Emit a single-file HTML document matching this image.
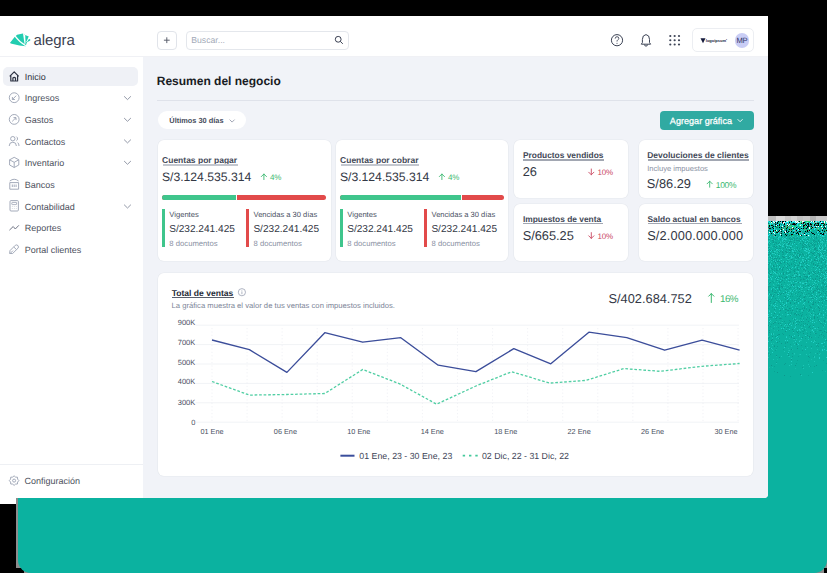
<!DOCTYPE html>
<html><head><meta charset="utf-8"><style>
html,body{margin:0;padding:0;width:827px;height:573px;overflow:hidden;background:#000}
.r{position:absolute}
.t{position:absolute;line-height:1;white-space:nowrap;font-family:"Liberation Sans", sans-serif;text-rendering:geometricPrecision}
svg text{font-family:"Liberation Sans", sans-serif}
</style></head><body>
<div class="r" style="left:0px;top:0px;width:827px;height:573px;background:#000;"></div><div class="r" style="left:16px;top:216px;width:811px;height:357px;background:#8c8c8c;"></div><div class="r" style="left:16px;top:568px;width:8px;height:5px;background:#000;"></div><div class="r" style="left:824px;top:568px;width:3px;height:5px;background:#000;"></div><div class="r" style="left:17.5px;top:221px;width:809.5px;height:352px;background:#0bb2a0;border-radius:0 0 13px 13px"></div><svg class="r" style="left:0;top:0" width="827" height="573"><rect x="768" y="216" width="8" height="5" fill="#bdbdbd"/><rect x="776" y="216" width="9" height="5" fill="#dadada"/><rect x="785" y="216" width="6" height="5" fill="#c9c9c9"/><rect x="791" y="216" width="6" height="5" fill="#d4d4d4"/><rect x="797" y="216" width="6" height="5" fill="#c2c2c2"/><rect x="803" y="216" width="7" height="5" fill="#c9c9c9"/><rect x="810" y="216" width="6" height="5" fill="#b3b3b3"/><rect x="816" y="216" width="9" height="5" fill="#c9c9c9"/><rect x="825" y="216" width="7" height="5" fill="#c9c9c9"/><rect x="768" y="221" width="1" height="1" fill="#1ee6ef"/><rect x="770" y="221" width="1" height="1" fill="#1ee6ef"/><rect x="771" y="221" width="1" height="1" fill="#000000"/><rect x="773" y="221" width="1" height="1" fill="#ffffff"/><rect x="774" y="221" width="1" height="1" fill="#1ee6ef"/><rect x="775" y="221" width="1" height="1" fill="#9ad0d0"/><rect x="776" y="221" width="1" height="1" fill="#ffffff"/><rect x="777" y="221" width="1" height="1" fill="#1ee6ef"/><rect x="778" y="221" width="1" height="1" fill="#000000"/><rect x="780" y="221" width="1" height="1" fill="#000000"/><rect x="781" y="221" width="1" height="1" fill="#1ee6ef"/><rect x="782" y="221" width="1" height="1" fill="#000000"/><rect x="783" y="221" width="1" height="1" fill="#000000"/><rect x="784" y="221" width="1" height="1" fill="#1ee6ef"/><rect x="785" y="221" width="1" height="1" fill="#000000"/><rect x="786" y="221" width="1" height="1" fill="#7ff0f0"/><rect x="787" y="221" width="1" height="1" fill="#ffffff"/><rect x="788" y="221" width="1" height="1" fill="#1ee6ef"/><rect x="789" y="221" width="1" height="1" fill="#22d86a"/><rect x="790" y="221" width="1" height="1" fill="#1ee6ef"/><rect x="791" y="221" width="1" height="1" fill="#000000"/><rect x="792" y="221" width="1" height="1" fill="#7ff0f0"/><rect x="793" y="221" width="1" height="1" fill="#7ff0f0"/><rect x="794" y="221" width="1" height="1" fill="#1ee6ef"/><rect x="795" y="221" width="1" height="1" fill="#ffffff"/><rect x="796" y="221" width="1" height="1" fill="#7ff0f0"/><rect x="797" y="221" width="1" height="1" fill="#ffffff"/><rect x="798" y="221" width="1" height="1" fill="#22d86a"/><rect x="799" y="221" width="1" height="1" fill="#000000"/><rect x="800" y="221" width="1" height="1" fill="#9ad0d0"/><rect x="801" y="221" width="1" height="1" fill="#22d86a"/><rect x="802" y="221" width="1" height="1" fill="#ffffff"/><rect x="803" y="221" width="1" height="1" fill="#ffffff"/><rect x="804" y="221" width="1" height="1" fill="#1ee6ef"/><rect x="806" y="221" width="1" height="1" fill="#22d86a"/><rect x="807" y="221" width="1" height="1" fill="#22d86a"/><rect x="808" y="221" width="1" height="1" fill="#22d86a"/><rect x="809" y="221" width="1" height="1" fill="#22d86a"/><rect x="811" y="221" width="1" height="1" fill="#ffffff"/><rect x="813" y="221" width="1" height="1" fill="#ffffff"/><rect x="814" y="221" width="1" height="1" fill="#000000"/><rect x="815" y="221" width="1" height="1" fill="#1ee6ef"/><rect x="816" y="221" width="1" height="1" fill="#7ff0f0"/><rect x="817" y="221" width="1" height="1" fill="#1ee6ef"/><rect x="818" y="221" width="1" height="1" fill="#9ad0d0"/><rect x="819" y="221" width="1" height="1" fill="#1ee6ef"/><rect x="820" y="221" width="1" height="1" fill="#000000"/><rect x="821" y="221" width="1" height="1" fill="#1ee6ef"/><rect x="824" y="221" width="1" height="1" fill="#ffffff"/><rect x="826" y="221" width="1" height="1" fill="#ffffff"/><rect x="769" y="222" width="1" height="1" fill="#1ee6ef"/><rect x="770" y="222" width="1" height="1" fill="#22d86a"/><rect x="771" y="222" width="1" height="1" fill="#ffffff"/><rect x="773" y="222" width="1" height="1" fill="#7ff0f0"/><rect x="774" y="222" width="1" height="1" fill="#ffffff"/><rect x="775" y="222" width="1" height="1" fill="#000000"/><rect x="776" y="222" width="1" height="1" fill="#1ee6ef"/><rect x="777" y="222" width="1" height="1" fill="#000000"/><rect x="779" y="222" width="1" height="1" fill="#22d86a"/><rect x="780" y="222" width="1" height="1" fill="#9ad0d0"/><rect x="781" y="222" width="1" height="1" fill="#9ad0d0"/><rect x="782" y="222" width="1" height="1" fill="#000000"/><rect x="783" y="222" width="1" height="1" fill="#ffffff"/><rect x="784" y="222" width="1" height="1" fill="#ffffff"/><rect x="785" y="222" width="1" height="1" fill="#1ee6ef"/><rect x="786" y="222" width="1" height="1" fill="#1ee6ef"/><rect x="787" y="222" width="1" height="1" fill="#1ee6ef"/><rect x="788" y="222" width="1" height="1" fill="#1ee6ef"/><rect x="789" y="222" width="1" height="1" fill="#000000"/><rect x="790" y="222" width="1" height="1" fill="#1ee6ef"/><rect x="792" y="222" width="1" height="1" fill="#1ee6ef"/><rect x="794" y="222" width="1" height="1" fill="#1ee6ef"/><rect x="795" y="222" width="1" height="1" fill="#7ff0f0"/><rect x="796" y="222" width="1" height="1" fill="#ffffff"/><rect x="797" y="222" width="1" height="1" fill="#9ad0d0"/><rect x="798" y="222" width="1" height="1" fill="#ffffff"/><rect x="799" y="222" width="1" height="1" fill="#7ff0f0"/><rect x="800" y="222" width="1" height="1" fill="#1ee6ef"/><rect x="801" y="222" width="1" height="1" fill="#22d86a"/><rect x="802" y="222" width="1" height="1" fill="#9ad0d0"/><rect x="803" y="222" width="1" height="1" fill="#000000"/><rect x="804" y="222" width="1" height="1" fill="#000000"/><rect x="805" y="222" width="1" height="1" fill="#22d86a"/><rect x="806" y="222" width="1" height="1" fill="#1ee6ef"/><rect x="807" y="222" width="1" height="1" fill="#7ff0f0"/><rect x="810" y="222" width="1" height="1" fill="#7ff0f0"/><rect x="811" y="222" width="1" height="1" fill="#1ee6ef"/><rect x="812" y="222" width="1" height="1" fill="#1ee6ef"/><rect x="813" y="222" width="1" height="1" fill="#9ad0d0"/><rect x="814" y="222" width="1" height="1" fill="#22d86a"/><rect x="815" y="222" width="1" height="1" fill="#9ad0d0"/><rect x="816" y="222" width="1" height="1" fill="#9ad0d0"/><rect x="820" y="222" width="1" height="1" fill="#1ee6ef"/><rect x="821" y="222" width="1" height="1" fill="#ffffff"/><rect x="822" y="222" width="1" height="1" fill="#1ee6ef"/><rect x="824" y="222" width="1" height="1" fill="#ffffff"/><rect x="825" y="222" width="1" height="1" fill="#22d86a"/><rect x="826" y="222" width="1" height="1" fill="#7ff0f0"/><rect x="768" y="223" width="1" height="1" fill="#0c7a70"/><rect x="770" y="223" width="1" height="1" fill="#1ee6ef"/><rect x="771" y="223" width="1" height="1" fill="#35c9b9"/><rect x="772" y="223" width="1" height="1" fill="#1ee6ef"/><rect x="773" y="223" width="1" height="1" fill="#8a8a8a"/><rect x="775" y="223" width="1" height="1" fill="#0c7a70"/><rect x="777" y="223" width="1" height="1" fill="#000000"/><rect x="781" y="223" width="1" height="1" fill="#1ee6ef"/><rect x="782" y="223" width="1" height="1" fill="#0c7a70"/><rect x="783" y="223" width="1" height="1" fill="#ffffff"/><rect x="784" y="223" width="1" height="1" fill="#000000"/><rect x="785" y="223" width="1" height="1" fill="#1ee6ef"/><rect x="787" y="223" width="1" height="1" fill="#8a8a8a"/><rect x="790" y="223" width="1" height="1" fill="#8a8a8a"/><rect x="792" y="223" width="1" height="1" fill="#0c7a70"/><rect x="793" y="223" width="1" height="1" fill="#0a0a0a"/><rect x="794" y="223" width="1" height="1" fill="#000000"/><rect x="796" y="223" width="1" height="1" fill="#000000"/><rect x="797" y="223" width="1" height="1" fill="#1ee6ef"/><rect x="798" y="223" width="1" height="1" fill="#1ee6ef"/><rect x="800" y="223" width="1" height="1" fill="#22d86a"/><rect x="801" y="223" width="1" height="1" fill="#0a0a0a"/><rect x="802" y="223" width="1" height="1" fill="#8a8a8a"/><rect x="803" y="223" width="1" height="1" fill="#0a0a0a"/><rect x="804" y="223" width="1" height="1" fill="#1ee6ef"/><rect x="805" y="223" width="1" height="1" fill="#0c7a70"/><rect x="807" y="223" width="1" height="1" fill="#0a0a0a"/><rect x="808" y="223" width="1" height="1" fill="#0a0a0a"/><rect x="809" y="223" width="1" height="1" fill="#1ee6ef"/><rect x="810" y="223" width="1" height="1" fill="#000000"/><rect x="813" y="223" width="1" height="1" fill="#1ee6ef"/><rect x="814" y="223" width="1" height="1" fill="#35c9b9"/><rect x="815" y="223" width="1" height="1" fill="#000000"/><rect x="816" y="223" width="1" height="1" fill="#0c7a70"/><rect x="817" y="223" width="1" height="1" fill="#0a0a0a"/><rect x="818" y="223" width="1" height="1" fill="#000000"/><rect x="820" y="223" width="1" height="1" fill="#1ee6ef"/><rect x="821" y="223" width="1" height="1" fill="#000000"/><rect x="822" y="223" width="1" height="1" fill="#0a0a0a"/><rect x="823" y="223" width="1" height="1" fill="#000000"/><rect x="824" y="223" width="1" height="1" fill="#8a8a8a"/><rect x="826" y="223" width="1" height="1" fill="#1ee6ef"/><rect x="768" y="224" width="1" height="1" fill="#35c9b9"/><rect x="769" y="224" width="1" height="1" fill="#35c9b9"/><rect x="770" y="224" width="1" height="1" fill="#1ee6ef"/><rect x="771" y="224" width="1" height="1" fill="#22d86a"/><rect x="774" y="224" width="1" height="1" fill="#35c9b9"/><rect x="775" y="224" width="1" height="1" fill="#000000"/><rect x="776" y="224" width="1" height="1" fill="#0c7a70"/><rect x="777" y="224" width="1" height="1" fill="#1ee6ef"/><rect x="778" y="224" width="1" height="1" fill="#1ee6ef"/><rect x="779" y="224" width="1" height="1" fill="#000000"/><rect x="781" y="224" width="1" height="1" fill="#0c7a70"/><rect x="782" y="224" width="1" height="1" fill="#1ee6ef"/><rect x="784" y="224" width="1" height="1" fill="#000000"/><rect x="785" y="224" width="1" height="1" fill="#35c9b9"/><rect x="786" y="224" width="1" height="1" fill="#1ee6ef"/><rect x="787" y="224" width="1" height="1" fill="#ffffff"/><rect x="789" y="224" width="1" height="1" fill="#ffffff"/><rect x="790" y="224" width="1" height="1" fill="#0c7a70"/><rect x="791" y="224" width="1" height="1" fill="#0c7a70"/><rect x="792" y="224" width="1" height="1" fill="#0a0a0a"/><rect x="793" y="224" width="1" height="1" fill="#000000"/><rect x="794" y="224" width="1" height="1" fill="#0a0a0a"/><rect x="795" y="224" width="1" height="1" fill="#0a0a0a"/><rect x="797" y="224" width="1" height="1" fill="#1ee6ef"/><rect x="799" y="224" width="1" height="1" fill="#22d86a"/><rect x="800" y="224" width="1" height="1" fill="#1ee6ef"/><rect x="801" y="224" width="1" height="1" fill="#1ee6ef"/><rect x="804" y="224" width="1" height="1" fill="#22d86a"/><rect x="805" y="224" width="1" height="1" fill="#0a0a0a"/><rect x="807" y="224" width="1" height="1" fill="#0c7a70"/><rect x="808" y="224" width="1" height="1" fill="#000000"/><rect x="810" y="224" width="1" height="1" fill="#000000"/><rect x="811" y="224" width="1" height="1" fill="#000000"/><rect x="812" y="224" width="1" height="1" fill="#22d86a"/><rect x="813" y="224" width="1" height="1" fill="#1ee6ef"/><rect x="814" y="224" width="1" height="1" fill="#000000"/><rect x="815" y="224" width="1" height="1" fill="#0c7a70"/><rect x="817" y="224" width="1" height="1" fill="#22d86a"/><rect x="818" y="224" width="1" height="1" fill="#000000"/><rect x="819" y="224" width="1" height="1" fill="#1ee6ef"/><rect x="822" y="224" width="1" height="1" fill="#1ee6ef"/><rect x="823" y="224" width="1" height="1" fill="#22d86a"/><rect x="824" y="224" width="1" height="1" fill="#0a0a0a"/><rect x="826" y="224" width="1" height="1" fill="#0a0a0a"/><rect x="768" y="225" width="1" height="1" fill="#22d86a"/><rect x="769" y="225" width="1" height="1" fill="#000000"/><rect x="771" y="225" width="1" height="1" fill="#000000"/><rect x="772" y="225" width="1" height="1" fill="#0a0a0a"/><rect x="774" y="225" width="1" height="1" fill="#1ee6ef"/><rect x="776" y="225" width="1" height="1" fill="#ffffff"/><rect x="777" y="225" width="1" height="1" fill="#0a0a0a"/><rect x="779" y="225" width="1" height="1" fill="#0a0a0a"/><rect x="780" y="225" width="1" height="1" fill="#1ee6ef"/><rect x="782" y="225" width="1" height="1" fill="#1ee6ef"/><rect x="783" y="225" width="1" height="1" fill="#0c7a70"/><rect x="786" y="225" width="1" height="1" fill="#22d86a"/><rect x="787" y="225" width="1" height="1" fill="#000000"/><rect x="788" y="225" width="1" height="1" fill="#ffffff"/><rect x="790" y="225" width="1" height="1" fill="#22d86a"/><rect x="791" y="225" width="1" height="1" fill="#22d86a"/><rect x="792" y="225" width="1" height="1" fill="#1ee6ef"/><rect x="793" y="225" width="1" height="1" fill="#35c9b9"/><rect x="794" y="225" width="1" height="1" fill="#0c7a70"/><rect x="797" y="225" width="1" height="1" fill="#1ee6ef"/><rect x="798" y="225" width="1" height="1" fill="#22d86a"/><rect x="799" y="225" width="1" height="1" fill="#1ee6ef"/><rect x="800" y="225" width="1" height="1" fill="#ffffff"/><rect x="801" y="225" width="1" height="1" fill="#22d86a"/><rect x="802" y="225" width="1" height="1" fill="#1ee6ef"/><rect x="803" y="225" width="1" height="1" fill="#000000"/><rect x="804" y="225" width="1" height="1" fill="#000000"/><rect x="805" y="225" width="1" height="1" fill="#8a8a8a"/><rect x="806" y="225" width="1" height="1" fill="#000000"/><rect x="807" y="225" width="1" height="1" fill="#1ee6ef"/><rect x="808" y="225" width="1" height="1" fill="#0a0a0a"/><rect x="810" y="225" width="1" height="1" fill="#8a8a8a"/><rect x="811" y="225" width="1" height="1" fill="#0c7a70"/><rect x="812" y="225" width="1" height="1" fill="#35c9b9"/><rect x="813" y="225" width="1" height="1" fill="#8a8a8a"/><rect x="814" y="225" width="1" height="1" fill="#000000"/><rect x="816" y="225" width="1" height="1" fill="#0a0a0a"/><rect x="817" y="225" width="1" height="1" fill="#0a0a0a"/><rect x="818" y="225" width="1" height="1" fill="#0a0a0a"/><rect x="820" y="225" width="1" height="1" fill="#000000"/><rect x="822" y="225" width="1" height="1" fill="#1ee6ef"/><rect x="823" y="225" width="1" height="1" fill="#000000"/><rect x="824" y="225" width="1" height="1" fill="#0c7a70"/><rect x="826" y="225" width="1" height="1" fill="#35c9b9"/><rect x="768" y="226" width="1" height="1" fill="#07b09d"/><rect x="769" y="226" width="1" height="1" fill="#0a0a0a"/><rect x="770" y="226" width="1" height="1" fill="#35c9b9"/><rect x="771" y="226" width="1" height="1" fill="#35c9b9"/><rect x="773" y="226" width="1" height="1" fill="#0a0a0a"/><rect x="775" y="226" width="1" height="1" fill="#0a0a0a"/><rect x="776" y="226" width="1" height="1" fill="#07b09d"/><rect x="777" y="226" width="1" height="1" fill="#07b09d"/><rect x="778" y="226" width="1" height="1" fill="#22d86a"/><rect x="779" y="226" width="1" height="1" fill="#07b09d"/><rect x="780" y="226" width="1" height="1" fill="#07b09d"/><rect x="781" y="226" width="1" height="1" fill="#35c9b9"/><rect x="782" y="226" width="1" height="1" fill="#ffffff"/><rect x="783" y="226" width="1" height="1" fill="#07b09d"/><rect x="784" y="226" width="1" height="1" fill="#000000"/><rect x="785" y="226" width="1" height="1" fill="#07b09d"/><rect x="786" y="226" width="1" height="1" fill="#8a8a8a"/><rect x="787" y="226" width="1" height="1" fill="#22d86a"/><rect x="788" y="226" width="1" height="1" fill="#07b09d"/><rect x="789" y="226" width="1" height="1" fill="#8a8a8a"/><rect x="790" y="226" width="1" height="1" fill="#35c9b9"/><rect x="791" y="226" width="1" height="1" fill="#22d86a"/><rect x="793" y="226" width="1" height="1" fill="#1ee6ef"/><rect x="794" y="226" width="1" height="1" fill="#22d86a"/><rect x="795" y="226" width="1" height="1" fill="#22d86a"/><rect x="796" y="226" width="1" height="1" fill="#35c9b9"/><rect x="799" y="226" width="1" height="1" fill="#22d86a"/><rect x="802" y="226" width="1" height="1" fill="#35c9b9"/><rect x="803" y="226" width="1" height="1" fill="#0a0a0a"/><rect x="805" y="226" width="1" height="1" fill="#22d86a"/><rect x="806" y="226" width="1" height="1" fill="#1ee6ef"/><rect x="807" y="226" width="1" height="1" fill="#000000"/><rect x="808" y="226" width="1" height="1" fill="#0a0a0a"/><rect x="809" y="226" width="1" height="1" fill="#0c7a70"/><rect x="810" y="226" width="1" height="1" fill="#07b09d"/><rect x="811" y="226" width="1" height="1" fill="#000000"/><rect x="812" y="226" width="1" height="1" fill="#1ee6ef"/><rect x="813" y="226" width="1" height="1" fill="#35c9b9"/><rect x="814" y="226" width="1" height="1" fill="#1ee6ef"/><rect x="815" y="226" width="1" height="1" fill="#35c9b9"/><rect x="816" y="226" width="1" height="1" fill="#ffffff"/><rect x="817" y="226" width="1" height="1" fill="#1ee6ef"/><rect x="818" y="226" width="1" height="1" fill="#ffffff"/><rect x="819" y="226" width="1" height="1" fill="#0c7a70"/><rect x="820" y="226" width="1" height="1" fill="#07b09d"/><rect x="821" y="226" width="1" height="1" fill="#ffffff"/><rect x="822" y="226" width="1" height="1" fill="#1ee6ef"/><rect x="823" y="226" width="1" height="1" fill="#07b09d"/><rect x="824" y="226" width="1" height="1" fill="#0c7a70"/><rect x="825" y="226" width="1" height="1" fill="#ffffff"/><rect x="768" y="227" width="1" height="1" fill="#0c7a70"/><rect x="772" y="227" width="1" height="1" fill="#000000"/><rect x="774" y="227" width="1" height="1" fill="#1ee6ef"/><rect x="775" y="227" width="1" height="1" fill="#22d86a"/><rect x="776" y="227" width="1" height="1" fill="#0c7a70"/><rect x="777" y="227" width="1" height="1" fill="#0c7a70"/><rect x="779" y="227" width="1" height="1" fill="#000000"/><rect x="781" y="227" width="1" height="1" fill="#0a0a0a"/><rect x="782" y="227" width="1" height="1" fill="#07b09d"/><rect x="783" y="227" width="1" height="1" fill="#07b09d"/><rect x="784" y="227" width="1" height="1" fill="#8a8a8a"/><rect x="786" y="227" width="1" height="1" fill="#22d86a"/><rect x="787" y="227" width="1" height="1" fill="#0a0a0a"/><rect x="788" y="227" width="1" height="1" fill="#35c9b9"/><rect x="789" y="227" width="1" height="1" fill="#22d86a"/><rect x="790" y="227" width="1" height="1" fill="#07b09d"/><rect x="792" y="227" width="1" height="1" fill="#ffffff"/><rect x="793" y="227" width="1" height="1" fill="#22d86a"/><rect x="794" y="227" width="1" height="1" fill="#07b09d"/><rect x="795" y="227" width="1" height="1" fill="#1ee6ef"/><rect x="796" y="227" width="1" height="1" fill="#000000"/><rect x="797" y="227" width="1" height="1" fill="#07b09d"/><rect x="798" y="227" width="1" height="1" fill="#1ee6ef"/><rect x="799" y="227" width="1" height="1" fill="#0c7a70"/><rect x="801" y="227" width="1" height="1" fill="#1ee6ef"/><rect x="802" y="227" width="1" height="1" fill="#1ee6ef"/><rect x="803" y="227" width="1" height="1" fill="#0c7a70"/><rect x="804" y="227" width="1" height="1" fill="#0c7a70"/><rect x="805" y="227" width="1" height="1" fill="#22d86a"/><rect x="807" y="227" width="1" height="1" fill="#000000"/><rect x="809" y="227" width="1" height="1" fill="#ffffff"/><rect x="811" y="227" width="1" height="1" fill="#22d86a"/><rect x="812" y="227" width="1" height="1" fill="#000000"/><rect x="813" y="227" width="1" height="1" fill="#8a8a8a"/><rect x="815" y="227" width="1" height="1" fill="#0a0a0a"/><rect x="816" y="227" width="1" height="1" fill="#07b09d"/><rect x="818" y="227" width="1" height="1" fill="#22d86a"/><rect x="820" y="227" width="1" height="1" fill="#07b09d"/><rect x="821" y="227" width="1" height="1" fill="#22d86a"/><rect x="824" y="227" width="1" height="1" fill="#000000"/><rect x="825" y="227" width="1" height="1" fill="#07b09d"/><rect x="768" y="228" width="1" height="1" fill="#8a8a8a"/><rect x="769" y="228" width="1" height="1" fill="#000000"/><rect x="770" y="228" width="1" height="1" fill="#0a0a0a"/><rect x="773" y="228" width="1" height="1" fill="#000000"/><rect x="774" y="228" width="1" height="1" fill="#1ee6ef"/><rect x="775" y="228" width="1" height="1" fill="#07b09d"/><rect x="776" y="228" width="1" height="1" fill="#07b09d"/><rect x="780" y="228" width="1" height="1" fill="#07b09d"/><rect x="781" y="228" width="1" height="1" fill="#07b09d"/><rect x="782" y="228" width="1" height="1" fill="#8a8a8a"/><rect x="784" y="228" width="1" height="1" fill="#22d86a"/><rect x="786" y="228" width="1" height="1" fill="#0a0a0a"/><rect x="787" y="228" width="1" height="1" fill="#07b09d"/><rect x="789" y="228" width="1" height="1" fill="#22d86a"/><rect x="790" y="228" width="1" height="1" fill="#8a8a8a"/><rect x="791" y="228" width="1" height="1" fill="#22d86a"/><rect x="792" y="228" width="1" height="1" fill="#8a8a8a"/><rect x="793" y="228" width="1" height="1" fill="#0a0a0a"/><rect x="794" y="228" width="1" height="1" fill="#35c9b9"/><rect x="795" y="228" width="1" height="1" fill="#0c7a70"/><rect x="796" y="228" width="1" height="1" fill="#1ee6ef"/><rect x="797" y="228" width="1" height="1" fill="#1ee6ef"/><rect x="798" y="228" width="1" height="1" fill="#000000"/><rect x="801" y="228" width="1" height="1" fill="#000000"/><rect x="802" y="228" width="1" height="1" fill="#07b09d"/><rect x="803" y="228" width="1" height="1" fill="#000000"/><rect x="804" y="228" width="1" height="1" fill="#07b09d"/><rect x="805" y="228" width="1" height="1" fill="#0c7a70"/><rect x="806" y="228" width="1" height="1" fill="#000000"/><rect x="809" y="228" width="1" height="1" fill="#ffffff"/><rect x="810" y="228" width="1" height="1" fill="#07b09d"/><rect x="811" y="228" width="1" height="1" fill="#0a0a0a"/><rect x="812" y="228" width="1" height="1" fill="#35c9b9"/><rect x="814" y="228" width="1" height="1" fill="#1ee6ef"/><rect x="815" y="228" width="1" height="1" fill="#1ee6ef"/><rect x="816" y="228" width="1" height="1" fill="#22d86a"/><rect x="817" y="228" width="1" height="1" fill="#8a8a8a"/><rect x="818" y="228" width="1" height="1" fill="#1ee6ef"/><rect x="820" y="228" width="1" height="1" fill="#07b09d"/><rect x="821" y="228" width="1" height="1" fill="#8a8a8a"/><rect x="822" y="228" width="1" height="1" fill="#ffffff"/><rect x="823" y="228" width="1" height="1" fill="#000000"/><rect x="825" y="228" width="1" height="1" fill="#000000"/><rect x="768" y="229" width="1" height="1" fill="#35c9b9"/><rect x="774" y="229" width="1" height="1" fill="#1ee6ef"/><rect x="776" y="229" width="1" height="1" fill="#35c9b9"/><rect x="777" y="229" width="1" height="1" fill="#07b09d"/><rect x="781" y="229" width="1" height="1" fill="#000000"/><rect x="782" y="229" width="1" height="1" fill="#22d86a"/><rect x="783" y="229" width="1" height="1" fill="#ffffff"/><rect x="785" y="229" width="1" height="1" fill="#07b09d"/><rect x="786" y="229" width="1" height="1" fill="#0c7a70"/><rect x="788" y="229" width="1" height="1" fill="#07b09d"/><rect x="789" y="229" width="1" height="1" fill="#000000"/><rect x="791" y="229" width="1" height="1" fill="#0a0a0a"/><rect x="793" y="229" width="1" height="1" fill="#0c7a70"/><rect x="795" y="229" width="1" height="1" fill="#07b09d"/><rect x="796" y="229" width="1" height="1" fill="#07b09d"/><rect x="798" y="229" width="1" height="1" fill="#ffffff"/><rect x="799" y="229" width="1" height="1" fill="#000000"/><rect x="801" y="229" width="1" height="1" fill="#1ee6ef"/><rect x="804" y="229" width="1" height="1" fill="#22d86a"/><rect x="805" y="229" width="1" height="1" fill="#8a8a8a"/><rect x="806" y="229" width="1" height="1" fill="#07b09d"/><rect x="808" y="229" width="1" height="1" fill="#22d86a"/><rect x="809" y="229" width="1" height="1" fill="#07b09d"/><rect x="814" y="229" width="1" height="1" fill="#1ee6ef"/><rect x="815" y="229" width="1" height="1" fill="#07b09d"/><rect x="818" y="229" width="1" height="1" fill="#22d86a"/><rect x="821" y="229" width="1" height="1" fill="#35c9b9"/><rect x="822" y="229" width="1" height="1" fill="#07b09d"/><rect x="824" y="229" width="1" height="1" fill="#07b09d"/><rect x="768" y="230" width="1" height="1" fill="#0c7a70"/><rect x="769" y="230" width="1" height="1" fill="#07b09d"/><rect x="771" y="230" width="1" height="1" fill="#1ee6ef"/><rect x="772" y="230" width="1" height="1" fill="#1ee6ef"/><rect x="773" y="230" width="1" height="1" fill="#000000"/><rect x="775" y="230" width="1" height="1" fill="#0a0a0a"/><rect x="776" y="230" width="1" height="1" fill="#ffffff"/><rect x="779" y="230" width="1" height="1" fill="#000000"/><rect x="780" y="230" width="1" height="1" fill="#ffffff"/><rect x="781" y="230" width="1" height="1" fill="#07b09d"/><rect x="783" y="230" width="1" height="1" fill="#1ee6ef"/><rect x="784" y="230" width="1" height="1" fill="#8a8a8a"/><rect x="786" y="230" width="1" height="1" fill="#0a0a0a"/><rect x="789" y="230" width="1" height="1" fill="#22d86a"/><rect x="790" y="230" width="1" height="1" fill="#8a8a8a"/><rect x="791" y="230" width="1" height="1" fill="#22d86a"/><rect x="793" y="230" width="1" height="1" fill="#1ee6ef"/><rect x="794" y="230" width="1" height="1" fill="#1ee6ef"/><rect x="795" y="230" width="1" height="1" fill="#8a8a8a"/><rect x="796" y="230" width="1" height="1" fill="#000000"/><rect x="797" y="230" width="1" height="1" fill="#1ee6ef"/><rect x="798" y="230" width="1" height="1" fill="#1ee6ef"/><rect x="800" y="230" width="1" height="1" fill="#35c9b9"/><rect x="802" y="230" width="1" height="1" fill="#35c9b9"/><rect x="804" y="230" width="1" height="1" fill="#35c9b9"/><rect x="806" y="230" width="1" height="1" fill="#22d86a"/><rect x="807" y="230" width="1" height="1" fill="#000000"/><rect x="808" y="230" width="1" height="1" fill="#8a8a8a"/><rect x="809" y="230" width="1" height="1" fill="#000000"/><rect x="810" y="230" width="1" height="1" fill="#1ee6ef"/><rect x="811" y="230" width="1" height="1" fill="#22d86a"/><rect x="814" y="230" width="1" height="1" fill="#07b09d"/><rect x="817" y="230" width="1" height="1" fill="#0c7a70"/><rect x="818" y="230" width="1" height="1" fill="#000000"/><rect x="819" y="230" width="1" height="1" fill="#22d86a"/><rect x="820" y="230" width="1" height="1" fill="#07b09d"/><rect x="822" y="230" width="1" height="1" fill="#000000"/><rect x="824" y="230" width="1" height="1" fill="#0c7a70"/><rect x="825" y="230" width="1" height="1" fill="#22d86a"/><rect x="826" y="230" width="1" height="1" fill="#000000"/><rect x="770" y="231" width="1" height="1" fill="#000000"/><rect x="773" y="231" width="1" height="1" fill="#0a0a0a"/><rect x="774" y="231" width="1" height="1" fill="#1ee6ef"/><rect x="775" y="231" width="1" height="1" fill="#22d86a"/><rect x="776" y="231" width="1" height="1" fill="#22d86a"/><rect x="778" y="231" width="1" height="1" fill="#000000"/><rect x="779" y="231" width="1" height="1" fill="#8a8a8a"/><rect x="781" y="231" width="1" height="1" fill="#000000"/><rect x="784" y="231" width="1" height="1" fill="#1ee6ef"/><rect x="785" y="231" width="1" height="1" fill="#ffffff"/><rect x="786" y="231" width="1" height="1" fill="#000000"/><rect x="787" y="231" width="1" height="1" fill="#1ee6ef"/><rect x="788" y="231" width="1" height="1" fill="#000000"/><rect x="789" y="231" width="1" height="1" fill="#0c7a70"/><rect x="790" y="231" width="1" height="1" fill="#1ee6ef"/><rect x="791" y="231" width="1" height="1" fill="#000000"/><rect x="795" y="231" width="1" height="1" fill="#8a8a8a"/><rect x="798" y="231" width="1" height="1" fill="#0c7a70"/><rect x="799" y="231" width="1" height="1" fill="#0a0a0a"/><rect x="800" y="231" width="1" height="1" fill="#000000"/><rect x="801" y="231" width="1" height="1" fill="#35c9b9"/><rect x="805" y="231" width="1" height="1" fill="#000000"/><rect x="807" y="231" width="1" height="1" fill="#000000"/><rect x="810" y="231" width="1" height="1" fill="#07b09d"/><rect x="813" y="231" width="1" height="1" fill="#07b09d"/><rect x="817" y="231" width="1" height="1" fill="#35c9b9"/><rect x="818" y="231" width="1" height="1" fill="#1ee6ef"/><rect x="819" y="231" width="1" height="1" fill="#0a0a0a"/><rect x="820" y="231" width="1" height="1" fill="#0c7a70"/><rect x="821" y="231" width="1" height="1" fill="#1ee6ef"/><rect x="824" y="231" width="1" height="1" fill="#0a0a0a"/><rect x="769" y="232" width="1" height="1" fill="#ffffff"/><rect x="773" y="232" width="1" height="1" fill="#ffffff"/><rect x="774" y="232" width="1" height="1" fill="#1ee6ef"/><rect x="775" y="232" width="1" height="1" fill="#07b09d"/><rect x="776" y="232" width="1" height="1" fill="#0a0a0a"/><rect x="777" y="232" width="1" height="1" fill="#000000"/><rect x="778" y="232" width="1" height="1" fill="#35c9b9"/><rect x="780" y="232" width="1" height="1" fill="#8a8a8a"/><rect x="783" y="232" width="1" height="1" fill="#35c9b9"/><rect x="784" y="232" width="1" height="1" fill="#000000"/><rect x="785" y="232" width="1" height="1" fill="#ffffff"/><rect x="786" y="232" width="1" height="1" fill="#07b09d"/><rect x="787" y="232" width="1" height="1" fill="#0a0a0a"/><rect x="789" y="232" width="1" height="1" fill="#1ee6ef"/><rect x="790" y="232" width="1" height="1" fill="#07b09d"/><rect x="791" y="232" width="1" height="1" fill="#07b09d"/><rect x="793" y="232" width="1" height="1" fill="#0a0a0a"/><rect x="797" y="232" width="1" height="1" fill="#000000"/><rect x="801" y="232" width="1" height="1" fill="#35c9b9"/><rect x="802" y="232" width="1" height="1" fill="#07b09d"/><rect x="804" y="232" width="1" height="1" fill="#07b09d"/><rect x="806" y="232" width="1" height="1" fill="#0c7a70"/><rect x="808" y="232" width="1" height="1" fill="#0c7a70"/><rect x="810" y="232" width="1" height="1" fill="#35c9b9"/><rect x="811" y="232" width="1" height="1" fill="#0a0a0a"/><rect x="816" y="232" width="1" height="1" fill="#0c7a70"/><rect x="817" y="232" width="1" height="1" fill="#1ee6ef"/><rect x="818" y="232" width="1" height="1" fill="#07b09d"/><rect x="822" y="232" width="1" height="1" fill="#07b09d"/><rect x="823" y="232" width="1" height="1" fill="#07b09d"/><rect x="826" y="232" width="1" height="1" fill="#35c9b9"/><rect x="771" y="233" width="1" height="1" fill="#0a0a0a"/><rect x="773" y="233" width="1" height="1" fill="#07b09d"/><rect x="774" y="233" width="1" height="1" fill="#ffffff"/><rect x="777" y="233" width="1" height="1" fill="#07b09d"/><rect x="778" y="233" width="1" height="1" fill="#1ee6ef"/><rect x="779" y="233" width="1" height="1" fill="#07b09d"/><rect x="781" y="233" width="1" height="1" fill="#0a0a0a"/><rect x="782" y="233" width="1" height="1" fill="#07b09d"/><rect x="789" y="233" width="1" height="1" fill="#22d86a"/><rect x="794" y="233" width="1" height="1" fill="#1ee6ef"/><rect x="796" y="233" width="1" height="1" fill="#000000"/><rect x="797" y="233" width="1" height="1" fill="#0c7a70"/><rect x="798" y="233" width="1" height="1" fill="#0a0a0a"/><rect x="799" y="233" width="1" height="1" fill="#1ee6ef"/><rect x="801" y="233" width="1" height="1" fill="#1ee6ef"/><rect x="802" y="233" width="1" height="1" fill="#8a8a8a"/><rect x="804" y="233" width="1" height="1" fill="#000000"/><rect x="806" y="233" width="1" height="1" fill="#1ee6ef"/><rect x="808" y="233" width="1" height="1" fill="#1ee6ef"/><rect x="812" y="233" width="1" height="1" fill="#000000"/><rect x="813" y="233" width="1" height="1" fill="#0a0a0a"/><rect x="820" y="233" width="1" height="1" fill="#000000"/><rect x="821" y="233" width="1" height="1" fill="#0a0a0a"/><rect x="822" y="233" width="1" height="1" fill="#1ee6ef"/><rect x="823" y="233" width="1" height="1" fill="#000000"/><rect x="825" y="233" width="1" height="1" fill="#8a8a8a"/><rect x="769" y="234" width="1" height="1" fill="#1ee6ef"/><rect x="776" y="234" width="1" height="1" fill="#07b09d"/><rect x="777" y="234" width="1" height="1" fill="#07b09d"/><rect x="780" y="234" width="1" height="1" fill="#ffffff"/><rect x="785" y="234" width="1" height="1" fill="#000000"/><rect x="786" y="234" width="1" height="1" fill="#07b09d"/><rect x="787" y="234" width="1" height="1" fill="#0c7a70"/><rect x="791" y="234" width="1" height="1" fill="#000000"/><rect x="792" y="234" width="1" height="1" fill="#0a0a0a"/><rect x="797" y="234" width="1" height="1" fill="#1ee6ef"/><rect x="798" y="234" width="1" height="1" fill="#0a0a0a"/><rect x="799" y="234" width="1" height="1" fill="#22d86a"/><rect x="802" y="234" width="1" height="1" fill="#1ee6ef"/><rect x="804" y="234" width="1" height="1" fill="#ffffff"/><rect x="805" y="234" width="1" height="1" fill="#1ee6ef"/><rect x="814" y="234" width="1" height="1" fill="#000000"/><rect x="818" y="234" width="1" height="1" fill="#1ee6ef"/><rect x="822" y="234" width="1" height="1" fill="#000000"/><rect x="823" y="234" width="1" height="1" fill="#000000"/><rect x="825" y="234" width="1" height="1" fill="#1ee6ef"/><rect x="768" y="235" width="1" height="1" fill="#1ee6ef"/><rect x="773" y="235" width="1" height="1" fill="#8a8a8a"/><rect x="775" y="235" width="1" height="1" fill="#0a0a0a"/><rect x="777" y="235" width="1" height="1" fill="#07b09d"/><rect x="780" y="235" width="1" height="1" fill="#1ee6ef"/><rect x="781" y="235" width="1" height="1" fill="#000000"/><rect x="782" y="235" width="1" height="1" fill="#07b09d"/><rect x="784" y="235" width="1" height="1" fill="#07b09d"/><rect x="786" y="235" width="1" height="1" fill="#000000"/><rect x="787" y="235" width="1" height="1" fill="#07b09d"/><rect x="789" y="235" width="1" height="1" fill="#0c7a70"/><rect x="791" y="235" width="1" height="1" fill="#0c7a70"/><rect x="792" y="235" width="1" height="1" fill="#22d86a"/><rect x="793" y="235" width="1" height="1" fill="#07b09d"/><rect x="800" y="235" width="1" height="1" fill="#ffffff"/><rect x="801" y="235" width="1" height="1" fill="#0a0a0a"/><rect x="806" y="235" width="1" height="1" fill="#000000"/><rect x="808" y="235" width="1" height="1" fill="#ffffff"/><rect x="809" y="235" width="1" height="1" fill="#1ee6ef"/><rect x="810" y="235" width="1" height="1" fill="#07b09d"/><rect x="812" y="235" width="1" height="1" fill="#35c9b9"/><rect x="813" y="235" width="1" height="1" fill="#07b09d"/><rect x="815" y="235" width="1" height="1" fill="#35c9b9"/><rect x="820" y="235" width="1" height="1" fill="#1ee6ef"/><rect x="822" y="235" width="1" height="1" fill="#1ee6ef"/><rect x="823" y="235" width="1" height="1" fill="#07b09d"/><rect x="769" y="236" width="1" height="1" fill="#0b978d"/><rect x="770" y="236" width="1" height="1" fill="#1cc6b6"/><rect x="774" y="236" width="1" height="1" fill="#22d0c8"/><rect x="775" y="236" width="1" height="1" fill="#16bdab"/><rect x="776" y="236" width="1" height="1" fill="#1cc6b6"/><rect x="779" y="236" width="1" height="1" fill="#22d0c8"/><rect x="780" y="236" width="1" height="1" fill="#1cc6b6"/><rect x="781" y="236" width="1" height="1" fill="#08a494"/><rect x="785" y="236" width="1" height="1" fill="#0b978d"/><rect x="788" y="236" width="1" height="1" fill="#08a494"/><rect x="790" y="236" width="1" height="1" fill="#1cc6b6"/><rect x="792" y="236" width="1" height="1" fill="#16bdab"/><rect x="793" y="236" width="1" height="1" fill="#1cc6b6"/><rect x="797" y="236" width="1" height="1" fill="#22d0c8"/><rect x="804" y="236" width="1" height="1" fill="#16bdab"/><rect x="805" y="236" width="1" height="1" fill="#16bdab"/><rect x="806" y="236" width="1" height="1" fill="#22d0c8"/><rect x="808" y="236" width="1" height="1" fill="#22d0c8"/><rect x="809" y="236" width="1" height="1" fill="#1cc6b6"/><rect x="810" y="236" width="1" height="1" fill="#16bdab"/><rect x="813" y="236" width="1" height="1" fill="#16bdab"/><rect x="814" y="236" width="1" height="1" fill="#0a9f92"/><rect x="815" y="236" width="1" height="1" fill="#1cc6b6"/><rect x="816" y="236" width="1" height="1" fill="#0a9f92"/><rect x="817" y="236" width="1" height="1" fill="#1cc6b6"/><rect x="821" y="236" width="1" height="1" fill="#16bdab"/><rect x="822" y="236" width="1" height="1" fill="#22d0c8"/><rect x="823" y="236" width="1" height="1" fill="#22d0c8"/><rect x="824" y="236" width="1" height="1" fill="#1cc6b6"/><rect x="775" y="237" width="1" height="1" fill="#16bdab"/><rect x="777" y="237" width="1" height="1" fill="#0b978d"/><rect x="778" y="237" width="1" height="1" fill="#22d0c8"/><rect x="779" y="237" width="1" height="1" fill="#1cc6b6"/><rect x="780" y="237" width="1" height="1" fill="#1cc6b6"/><rect x="783" y="237" width="1" height="1" fill="#1cc6b6"/><rect x="784" y="237" width="1" height="1" fill="#0a9f92"/><rect x="786" y="237" width="1" height="1" fill="#22d0c8"/><rect x="790" y="237" width="1" height="1" fill="#0a9f92"/><rect x="791" y="237" width="1" height="1" fill="#1cc6b6"/><rect x="793" y="237" width="1" height="1" fill="#0b978d"/><rect x="795" y="237" width="1" height="1" fill="#16bdab"/><rect x="797" y="237" width="1" height="1" fill="#08a494"/><rect x="798" y="237" width="1" height="1" fill="#16bdab"/><rect x="804" y="237" width="1" height="1" fill="#1cc6b6"/><rect x="805" y="237" width="1" height="1" fill="#22d0c8"/><rect x="806" y="237" width="1" height="1" fill="#08a494"/><rect x="808" y="237" width="1" height="1" fill="#08a494"/><rect x="809" y="237" width="1" height="1" fill="#0a9f92"/><rect x="810" y="237" width="1" height="1" fill="#1cc6b6"/><rect x="811" y="237" width="1" height="1" fill="#0a9f92"/><rect x="812" y="237" width="1" height="1" fill="#1cc6b6"/><rect x="816" y="237" width="1" height="1" fill="#0b978d"/><rect x="820" y="237" width="1" height="1" fill="#1cc6b6"/><rect x="821" y="237" width="1" height="1" fill="#16bdab"/><rect x="822" y="237" width="1" height="1" fill="#0a9f92"/><rect x="825" y="237" width="1" height="1" fill="#08a494"/><rect x="769" y="238" width="1" height="1" fill="#22d0c8"/><rect x="773" y="238" width="1" height="1" fill="#0b978d"/><rect x="777" y="238" width="1" height="1" fill="#16bdab"/><rect x="778" y="238" width="1" height="1" fill="#1cc6b6"/><rect x="782" y="238" width="1" height="1" fill="#22d0c8"/><rect x="784" y="238" width="1" height="1" fill="#22d0c8"/><rect x="785" y="238" width="1" height="1" fill="#1cc6b6"/><rect x="786" y="238" width="1" height="1" fill="#08a494"/><rect x="789" y="238" width="1" height="1" fill="#0b978d"/><rect x="791" y="238" width="1" height="1" fill="#08a494"/><rect x="794" y="238" width="1" height="1" fill="#0b978d"/><rect x="796" y="238" width="1" height="1" fill="#0a9f92"/><rect x="797" y="238" width="1" height="1" fill="#0a9f92"/><rect x="799" y="238" width="1" height="1" fill="#0a9f92"/><rect x="802" y="238" width="1" height="1" fill="#1cc6b6"/><rect x="803" y="238" width="1" height="1" fill="#16bdab"/><rect x="804" y="238" width="1" height="1" fill="#1cc6b6"/><rect x="806" y="238" width="1" height="1" fill="#22d0c8"/><rect x="813" y="238" width="1" height="1" fill="#22d0c8"/><rect x="814" y="238" width="1" height="1" fill="#0a9f92"/><rect x="816" y="238" width="1" height="1" fill="#0a9f92"/><rect x="818" y="238" width="1" height="1" fill="#16bdab"/><rect x="820" y="238" width="1" height="1" fill="#08a494"/><rect x="821" y="238" width="1" height="1" fill="#1cc6b6"/><rect x="824" y="238" width="1" height="1" fill="#16bdab"/><rect x="768" y="239" width="1" height="1" fill="#0b978d"/><rect x="769" y="239" width="1" height="1" fill="#08a494"/><rect x="771" y="239" width="1" height="1" fill="#1cc6b6"/><rect x="772" y="239" width="1" height="1" fill="#1cc6b6"/><rect x="775" y="239" width="1" height="1" fill="#0b978d"/><rect x="777" y="239" width="1" height="1" fill="#08a494"/><rect x="778" y="239" width="1" height="1" fill="#22d0c8"/><rect x="780" y="239" width="1" height="1" fill="#0a9f92"/><rect x="782" y="239" width="1" height="1" fill="#16bdab"/><rect x="783" y="239" width="1" height="1" fill="#22d0c8"/><rect x="784" y="239" width="1" height="1" fill="#16bdab"/><rect x="785" y="239" width="1" height="1" fill="#22d0c8"/><rect x="786" y="239" width="1" height="1" fill="#1cc6b6"/><rect x="790" y="239" width="1" height="1" fill="#0b978d"/><rect x="791" y="239" width="1" height="1" fill="#08a494"/><rect x="792" y="239" width="1" height="1" fill="#0b978d"/><rect x="793" y="239" width="1" height="1" fill="#1cc6b6"/><rect x="794" y="239" width="1" height="1" fill="#08a494"/><rect x="797" y="239" width="1" height="1" fill="#16bdab"/><rect x="800" y="239" width="1" height="1" fill="#0b978d"/><rect x="802" y="239" width="1" height="1" fill="#22d0c8"/><rect x="803" y="239" width="1" height="1" fill="#0a9f92"/><rect x="804" y="239" width="1" height="1" fill="#08a494"/><rect x="807" y="239" width="1" height="1" fill="#0b978d"/><rect x="808" y="239" width="1" height="1" fill="#0a9f92"/><rect x="809" y="239" width="1" height="1" fill="#1cc6b6"/><rect x="820" y="239" width="1" height="1" fill="#22d0c8"/><rect x="823" y="239" width="1" height="1" fill="#22d0c8"/><rect x="824" y="239" width="1" height="1" fill="#0a9f92"/><rect x="825" y="239" width="1" height="1" fill="#0a9f92"/><rect x="769" y="240" width="1" height="1" fill="#16bdab"/><rect x="772" y="240" width="1" height="1" fill="#0b978d"/><rect x="773" y="240" width="1" height="1" fill="#0a9f92"/><rect x="774" y="240" width="1" height="1" fill="#1cc6b6"/><rect x="782" y="240" width="1" height="1" fill="#22d0c8"/><rect x="784" y="240" width="1" height="1" fill="#0a9f92"/><rect x="789" y="240" width="1" height="1" fill="#1cc6b6"/><rect x="791" y="240" width="1" height="1" fill="#1cc6b6"/><rect x="792" y="240" width="1" height="1" fill="#16bdab"/><rect x="794" y="240" width="1" height="1" fill="#0a9f92"/><rect x="796" y="240" width="1" height="1" fill="#0a9f92"/><rect x="797" y="240" width="1" height="1" fill="#0a9f92"/><rect x="798" y="240" width="1" height="1" fill="#0a9f92"/><rect x="799" y="240" width="1" height="1" fill="#08a494"/><rect x="800" y="240" width="1" height="1" fill="#22d0c8"/><rect x="803" y="240" width="1" height="1" fill="#22d0c8"/><rect x="807" y="240" width="1" height="1" fill="#22d0c8"/><rect x="813" y="240" width="1" height="1" fill="#0a9f92"/><rect x="814" y="240" width="1" height="1" fill="#0a9f92"/><rect x="818" y="240" width="1" height="1" fill="#0b978d"/><rect x="820" y="240" width="1" height="1" fill="#1cc6b6"/><rect x="822" y="240" width="1" height="1" fill="#08a494"/><rect x="824" y="240" width="1" height="1" fill="#16bdab"/><rect x="825" y="240" width="1" height="1" fill="#0a9f92"/><rect x="826" y="240" width="1" height="1" fill="#22d0c8"/><rect x="768" y="241" width="1" height="1" fill="#1cc6b6"/><rect x="769" y="241" width="1" height="1" fill="#1cc6b6"/><rect x="773" y="241" width="1" height="1" fill="#0a9f92"/><rect x="780" y="241" width="1" height="1" fill="#16bdab"/><rect x="782" y="241" width="1" height="1" fill="#1cc6b6"/><rect x="784" y="241" width="1" height="1" fill="#1cc6b6"/><rect x="789" y="241" width="1" height="1" fill="#0a9f92"/><rect x="790" y="241" width="1" height="1" fill="#0b978d"/><rect x="791" y="241" width="1" height="1" fill="#08a494"/><rect x="795" y="241" width="1" height="1" fill="#16bdab"/><rect x="799" y="241" width="1" height="1" fill="#08a494"/><rect x="802" y="241" width="1" height="1" fill="#0a9f92"/><rect x="805" y="241" width="1" height="1" fill="#22d0c8"/><rect x="807" y="241" width="1" height="1" fill="#08a494"/><rect x="808" y="241" width="1" height="1" fill="#1cc6b6"/><rect x="809" y="241" width="1" height="1" fill="#16bdab"/><rect x="812" y="241" width="1" height="1" fill="#1cc6b6"/><rect x="813" y="241" width="1" height="1" fill="#0a9f92"/><rect x="815" y="241" width="1" height="1" fill="#0a9f92"/><rect x="816" y="241" width="1" height="1" fill="#08a494"/><rect x="818" y="241" width="1" height="1" fill="#08a494"/><rect x="819" y="241" width="1" height="1" fill="#08a494"/><rect x="821" y="241" width="1" height="1" fill="#16bdab"/><rect x="822" y="241" width="1" height="1" fill="#22d0c8"/><rect x="823" y="241" width="1" height="1" fill="#08a494"/><rect x="825" y="241" width="1" height="1" fill="#08a494"/><rect x="768" y="242" width="1" height="1" fill="#1cc6b6"/><rect x="769" y="242" width="1" height="1" fill="#0a9f92"/><rect x="770" y="242" width="1" height="1" fill="#1cc6b6"/><rect x="772" y="242" width="1" height="1" fill="#08a494"/><rect x="773" y="242" width="1" height="1" fill="#0b978d"/><rect x="775" y="242" width="1" height="1" fill="#0a9f92"/><rect x="776" y="242" width="1" height="1" fill="#08a494"/><rect x="779" y="242" width="1" height="1" fill="#0b978d"/><rect x="780" y="242" width="1" height="1" fill="#1cc6b6"/><rect x="784" y="242" width="1" height="1" fill="#0a9f92"/><rect x="785" y="242" width="1" height="1" fill="#16bdab"/><rect x="786" y="242" width="1" height="1" fill="#0a9f92"/><rect x="787" y="242" width="1" height="1" fill="#08a494"/><rect x="788" y="242" width="1" height="1" fill="#22d0c8"/><rect x="789" y="242" width="1" height="1" fill="#0a9f92"/><rect x="794" y="242" width="1" height="1" fill="#0b978d"/><rect x="799" y="242" width="1" height="1" fill="#1cc6b6"/><rect x="801" y="242" width="1" height="1" fill="#16bdab"/><rect x="803" y="242" width="1" height="1" fill="#0a9f92"/><rect x="806" y="242" width="1" height="1" fill="#08a494"/><rect x="809" y="242" width="1" height="1" fill="#08a494"/><rect x="813" y="242" width="1" height="1" fill="#16bdab"/><rect x="814" y="242" width="1" height="1" fill="#0a9f92"/><rect x="817" y="242" width="1" height="1" fill="#08a494"/><rect x="818" y="242" width="1" height="1" fill="#22d0c8"/><rect x="819" y="242" width="1" height="1" fill="#0b978d"/><rect x="820" y="242" width="1" height="1" fill="#1cc6b6"/><rect x="821" y="242" width="1" height="1" fill="#1cc6b6"/><rect x="822" y="242" width="1" height="1" fill="#1cc6b6"/><rect x="823" y="242" width="1" height="1" fill="#16bdab"/><rect x="826" y="242" width="1" height="1" fill="#16bdab"/><rect x="769" y="243" width="1" height="1" fill="#16bdab"/><rect x="770" y="243" width="1" height="1" fill="#08a494"/><rect x="773" y="243" width="1" height="1" fill="#1cc6b6"/><rect x="776" y="243" width="1" height="1" fill="#0a9f92"/><rect x="778" y="243" width="1" height="1" fill="#0b978d"/><rect x="779" y="243" width="1" height="1" fill="#16bdab"/><rect x="782" y="243" width="1" height="1" fill="#16bdab"/><rect x="784" y="243" width="1" height="1" fill="#1cc6b6"/><rect x="786" y="243" width="1" height="1" fill="#16bdab"/><rect x="787" y="243" width="1" height="1" fill="#1cc6b6"/><rect x="788" y="243" width="1" height="1" fill="#0a9f92"/><rect x="789" y="243" width="1" height="1" fill="#0b978d"/><rect x="790" y="243" width="1" height="1" fill="#16bdab"/><rect x="791" y="243" width="1" height="1" fill="#0a9f92"/><rect x="792" y="243" width="1" height="1" fill="#1cc6b6"/><rect x="793" y="243" width="1" height="1" fill="#08a494"/><rect x="794" y="243" width="1" height="1" fill="#22d0c8"/><rect x="798" y="243" width="1" height="1" fill="#16bdab"/><rect x="800" y="243" width="1" height="1" fill="#0b978d"/><rect x="803" y="243" width="1" height="1" fill="#0b978d"/><rect x="804" y="243" width="1" height="1" fill="#16bdab"/><rect x="805" y="243" width="1" height="1" fill="#22d0c8"/><rect x="807" y="243" width="1" height="1" fill="#22d0c8"/><rect x="808" y="243" width="1" height="1" fill="#08a494"/><rect x="809" y="243" width="1" height="1" fill="#16bdab"/><rect x="810" y="243" width="1" height="1" fill="#08a494"/><rect x="811" y="243" width="1" height="1" fill="#0b978d"/><rect x="812" y="243" width="1" height="1" fill="#1cc6b6"/><rect x="813" y="243" width="1" height="1" fill="#08a494"/><rect x="814" y="243" width="1" height="1" fill="#16bdab"/><rect x="816" y="243" width="1" height="1" fill="#16bdab"/><rect x="817" y="243" width="1" height="1" fill="#0a9f92"/><rect x="822" y="243" width="1" height="1" fill="#16bdab"/><rect x="768" y="244" width="1" height="1" fill="#0a9f92"/><rect x="774" y="244" width="1" height="1" fill="#0b978d"/><rect x="778" y="244" width="1" height="1" fill="#1cc6b6"/><rect x="779" y="244" width="1" height="1" fill="#22d0c8"/><rect x="780" y="244" width="1" height="1" fill="#16bdab"/><rect x="783" y="244" width="1" height="1" fill="#22d0c8"/><rect x="784" y="244" width="1" height="1" fill="#08a494"/><rect x="786" y="244" width="1" height="1" fill="#1cc6b6"/><rect x="788" y="244" width="1" height="1" fill="#0b978d"/><rect x="792" y="244" width="1" height="1" fill="#22d0c8"/><rect x="796" y="244" width="1" height="1" fill="#0a9f92"/><rect x="802" y="244" width="1" height="1" fill="#0a9f92"/><rect x="803" y="244" width="1" height="1" fill="#16bdab"/><rect x="804" y="244" width="1" height="1" fill="#0b978d"/><rect x="805" y="244" width="1" height="1" fill="#0a9f92"/><rect x="806" y="244" width="1" height="1" fill="#22d0c8"/><rect x="808" y="244" width="1" height="1" fill="#08a494"/><rect x="810" y="244" width="1" height="1" fill="#16bdab"/><rect x="812" y="244" width="1" height="1" fill="#0a9f92"/><rect x="814" y="244" width="1" height="1" fill="#0a9f92"/><rect x="815" y="244" width="1" height="1" fill="#08a494"/><rect x="817" y="244" width="1" height="1" fill="#0a9f92"/><rect x="818" y="244" width="1" height="1" fill="#16bdab"/><rect x="820" y="244" width="1" height="1" fill="#16bdab"/><rect x="821" y="244" width="1" height="1" fill="#08a494"/><rect x="822" y="244" width="1" height="1" fill="#1cc6b6"/><rect x="823" y="244" width="1" height="1" fill="#0a9f92"/><rect x="825" y="244" width="1" height="1" fill="#1cc6b6"/><rect x="769" y="245" width="1" height="1" fill="#0a9f92"/><rect x="771" y="245" width="1" height="1" fill="#16bdab"/><rect x="777" y="245" width="1" height="1" fill="#1cc6b6"/><rect x="779" y="245" width="1" height="1" fill="#08a494"/><rect x="780" y="245" width="1" height="1" fill="#22d0c8"/><rect x="782" y="245" width="1" height="1" fill="#1cc6b6"/><rect x="784" y="245" width="1" height="1" fill="#0a9f92"/><rect x="786" y="245" width="1" height="1" fill="#1cc6b6"/><rect x="787" y="245" width="1" height="1" fill="#22d0c8"/><rect x="788" y="245" width="1" height="1" fill="#16bdab"/><rect x="789" y="245" width="1" height="1" fill="#1cc6b6"/><rect x="796" y="245" width="1" height="1" fill="#22d0c8"/><rect x="802" y="245" width="1" height="1" fill="#0a9f92"/><rect x="803" y="245" width="1" height="1" fill="#08a494"/><rect x="804" y="245" width="1" height="1" fill="#16bdab"/><rect x="806" y="245" width="1" height="1" fill="#0b978d"/><rect x="807" y="245" width="1" height="1" fill="#16bdab"/><rect x="808" y="245" width="1" height="1" fill="#08a494"/><rect x="812" y="245" width="1" height="1" fill="#08a494"/><rect x="814" y="245" width="1" height="1" fill="#0a9f92"/><rect x="819" y="245" width="1" height="1" fill="#22d0c8"/><rect x="820" y="245" width="1" height="1" fill="#08a494"/><rect x="821" y="245" width="1" height="1" fill="#1cc6b6"/><rect x="825" y="245" width="1" height="1" fill="#22d0c8"/><rect x="826" y="245" width="1" height="1" fill="#08a494"/><rect x="768" y="246" width="1" height="1" fill="#1cc6b6"/><rect x="770" y="246" width="1" height="1" fill="#16bdab"/><rect x="771" y="246" width="1" height="1" fill="#16bdab"/><rect x="773" y="246" width="1" height="1" fill="#08a494"/><rect x="774" y="246" width="1" height="1" fill="#0b978d"/><rect x="775" y="246" width="1" height="1" fill="#16bdab"/><rect x="776" y="246" width="1" height="1" fill="#0b978d"/><rect x="778" y="246" width="1" height="1" fill="#16bdab"/><rect x="779" y="246" width="1" height="1" fill="#0a9f92"/><rect x="780" y="246" width="1" height="1" fill="#0a9f92"/><rect x="782" y="246" width="1" height="1" fill="#22d0c8"/><rect x="783" y="246" width="1" height="1" fill="#1cc6b6"/><rect x="785" y="246" width="1" height="1" fill="#0a9f92"/><rect x="790" y="246" width="1" height="1" fill="#22d0c8"/><rect x="791" y="246" width="1" height="1" fill="#22d0c8"/><rect x="792" y="246" width="1" height="1" fill="#08a494"/><rect x="803" y="246" width="1" height="1" fill="#0a9f92"/><rect x="804" y="246" width="1" height="1" fill="#08a494"/><rect x="809" y="246" width="1" height="1" fill="#0b978d"/><rect x="812" y="246" width="1" height="1" fill="#1cc6b6"/><rect x="814" y="246" width="1" height="1" fill="#0b978d"/><rect x="815" y="246" width="1" height="1" fill="#1cc6b6"/><rect x="819" y="246" width="1" height="1" fill="#22d0c8"/><rect x="822" y="246" width="1" height="1" fill="#16bdab"/><rect x="825" y="246" width="1" height="1" fill="#1cc6b6"/><rect x="768" y="247" width="1" height="1" fill="#0b978d"/><rect x="769" y="247" width="1" height="1" fill="#08a494"/><rect x="772" y="247" width="1" height="1" fill="#1cc6b6"/><rect x="775" y="247" width="1" height="1" fill="#0b978d"/><rect x="785" y="247" width="1" height="1" fill="#0b978d"/><rect x="786" y="247" width="1" height="1" fill="#22d0c8"/><rect x="787" y="247" width="1" height="1" fill="#0a9f92"/><rect x="790" y="247" width="1" height="1" fill="#0b978d"/><rect x="794" y="247" width="1" height="1" fill="#16bdab"/><rect x="797" y="247" width="1" height="1" fill="#08a494"/><rect x="802" y="247" width="1" height="1" fill="#0b978d"/><rect x="803" y="247" width="1" height="1" fill="#0a9f92"/><rect x="806" y="247" width="1" height="1" fill="#0b978d"/><rect x="811" y="247" width="1" height="1" fill="#16bdab"/><rect x="814" y="247" width="1" height="1" fill="#16bdab"/><rect x="815" y="247" width="1" height="1" fill="#0a9f92"/><rect x="818" y="247" width="1" height="1" fill="#22d0c8"/><rect x="820" y="247" width="1" height="1" fill="#1cc6b6"/><rect x="821" y="247" width="1" height="1" fill="#0a9f92"/><rect x="822" y="247" width="1" height="1" fill="#22d0c8"/><rect x="825" y="247" width="1" height="1" fill="#0a9f92"/><rect x="769" y="248" width="1" height="1" fill="#1cc6b6"/><rect x="775" y="248" width="1" height="1" fill="#16bdab"/><rect x="776" y="248" width="1" height="1" fill="#0a9f92"/><rect x="777" y="248" width="1" height="1" fill="#08a494"/><rect x="779" y="248" width="1" height="1" fill="#0a9f92"/><rect x="780" y="248" width="1" height="1" fill="#08a494"/><rect x="783" y="248" width="1" height="1" fill="#0a9f92"/><rect x="787" y="248" width="1" height="1" fill="#16bdab"/><rect x="788" y="248" width="1" height="1" fill="#16bdab"/><rect x="789" y="248" width="1" height="1" fill="#22d0c8"/><rect x="790" y="248" width="1" height="1" fill="#08a494"/><rect x="791" y="248" width="1" height="1" fill="#16bdab"/><rect x="792" y="248" width="1" height="1" fill="#1cc6b6"/><rect x="793" y="248" width="1" height="1" fill="#16bdab"/><rect x="797" y="248" width="1" height="1" fill="#08a494"/><rect x="798" y="248" width="1" height="1" fill="#16bdab"/><rect x="799" y="248" width="1" height="1" fill="#08a494"/><rect x="801" y="248" width="1" height="1" fill="#1cc6b6"/><rect x="802" y="248" width="1" height="1" fill="#08a494"/><rect x="803" y="248" width="1" height="1" fill="#1cc6b6"/><rect x="805" y="248" width="1" height="1" fill="#22d0c8"/><rect x="806" y="248" width="1" height="1" fill="#22d0c8"/><rect x="808" y="248" width="1" height="1" fill="#1cc6b6"/><rect x="812" y="248" width="1" height="1" fill="#16bdab"/><rect x="813" y="248" width="1" height="1" fill="#1cc6b6"/><rect x="814" y="248" width="1" height="1" fill="#0b978d"/><rect x="815" y="248" width="1" height="1" fill="#0b978d"/><rect x="816" y="248" width="1" height="1" fill="#08a494"/><rect x="818" y="248" width="1" height="1" fill="#22d0c8"/><rect x="819" y="248" width="1" height="1" fill="#0a9f92"/><rect x="820" y="248" width="1" height="1" fill="#0b978d"/><rect x="822" y="248" width="1" height="1" fill="#1cc6b6"/><rect x="823" y="248" width="1" height="1" fill="#16bdab"/><rect x="824" y="248" width="1" height="1" fill="#0b978d"/><rect x="826" y="248" width="1" height="1" fill="#16bdab"/><rect x="768" y="249" width="1" height="1" fill="#16bdab"/><rect x="769" y="249" width="1" height="1" fill="#0b978d"/><rect x="775" y="249" width="1" height="1" fill="#0b978d"/><rect x="776" y="249" width="1" height="1" fill="#22d0c8"/><rect x="777" y="249" width="1" height="1" fill="#22d0c8"/><rect x="779" y="249" width="1" height="1" fill="#1cc6b6"/><rect x="781" y="249" width="1" height="1" fill="#1cc6b6"/><rect x="786" y="249" width="1" height="1" fill="#0b978d"/><rect x="788" y="249" width="1" height="1" fill="#08a494"/><rect x="789" y="249" width="1" height="1" fill="#0a9f92"/><rect x="791" y="249" width="1" height="1" fill="#0b978d"/><rect x="794" y="249" width="1" height="1" fill="#22d0c8"/><rect x="796" y="249" width="1" height="1" fill="#1cc6b6"/><rect x="800" y="249" width="1" height="1" fill="#16bdab"/><rect x="802" y="249" width="1" height="1" fill="#08a494"/><rect x="806" y="249" width="1" height="1" fill="#22d0c8"/><rect x="807" y="249" width="1" height="1" fill="#16bdab"/><rect x="808" y="249" width="1" height="1" fill="#22d0c8"/><rect x="809" y="249" width="1" height="1" fill="#0b978d"/><rect x="810" y="249" width="1" height="1" fill="#1cc6b6"/><rect x="814" y="249" width="1" height="1" fill="#0b978d"/><rect x="815" y="249" width="1" height="1" fill="#0b978d"/><rect x="818" y="249" width="1" height="1" fill="#1cc6b6"/><rect x="819" y="249" width="1" height="1" fill="#22d0c8"/><rect x="821" y="249" width="1" height="1" fill="#1cc6b6"/><rect x="822" y="249" width="1" height="1" fill="#22d0c8"/><rect x="823" y="249" width="1" height="1" fill="#0b978d"/><rect x="824" y="249" width="1" height="1" fill="#08a494"/><rect x="768" y="250" width="1" height="1" fill="#0a9f92"/><rect x="770" y="250" width="1" height="1" fill="#0b978d"/><rect x="771" y="250" width="1" height="1" fill="#22d0c8"/><rect x="772" y="250" width="1" height="1" fill="#0b978d"/><rect x="776" y="250" width="1" height="1" fill="#1cc6b6"/><rect x="778" y="250" width="1" height="1" fill="#1cc6b6"/><rect x="782" y="250" width="1" height="1" fill="#22d0c8"/><rect x="783" y="250" width="1" height="1" fill="#0a9f92"/><rect x="789" y="250" width="1" height="1" fill="#0b978d"/><rect x="790" y="250" width="1" height="1" fill="#0b978d"/><rect x="792" y="250" width="1" height="1" fill="#22d0c8"/><rect x="796" y="250" width="1" height="1" fill="#08a494"/><rect x="797" y="250" width="1" height="1" fill="#1cc6b6"/><rect x="798" y="250" width="1" height="1" fill="#0b978d"/><rect x="804" y="250" width="1" height="1" fill="#22d0c8"/><rect x="805" y="250" width="1" height="1" fill="#22d0c8"/><rect x="808" y="250" width="1" height="1" fill="#16bdab"/><rect x="809" y="250" width="1" height="1" fill="#22d0c8"/><rect x="812" y="250" width="1" height="1" fill="#16bdab"/><rect x="816" y="250" width="1" height="1" fill="#0a9f92"/><rect x="817" y="250" width="1" height="1" fill="#0b978d"/><rect x="818" y="250" width="1" height="1" fill="#16bdab"/><rect x="820" y="250" width="1" height="1" fill="#22d0c8"/><rect x="823" y="250" width="1" height="1" fill="#16bdab"/><rect x="824" y="250" width="1" height="1" fill="#22d0c8"/><rect x="825" y="250" width="1" height="1" fill="#22d0c8"/><rect x="826" y="250" width="1" height="1" fill="#0b978d"/><rect x="768" y="251" width="1" height="1" fill="#22d0c8"/><rect x="769" y="251" width="1" height="1" fill="#08a494"/><rect x="770" y="251" width="1" height="1" fill="#22d0c8"/><rect x="774" y="251" width="1" height="1" fill="#22d0c8"/><rect x="775" y="251" width="1" height="1" fill="#1cc6b6"/><rect x="777" y="251" width="1" height="1" fill="#16bdab"/><rect x="778" y="251" width="1" height="1" fill="#0b978d"/><rect x="779" y="251" width="1" height="1" fill="#1cc6b6"/><rect x="780" y="251" width="1" height="1" fill="#0a9f92"/><rect x="782" y="251" width="1" height="1" fill="#0a9f92"/><rect x="785" y="251" width="1" height="1" fill="#0b978d"/><rect x="786" y="251" width="1" height="1" fill="#08a494"/><rect x="787" y="251" width="1" height="1" fill="#16bdab"/><rect x="789" y="251" width="1" height="1" fill="#1cc6b6"/><rect x="792" y="251" width="1" height="1" fill="#22d0c8"/><rect x="793" y="251" width="1" height="1" fill="#22d0c8"/><rect x="795" y="251" width="1" height="1" fill="#1cc6b6"/><rect x="799" y="251" width="1" height="1" fill="#0b978d"/><rect x="805" y="251" width="1" height="1" fill="#16bdab"/><rect x="806" y="251" width="1" height="1" fill="#22d0c8"/><rect x="807" y="251" width="1" height="1" fill="#1cc6b6"/><rect x="809" y="251" width="1" height="1" fill="#16bdab"/><rect x="814" y="251" width="1" height="1" fill="#22d0c8"/><rect x="817" y="251" width="1" height="1" fill="#16bdab"/><rect x="819" y="251" width="1" height="1" fill="#16bdab"/><rect x="820" y="251" width="1" height="1" fill="#08a494"/><rect x="823" y="251" width="1" height="1" fill="#0a9f92"/><rect x="824" y="251" width="1" height="1" fill="#08a494"/><rect x="769" y="252" width="1" height="1" fill="#0a9f92"/><rect x="773" y="252" width="1" height="1" fill="#0b978d"/><rect x="776" y="252" width="1" height="1" fill="#16bdab"/><rect x="777" y="252" width="1" height="1" fill="#1cc6b6"/><rect x="779" y="252" width="1" height="1" fill="#0a9f92"/><rect x="782" y="252" width="1" height="1" fill="#0b978d"/><rect x="783" y="252" width="1" height="1" fill="#08a494"/><rect x="786" y="252" width="1" height="1" fill="#0b978d"/><rect x="787" y="252" width="1" height="1" fill="#0a9f92"/><rect x="789" y="252" width="1" height="1" fill="#0b978d"/><rect x="790" y="252" width="1" height="1" fill="#0a9f92"/><rect x="794" y="252" width="1" height="1" fill="#0b978d"/><rect x="795" y="252" width="1" height="1" fill="#08a494"/><rect x="801" y="252" width="1" height="1" fill="#08a494"/><rect x="808" y="252" width="1" height="1" fill="#22d0c8"/><rect x="809" y="252" width="1" height="1" fill="#22d0c8"/><rect x="810" y="252" width="1" height="1" fill="#08a494"/><rect x="811" y="252" width="1" height="1" fill="#0b978d"/><rect x="814" y="252" width="1" height="1" fill="#0b978d"/><rect x="818" y="252" width="1" height="1" fill="#22d0c8"/><rect x="820" y="252" width="1" height="1" fill="#22d0c8"/><rect x="824" y="252" width="1" height="1" fill="#16bdab"/><rect x="826" y="252" width="1" height="1" fill="#0a9f92"/><rect x="768" y="253" width="1" height="1" fill="#16bdab"/><rect x="770" y="253" width="1" height="1" fill="#0b978d"/><rect x="772" y="253" width="1" height="1" fill="#22d0c8"/><rect x="773" y="253" width="1" height="1" fill="#1cc6b6"/><rect x="774" y="253" width="1" height="1" fill="#1cc6b6"/><rect x="775" y="253" width="1" height="1" fill="#08a494"/><rect x="783" y="253" width="1" height="1" fill="#08a494"/><rect x="787" y="253" width="1" height="1" fill="#22d0c8"/><rect x="793" y="253" width="1" height="1" fill="#1cc6b6"/><rect x="795" y="253" width="1" height="1" fill="#08a494"/><rect x="796" y="253" width="1" height="1" fill="#16bdab"/><rect x="797" y="253" width="1" height="1" fill="#0a9f92"/><rect x="798" y="253" width="1" height="1" fill="#08a494"/><rect x="801" y="253" width="1" height="1" fill="#16bdab"/><rect x="802" y="253" width="1" height="1" fill="#0a9f92"/><rect x="808" y="253" width="1" height="1" fill="#22d0c8"/><rect x="812" y="253" width="1" height="1" fill="#0b978d"/><rect x="813" y="253" width="1" height="1" fill="#0b978d"/><rect x="816" y="253" width="1" height="1" fill="#1cc6b6"/><rect x="817" y="253" width="1" height="1" fill="#08a494"/><rect x="818" y="253" width="1" height="1" fill="#0b978d"/><rect x="821" y="253" width="1" height="1" fill="#22d0c8"/><rect x="822" y="253" width="1" height="1" fill="#0b978d"/><rect x="823" y="253" width="1" height="1" fill="#1cc6b6"/><rect x="824" y="253" width="1" height="1" fill="#08a494"/><rect x="825" y="253" width="1" height="1" fill="#0a9f92"/><rect x="768" y="254" width="1" height="1" fill="#0b978d"/><rect x="769" y="254" width="1" height="1" fill="#08a494"/><rect x="775" y="254" width="1" height="1" fill="#22d0c8"/><rect x="777" y="254" width="1" height="1" fill="#1cc6b6"/><rect x="778" y="254" width="1" height="1" fill="#0b978d"/><rect x="782" y="254" width="1" height="1" fill="#0a9f92"/><rect x="783" y="254" width="1" height="1" fill="#08a494"/><rect x="786" y="254" width="1" height="1" fill="#1cc6b6"/><rect x="790" y="254" width="1" height="1" fill="#08a494"/><rect x="792" y="254" width="1" height="1" fill="#08a494"/><rect x="793" y="254" width="1" height="1" fill="#16bdab"/><rect x="795" y="254" width="1" height="1" fill="#16bdab"/><rect x="798" y="254" width="1" height="1" fill="#1cc6b6"/><rect x="799" y="254" width="1" height="1" fill="#0b978d"/><rect x="800" y="254" width="1" height="1" fill="#0b978d"/><rect x="802" y="254" width="1" height="1" fill="#0a9f92"/><rect x="803" y="254" width="1" height="1" fill="#08a494"/><rect x="804" y="254" width="1" height="1" fill="#16bdab"/><rect x="806" y="254" width="1" height="1" fill="#1cc6b6"/><rect x="807" y="254" width="1" height="1" fill="#08a494"/><rect x="809" y="254" width="1" height="1" fill="#08a494"/><rect x="813" y="254" width="1" height="1" fill="#08a494"/><rect x="815" y="254" width="1" height="1" fill="#16bdab"/><rect x="819" y="254" width="1" height="1" fill="#0b978d"/><rect x="821" y="254" width="1" height="1" fill="#16bdab"/><rect x="823" y="254" width="1" height="1" fill="#0b978d"/><rect x="768" y="255" width="1" height="1" fill="#08a494"/><rect x="770" y="255" width="1" height="1" fill="#22d0c8"/><rect x="771" y="255" width="1" height="1" fill="#0b978d"/><rect x="778" y="255" width="1" height="1" fill="#16bdab"/><rect x="779" y="255" width="1" height="1" fill="#22d0c8"/><rect x="783" y="255" width="1" height="1" fill="#16bdab"/><rect x="785" y="255" width="1" height="1" fill="#22d0c8"/><rect x="786" y="255" width="1" height="1" fill="#22d0c8"/><rect x="790" y="255" width="1" height="1" fill="#16bdab"/><rect x="792" y="255" width="1" height="1" fill="#16bdab"/><rect x="793" y="255" width="1" height="1" fill="#0b978d"/><rect x="795" y="255" width="1" height="1" fill="#22d0c8"/><rect x="796" y="255" width="1" height="1" fill="#0a9f92"/><rect x="798" y="255" width="1" height="1" fill="#16bdab"/><rect x="799" y="255" width="1" height="1" fill="#0b978d"/><rect x="803" y="255" width="1" height="1" fill="#0a9f92"/><rect x="804" y="255" width="1" height="1" fill="#1cc6b6"/><rect x="807" y="255" width="1" height="1" fill="#08a494"/><rect x="809" y="255" width="1" height="1" fill="#22d0c8"/><rect x="810" y="255" width="1" height="1" fill="#16bdab"/><rect x="812" y="255" width="1" height="1" fill="#08a494"/><rect x="813" y="255" width="1" height="1" fill="#16bdab"/><rect x="814" y="255" width="1" height="1" fill="#0b978d"/><rect x="819" y="255" width="1" height="1" fill="#0b978d"/><rect x="821" y="255" width="1" height="1" fill="#1cc6b6"/><rect x="822" y="255" width="1" height="1" fill="#22d0c8"/><rect x="824" y="255" width="1" height="1" fill="#1cc6b6"/><rect x="826" y="255" width="1" height="1" fill="#08a494"/><rect x="768" y="256" width="1" height="1" fill="#1cc6b6"/><rect x="770" y="256" width="1" height="1" fill="#1cc6b6"/><rect x="772" y="256" width="1" height="1" fill="#0b978d"/><rect x="775" y="256" width="1" height="1" fill="#08a494"/><rect x="778" y="256" width="1" height="1" fill="#0a9f92"/><rect x="779" y="256" width="1" height="1" fill="#16bdab"/><rect x="782" y="256" width="1" height="1" fill="#0b978d"/><rect x="783" y="256" width="1" height="1" fill="#08a494"/><rect x="786" y="256" width="1" height="1" fill="#08a494"/><rect x="788" y="256" width="1" height="1" fill="#08a494"/><rect x="789" y="256" width="1" height="1" fill="#22d0c8"/><rect x="791" y="256" width="1" height="1" fill="#22d0c8"/><rect x="792" y="256" width="1" height="1" fill="#08a494"/><rect x="795" y="256" width="1" height="1" fill="#08a494"/><rect x="797" y="256" width="1" height="1" fill="#0b978d"/><rect x="798" y="256" width="1" height="1" fill="#1cc6b6"/><rect x="799" y="256" width="1" height="1" fill="#0b978d"/><rect x="800" y="256" width="1" height="1" fill="#22d0c8"/><rect x="801" y="256" width="1" height="1" fill="#0a9f92"/><rect x="804" y="256" width="1" height="1" fill="#08a494"/><rect x="807" y="256" width="1" height="1" fill="#08a494"/><rect x="808" y="256" width="1" height="1" fill="#16bdab"/><rect x="814" y="256" width="1" height="1" fill="#22d0c8"/><rect x="815" y="256" width="1" height="1" fill="#1cc6b6"/><rect x="816" y="256" width="1" height="1" fill="#0b978d"/><rect x="818" y="256" width="1" height="1" fill="#16bdab"/><rect x="819" y="256" width="1" height="1" fill="#0a9f92"/><rect x="820" y="256" width="1" height="1" fill="#22d0c8"/><rect x="821" y="256" width="1" height="1" fill="#22d0c8"/><rect x="824" y="256" width="1" height="1" fill="#16bdab"/><rect x="826" y="256" width="1" height="1" fill="#1cc6b6"/><rect x="770" y="257" width="1" height="1" fill="#0b978d"/><rect x="771" y="257" width="1" height="1" fill="#22d0c8"/><rect x="773" y="257" width="1" height="1" fill="#16bdab"/><rect x="774" y="257" width="1" height="1" fill="#1cc6b6"/><rect x="776" y="257" width="1" height="1" fill="#1cc6b6"/><rect x="777" y="257" width="1" height="1" fill="#08a494"/><rect x="783" y="257" width="1" height="1" fill="#0b978d"/><rect x="784" y="257" width="1" height="1" fill="#0b978d"/><rect x="785" y="257" width="1" height="1" fill="#16bdab"/><rect x="786" y="257" width="1" height="1" fill="#22d0c8"/><rect x="789" y="257" width="1" height="1" fill="#0a9f92"/><rect x="791" y="257" width="1" height="1" fill="#22d0c8"/><rect x="792" y="257" width="1" height="1" fill="#1cc6b6"/><rect x="793" y="257" width="1" height="1" fill="#16bdab"/><rect x="795" y="257" width="1" height="1" fill="#0a9f92"/><rect x="797" y="257" width="1" height="1" fill="#0a9f92"/><rect x="798" y="257" width="1" height="1" fill="#0b978d"/><rect x="799" y="257" width="1" height="1" fill="#22d0c8"/><rect x="800" y="257" width="1" height="1" fill="#16bdab"/><rect x="802" y="257" width="1" height="1" fill="#1cc6b6"/><rect x="803" y="257" width="1" height="1" fill="#22d0c8"/><rect x="807" y="257" width="1" height="1" fill="#16bdab"/><rect x="808" y="257" width="1" height="1" fill="#22d0c8"/><rect x="810" y="257" width="1" height="1" fill="#08a494"/><rect x="815" y="257" width="1" height="1" fill="#0b978d"/><rect x="816" y="257" width="1" height="1" fill="#0a9f92"/><rect x="817" y="257" width="1" height="1" fill="#1cc6b6"/><rect x="820" y="257" width="1" height="1" fill="#16bdab"/><rect x="822" y="257" width="1" height="1" fill="#22d0c8"/><rect x="769" y="258" width="1" height="1" fill="#16bdab"/><rect x="772" y="258" width="1" height="1" fill="#0a9f92"/><rect x="773" y="258" width="1" height="1" fill="#16bdab"/><rect x="774" y="258" width="1" height="1" fill="#0b978d"/><rect x="775" y="258" width="1" height="1" fill="#0a9f92"/><rect x="776" y="258" width="1" height="1" fill="#0a9f92"/><rect x="777" y="258" width="1" height="1" fill="#08a494"/><rect x="779" y="258" width="1" height="1" fill="#0b978d"/><rect x="788" y="258" width="1" height="1" fill="#0b978d"/><rect x="790" y="258" width="1" height="1" fill="#16bdab"/><rect x="791" y="258" width="1" height="1" fill="#1cc6b6"/><rect x="796" y="258" width="1" height="1" fill="#08a494"/><rect x="798" y="258" width="1" height="1" fill="#08a494"/><rect x="803" y="258" width="1" height="1" fill="#08a494"/><rect x="806" y="258" width="1" height="1" fill="#22d0c8"/><rect x="816" y="258" width="1" height="1" fill="#08a494"/><rect x="818" y="258" width="1" height="1" fill="#22d0c8"/><rect x="821" y="258" width="1" height="1" fill="#0a9f92"/><rect x="822" y="258" width="1" height="1" fill="#08a494"/><rect x="823" y="258" width="1" height="1" fill="#22d0c8"/><rect x="825" y="258" width="1" height="1" fill="#22d0c8"/><rect x="771" y="259" width="1" height="1" fill="#1cc6b6"/><rect x="773" y="259" width="1" height="1" fill="#08a494"/><rect x="775" y="259" width="1" height="1" fill="#16bdab"/><rect x="776" y="259" width="1" height="1" fill="#08a494"/><rect x="777" y="259" width="1" height="1" fill="#16bdab"/><rect x="780" y="259" width="1" height="1" fill="#16bdab"/><rect x="781" y="259" width="1" height="1" fill="#22d0c8"/><rect x="787" y="259" width="1" height="1" fill="#1cc6b6"/><rect x="788" y="259" width="1" height="1" fill="#1cc6b6"/><rect x="789" y="259" width="1" height="1" fill="#16bdab"/><rect x="791" y="259" width="1" height="1" fill="#0b978d"/><rect x="792" y="259" width="1" height="1" fill="#08a494"/><rect x="795" y="259" width="1" height="1" fill="#1cc6b6"/><rect x="796" y="259" width="1" height="1" fill="#1cc6b6"/><rect x="802" y="259" width="1" height="1" fill="#22d0c8"/><rect x="803" y="259" width="1" height="1" fill="#1cc6b6"/><rect x="805" y="259" width="1" height="1" fill="#0b978d"/><rect x="808" y="259" width="1" height="1" fill="#08a494"/><rect x="809" y="259" width="1" height="1" fill="#08a494"/><rect x="810" y="259" width="1" height="1" fill="#08a494"/><rect x="811" y="259" width="1" height="1" fill="#22d0c8"/><rect x="814" y="259" width="1" height="1" fill="#0b978d"/><rect x="816" y="259" width="1" height="1" fill="#22d0c8"/><rect x="818" y="259" width="1" height="1" fill="#16bdab"/><rect x="822" y="259" width="1" height="1" fill="#0a9f92"/><rect x="824" y="259" width="1" height="1" fill="#0a9f92"/><rect x="826" y="259" width="1" height="1" fill="#1cc6b6"/><rect x="770" y="260" width="1" height="1" fill="#16bdab"/><rect x="771" y="260" width="1" height="1" fill="#08a494"/><rect x="772" y="260" width="1" height="1" fill="#08a494"/><rect x="773" y="260" width="1" height="1" fill="#22d0c8"/><rect x="775" y="260" width="1" height="1" fill="#16bdab"/><rect x="776" y="260" width="1" height="1" fill="#0a9f92"/><rect x="777" y="260" width="1" height="1" fill="#1cc6b6"/><rect x="778" y="260" width="1" height="1" fill="#08a494"/><rect x="779" y="260" width="1" height="1" fill="#22d0c8"/><rect x="781" y="260" width="1" height="1" fill="#08a494"/><rect x="787" y="260" width="1" height="1" fill="#0a9f92"/><rect x="794" y="260" width="1" height="1" fill="#0a9f92"/><rect x="796" y="260" width="1" height="1" fill="#0b978d"/><rect x="799" y="260" width="1" height="1" fill="#16bdab"/><rect x="802" y="260" width="1" height="1" fill="#1cc6b6"/><rect x="803" y="260" width="1" height="1" fill="#16bdab"/><rect x="805" y="260" width="1" height="1" fill="#22d0c8"/><rect x="806" y="260" width="1" height="1" fill="#0b978d"/><rect x="808" y="260" width="1" height="1" fill="#22d0c8"/><rect x="811" y="260" width="1" height="1" fill="#1cc6b6"/><rect x="814" y="260" width="1" height="1" fill="#0b978d"/><rect x="815" y="260" width="1" height="1" fill="#0a9f92"/><rect x="816" y="260" width="1" height="1" fill="#08a494"/><rect x="817" y="260" width="1" height="1" fill="#0b978d"/><rect x="818" y="260" width="1" height="1" fill="#1cc6b6"/><rect x="819" y="260" width="1" height="1" fill="#0b978d"/><rect x="823" y="260" width="1" height="1" fill="#0b978d"/><rect x="824" y="260" width="1" height="1" fill="#1cc6b6"/><rect x="768" y="261" width="1" height="1" fill="#16bdab"/><rect x="769" y="261" width="1" height="1" fill="#16bdab"/><rect x="771" y="261" width="1" height="1" fill="#1cc6b6"/><rect x="774" y="261" width="1" height="1" fill="#0b978d"/><rect x="775" y="261" width="1" height="1" fill="#22d0c8"/><rect x="777" y="261" width="1" height="1" fill="#0b978d"/><rect x="778" y="261" width="1" height="1" fill="#0a9f92"/><rect x="779" y="261" width="1" height="1" fill="#08a494"/><rect x="781" y="261" width="1" height="1" fill="#16bdab"/><rect x="783" y="261" width="1" height="1" fill="#22d0c8"/><rect x="784" y="261" width="1" height="1" fill="#08a494"/><rect x="786" y="261" width="1" height="1" fill="#22d0c8"/><rect x="789" y="261" width="1" height="1" fill="#1cc6b6"/><rect x="791" y="261" width="1" height="1" fill="#16bdab"/><rect x="793" y="261" width="1" height="1" fill="#08a494"/><rect x="795" y="261" width="1" height="1" fill="#22d0c8"/><rect x="801" y="261" width="1" height="1" fill="#16bdab"/><rect x="803" y="261" width="1" height="1" fill="#22d0c8"/><rect x="804" y="261" width="1" height="1" fill="#0a9f92"/><rect x="806" y="261" width="1" height="1" fill="#0a9f92"/><rect x="810" y="261" width="1" height="1" fill="#1cc6b6"/><rect x="812" y="261" width="1" height="1" fill="#0a9f92"/><rect x="814" y="261" width="1" height="1" fill="#16bdab"/><rect x="816" y="261" width="1" height="1" fill="#16bdab"/><rect x="821" y="261" width="1" height="1" fill="#0b978d"/><rect x="822" y="261" width="1" height="1" fill="#16bdab"/><rect x="823" y="261" width="1" height="1" fill="#22d0c8"/><rect x="825" y="261" width="1" height="1" fill="#0a9f92"/><rect x="826" y="261" width="1" height="1" fill="#16bdab"/><rect x="769" y="262" width="1" height="1" fill="#08a494"/><rect x="771" y="262" width="1" height="1" fill="#16bdab"/><rect x="775" y="262" width="1" height="1" fill="#0b978d"/><rect x="776" y="262" width="1" height="1" fill="#16bdab"/><rect x="780" y="262" width="1" height="1" fill="#0b978d"/><rect x="781" y="262" width="1" height="1" fill="#1cc6b6"/><rect x="784" y="262" width="1" height="1" fill="#0b978d"/><rect x="788" y="262" width="1" height="1" fill="#16bdab"/><rect x="794" y="262" width="1" height="1" fill="#08a494"/><rect x="797" y="262" width="1" height="1" fill="#16bdab"/><rect x="799" y="262" width="1" height="1" fill="#0b978d"/><rect x="800" y="262" width="1" height="1" fill="#1cc6b6"/><rect x="801" y="262" width="1" height="1" fill="#22d0c8"/><rect x="802" y="262" width="1" height="1" fill="#0a9f92"/><rect x="804" y="262" width="1" height="1" fill="#0a9f92"/><rect x="808" y="262" width="1" height="1" fill="#16bdab"/><rect x="811" y="262" width="1" height="1" fill="#08a494"/><rect x="817" y="262" width="1" height="1" fill="#22d0c8"/><rect x="819" y="262" width="1" height="1" fill="#16bdab"/><rect x="821" y="262" width="1" height="1" fill="#0a9f92"/><rect x="825" y="262" width="1" height="1" fill="#0a9f92"/><rect x="826" y="262" width="1" height="1" fill="#16bdab"/><rect x="768" y="263" width="1" height="1" fill="#1cc6b6"/><rect x="769" y="263" width="1" height="1" fill="#08a494"/><rect x="770" y="263" width="1" height="1" fill="#1cc6b6"/><rect x="771" y="263" width="1" height="1" fill="#08a494"/><rect x="774" y="263" width="1" height="1" fill="#16bdab"/><rect x="775" y="263" width="1" height="1" fill="#08a494"/><rect x="776" y="263" width="1" height="1" fill="#16bdab"/><rect x="780" y="263" width="1" height="1" fill="#0a9f92"/><rect x="781" y="263" width="1" height="1" fill="#0a9f92"/><rect x="786" y="263" width="1" height="1" fill="#16bdab"/><rect x="787" y="263" width="1" height="1" fill="#0b978d"/><rect x="791" y="263" width="1" height="1" fill="#08a494"/><rect x="793" y="263" width="1" height="1" fill="#08a494"/><rect x="794" y="263" width="1" height="1" fill="#16bdab"/><rect x="798" y="263" width="1" height="1" fill="#16bdab"/><rect x="799" y="263" width="1" height="1" fill="#0b978d"/><rect x="801" y="263" width="1" height="1" fill="#08a494"/><rect x="803" y="263" width="1" height="1" fill="#0b978d"/><rect x="804" y="263" width="1" height="1" fill="#1cc6b6"/><rect x="806" y="263" width="1" height="1" fill="#0b978d"/><rect x="810" y="263" width="1" height="1" fill="#16bdab"/><rect x="811" y="263" width="1" height="1" fill="#08a494"/><rect x="813" y="263" width="1" height="1" fill="#0b978d"/><rect x="815" y="263" width="1" height="1" fill="#16bdab"/><rect x="818" y="263" width="1" height="1" fill="#0a9f92"/><rect x="826" y="263" width="1" height="1" fill="#22d0c8"/><rect x="768" y="264" width="1" height="1" fill="#0b978d"/><rect x="770" y="264" width="1" height="1" fill="#22d0c8"/><rect x="777" y="264" width="1" height="1" fill="#22d0c8"/><rect x="788" y="264" width="1" height="1" fill="#08a494"/><rect x="791" y="264" width="1" height="1" fill="#0b978d"/><rect x="794" y="264" width="1" height="1" fill="#08a494"/><rect x="796" y="264" width="1" height="1" fill="#1cc6b6"/><rect x="800" y="264" width="1" height="1" fill="#22d0c8"/><rect x="807" y="264" width="1" height="1" fill="#22d0c8"/><rect x="813" y="264" width="1" height="1" fill="#0b978d"/><rect x="815" y="264" width="1" height="1" fill="#0a9f92"/><rect x="819" y="264" width="1" height="1" fill="#16bdab"/><rect x="820" y="264" width="1" height="1" fill="#16bdab"/><rect x="821" y="264" width="1" height="1" fill="#1cc6b6"/><rect x="824" y="264" width="1" height="1" fill="#0a9f92"/><rect x="826" y="264" width="1" height="1" fill="#1cc6b6"/><rect x="770" y="265" width="1" height="1" fill="#16bdab"/><rect x="772" y="265" width="1" height="1" fill="#16bdab"/><rect x="773" y="265" width="1" height="1" fill="#0b978d"/><rect x="775" y="265" width="1" height="1" fill="#16bdab"/><rect x="776" y="265" width="1" height="1" fill="#08a494"/><rect x="779" y="265" width="1" height="1" fill="#0b978d"/><rect x="783" y="265" width="1" height="1" fill="#16bdab"/><rect x="784" y="265" width="1" height="1" fill="#0a9f92"/><rect x="785" y="265" width="1" height="1" fill="#16bdab"/><rect x="786" y="265" width="1" height="1" fill="#16bdab"/><rect x="789" y="265" width="1" height="1" fill="#0b978d"/><rect x="795" y="265" width="1" height="1" fill="#0b978d"/><rect x="797" y="265" width="1" height="1" fill="#08a494"/><rect x="798" y="265" width="1" height="1" fill="#0b978d"/><rect x="800" y="265" width="1" height="1" fill="#22d0c8"/><rect x="805" y="265" width="1" height="1" fill="#22d0c8"/><rect x="807" y="265" width="1" height="1" fill="#0a9f92"/><rect x="808" y="265" width="1" height="1" fill="#22d0c8"/><rect x="809" y="265" width="1" height="1" fill="#1cc6b6"/><rect x="815" y="265" width="1" height="1" fill="#0b978d"/><rect x="817" y="265" width="1" height="1" fill="#0b978d"/><rect x="818" y="265" width="1" height="1" fill="#08a494"/><rect x="822" y="265" width="1" height="1" fill="#08a494"/><rect x="824" y="265" width="1" height="1" fill="#16bdab"/><rect x="825" y="265" width="1" height="1" fill="#08a494"/><rect x="826" y="265" width="1" height="1" fill="#08a494"/><rect x="772" y="266" width="1" height="1" fill="#22d0c8"/><rect x="773" y="266" width="1" height="1" fill="#0b978d"/><rect x="774" y="266" width="1" height="1" fill="#08a494"/><rect x="776" y="266" width="1" height="1" fill="#08a494"/><rect x="777" y="266" width="1" height="1" fill="#16bdab"/><rect x="778" y="266" width="1" height="1" fill="#0a9f92"/><rect x="779" y="266" width="1" height="1" fill="#22d0c8"/><rect x="786" y="266" width="1" height="1" fill="#22d0c8"/><rect x="787" y="266" width="1" height="1" fill="#0b978d"/><rect x="794" y="266" width="1" height="1" fill="#0b978d"/><rect x="795" y="266" width="1" height="1" fill="#1cc6b6"/><rect x="796" y="266" width="1" height="1" fill="#16bdab"/><rect x="801" y="266" width="1" height="1" fill="#0b978d"/><rect x="802" y="266" width="1" height="1" fill="#0b978d"/><rect x="808" y="266" width="1" height="1" fill="#0b978d"/><rect x="813" y="266" width="1" height="1" fill="#1cc6b6"/><rect x="815" y="266" width="1" height="1" fill="#22d0c8"/><rect x="817" y="266" width="1" height="1" fill="#0b978d"/><rect x="818" y="266" width="1" height="1" fill="#16bdab"/><rect x="821" y="266" width="1" height="1" fill="#08a494"/><rect x="825" y="266" width="1" height="1" fill="#0b978d"/><rect x="826" y="266" width="1" height="1" fill="#16bdab"/><rect x="775" y="267" width="1" height="1" fill="#1cc6b6"/><rect x="777" y="267" width="1" height="1" fill="#16bdab"/><rect x="779" y="267" width="1" height="1" fill="#22d0c8"/><rect x="783" y="267" width="1" height="1" fill="#0b978d"/><rect x="786" y="267" width="1" height="1" fill="#0a9f92"/><rect x="792" y="267" width="1" height="1" fill="#22d0c8"/><rect x="795" y="267" width="1" height="1" fill="#22d0c8"/><rect x="797" y="267" width="1" height="1" fill="#0a9f92"/><rect x="804" y="267" width="1" height="1" fill="#22d0c8"/><rect x="806" y="267" width="1" height="1" fill="#0b978d"/><rect x="813" y="267" width="1" height="1" fill="#0b978d"/><rect x="817" y="267" width="1" height="1" fill="#22d0c8"/><rect x="819" y="267" width="1" height="1" fill="#0b978d"/><rect x="820" y="267" width="1" height="1" fill="#1cc6b6"/><rect x="822" y="267" width="1" height="1" fill="#0b978d"/><rect x="768" y="268" width="1" height="1" fill="#08a494"/><rect x="770" y="268" width="1" height="1" fill="#16bdab"/><rect x="771" y="268" width="1" height="1" fill="#0b978d"/><rect x="774" y="268" width="1" height="1" fill="#08a494"/><rect x="776" y="268" width="1" height="1" fill="#08a494"/><rect x="778" y="268" width="1" height="1" fill="#16bdab"/><rect x="779" y="268" width="1" height="1" fill="#08a494"/><rect x="780" y="268" width="1" height="1" fill="#0b978d"/><rect x="781" y="268" width="1" height="1" fill="#22d0c8"/><rect x="782" y="268" width="1" height="1" fill="#0a9f92"/><rect x="787" y="268" width="1" height="1" fill="#0a9f92"/><rect x="790" y="268" width="1" height="1" fill="#0b978d"/><rect x="791" y="268" width="1" height="1" fill="#1cc6b6"/><rect x="797" y="268" width="1" height="1" fill="#08a494"/><rect x="798" y="268" width="1" height="1" fill="#1cc6b6"/><rect x="799" y="268" width="1" height="1" fill="#16bdab"/><rect x="800" y="268" width="1" height="1" fill="#08a494"/><rect x="801" y="268" width="1" height="1" fill="#16bdab"/><rect x="805" y="268" width="1" height="1" fill="#22d0c8"/><rect x="807" y="268" width="1" height="1" fill="#0a9f92"/><rect x="811" y="268" width="1" height="1" fill="#16bdab"/><rect x="820" y="268" width="1" height="1" fill="#0b978d"/><rect x="821" y="268" width="1" height="1" fill="#0a9f92"/><rect x="825" y="268" width="1" height="1" fill="#22d0c8"/><rect x="768" y="269" width="1" height="1" fill="#0a9f92"/><rect x="770" y="269" width="1" height="1" fill="#1cc6b6"/><rect x="772" y="269" width="1" height="1" fill="#0b978d"/><rect x="776" y="269" width="1" height="1" fill="#0a9f92"/><rect x="778" y="269" width="1" height="1" fill="#1cc6b6"/><rect x="779" y="269" width="1" height="1" fill="#0b978d"/><rect x="782" y="269" width="1" height="1" fill="#0b978d"/><rect x="787" y="269" width="1" height="1" fill="#1cc6b6"/><rect x="788" y="269" width="1" height="1" fill="#0a9f92"/><rect x="789" y="269" width="1" height="1" fill="#22d0c8"/><rect x="791" y="269" width="1" height="1" fill="#0a9f92"/><rect x="794" y="269" width="1" height="1" fill="#0a9f92"/><rect x="795" y="269" width="1" height="1" fill="#08a494"/><rect x="797" y="269" width="1" height="1" fill="#0b978d"/><rect x="798" y="269" width="1" height="1" fill="#08a494"/><rect x="802" y="269" width="1" height="1" fill="#16bdab"/><rect x="803" y="269" width="1" height="1" fill="#0b978d"/><rect x="804" y="269" width="1" height="1" fill="#0a9f92"/><rect x="805" y="269" width="1" height="1" fill="#16bdab"/><rect x="816" y="269" width="1" height="1" fill="#22d0c8"/><rect x="819" y="269" width="1" height="1" fill="#22d0c8"/><rect x="823" y="269" width="1" height="1" fill="#1cc6b6"/><rect x="825" y="269" width="1" height="1" fill="#16bdab"/><rect x="769" y="270" width="1" height="1" fill="#08a494"/><rect x="774" y="270" width="1" height="1" fill="#0a9f92"/><rect x="776" y="270" width="1" height="1" fill="#0a9f92"/><rect x="777" y="270" width="1" height="1" fill="#0a9f92"/><rect x="782" y="270" width="1" height="1" fill="#08a494"/><rect x="785" y="270" width="1" height="1" fill="#16bdab"/><rect x="791" y="270" width="1" height="1" fill="#16bdab"/><rect x="793" y="270" width="1" height="1" fill="#08a494"/><rect x="794" y="270" width="1" height="1" fill="#08a494"/><rect x="798" y="270" width="1" height="1" fill="#0a9f92"/><rect x="805" y="270" width="1" height="1" fill="#0a9f92"/><rect x="811" y="270" width="1" height="1" fill="#16bdab"/><rect x="815" y="270" width="1" height="1" fill="#22d0c8"/><rect x="820" y="270" width="1" height="1" fill="#08a494"/><rect x="821" y="270" width="1" height="1" fill="#0a9f92"/><rect x="822" y="270" width="1" height="1" fill="#16bdab"/><rect x="825" y="270" width="1" height="1" fill="#0b978d"/><rect x="826" y="270" width="1" height="1" fill="#0b978d"/><rect x="769" y="271" width="1" height="1" fill="#08a494"/><rect x="771" y="271" width="1" height="1" fill="#16bdab"/><rect x="772" y="271" width="1" height="1" fill="#0a9f92"/><rect x="773" y="271" width="1" height="1" fill="#22d0c8"/><rect x="787" y="271" width="1" height="1" fill="#22d0c8"/><rect x="788" y="271" width="1" height="1" fill="#1cc6b6"/><rect x="790" y="271" width="1" height="1" fill="#08a494"/><rect x="794" y="271" width="1" height="1" fill="#0b978d"/><rect x="796" y="271" width="1" height="1" fill="#1cc6b6"/><rect x="797" y="271" width="1" height="1" fill="#1cc6b6"/><rect x="798" y="271" width="1" height="1" fill="#22d0c8"/><rect x="804" y="271" width="1" height="1" fill="#16bdab"/><rect x="805" y="271" width="1" height="1" fill="#08a494"/><rect x="806" y="271" width="1" height="1" fill="#16bdab"/><rect x="808" y="271" width="1" height="1" fill="#0b978d"/><rect x="809" y="271" width="1" height="1" fill="#16bdab"/><rect x="813" y="271" width="1" height="1" fill="#0b978d"/><rect x="815" y="271" width="1" height="1" fill="#0a9f92"/><rect x="818" y="271" width="1" height="1" fill="#08a494"/><rect x="819" y="271" width="1" height="1" fill="#22d0c8"/><rect x="826" y="271" width="1" height="1" fill="#16bdab"/><rect x="768" y="272" width="1" height="1" fill="#0a9f92"/><rect x="771" y="272" width="1" height="1" fill="#16bdab"/><rect x="774" y="272" width="1" height="1" fill="#22d0c8"/><rect x="775" y="272" width="1" height="1" fill="#1cc6b6"/><rect x="776" y="272" width="1" height="1" fill="#0b978d"/><rect x="778" y="272" width="1" height="1" fill="#16bdab"/><rect x="783" y="272" width="1" height="1" fill="#0a9f92"/><rect x="786" y="272" width="1" height="1" fill="#0a9f92"/><rect x="789" y="272" width="1" height="1" fill="#0a9f92"/><rect x="790" y="272" width="1" height="1" fill="#0a9f92"/><rect x="798" y="272" width="1" height="1" fill="#1cc6b6"/><rect x="803" y="272" width="1" height="1" fill="#1cc6b6"/><rect x="804" y="272" width="1" height="1" fill="#16bdab"/><rect x="805" y="272" width="1" height="1" fill="#16bdab"/><rect x="806" y="272" width="1" height="1" fill="#16bdab"/><rect x="809" y="272" width="1" height="1" fill="#0a9f92"/><rect x="811" y="272" width="1" height="1" fill="#0a9f92"/><rect x="812" y="272" width="1" height="1" fill="#22d0c8"/><rect x="814" y="272" width="1" height="1" fill="#0b978d"/><rect x="815" y="272" width="1" height="1" fill="#16bdab"/><rect x="818" y="272" width="1" height="1" fill="#0b978d"/><rect x="821" y="272" width="1" height="1" fill="#0a9f92"/><rect x="822" y="272" width="1" height="1" fill="#0b978d"/><rect x="824" y="272" width="1" height="1" fill="#0b978d"/><rect x="825" y="272" width="1" height="1" fill="#22d0c8"/><rect x="826" y="272" width="1" height="1" fill="#0b978d"/><rect x="769" y="273" width="1" height="1" fill="#0b978d"/><rect x="770" y="273" width="1" height="1" fill="#22d0c8"/><rect x="771" y="273" width="1" height="1" fill="#16bdab"/><rect x="773" y="273" width="1" height="1" fill="#1cc6b6"/><rect x="775" y="273" width="1" height="1" fill="#22d0c8"/><rect x="776" y="273" width="1" height="1" fill="#16bdab"/><rect x="779" y="273" width="1" height="1" fill="#1cc6b6"/><rect x="780" y="273" width="1" height="1" fill="#0a9f92"/><rect x="781" y="273" width="1" height="1" fill="#22d0c8"/><rect x="783" y="273" width="1" height="1" fill="#0b978d"/><rect x="784" y="273" width="1" height="1" fill="#1cc6b6"/><rect x="786" y="273" width="1" height="1" fill="#08a494"/><rect x="788" y="273" width="1" height="1" fill="#0a9f92"/><rect x="793" y="273" width="1" height="1" fill="#16bdab"/><rect x="794" y="273" width="1" height="1" fill="#0b978d"/><rect x="796" y="273" width="1" height="1" fill="#0b978d"/><rect x="798" y="273" width="1" height="1" fill="#16bdab"/><rect x="800" y="273" width="1" height="1" fill="#08a494"/><rect x="804" y="273" width="1" height="1" fill="#1cc6b6"/><rect x="806" y="273" width="1" height="1" fill="#16bdab"/><rect x="808" y="273" width="1" height="1" fill="#0a9f92"/><rect x="809" y="273" width="1" height="1" fill="#0b978d"/><rect x="813" y="273" width="1" height="1" fill="#1cc6b6"/><rect x="815" y="273" width="1" height="1" fill="#0b978d"/><rect x="817" y="273" width="1" height="1" fill="#0a9f92"/><rect x="820" y="273" width="1" height="1" fill="#08a494"/><rect x="821" y="273" width="1" height="1" fill="#22d0c8"/><rect x="826" y="273" width="1" height="1" fill="#22d0c8"/><rect x="768" y="274" width="1" height="1" fill="#1cc6b6"/><rect x="770" y="274" width="1" height="1" fill="#0b978d"/><rect x="771" y="274" width="1" height="1" fill="#0b978d"/><rect x="776" y="274" width="1" height="1" fill="#16bdab"/><rect x="777" y="274" width="1" height="1" fill="#1cc6b6"/><rect x="779" y="274" width="1" height="1" fill="#16bdab"/><rect x="781" y="274" width="1" height="1" fill="#16bdab"/><rect x="783" y="274" width="1" height="1" fill="#0b978d"/><rect x="788" y="274" width="1" height="1" fill="#1cc6b6"/><rect x="789" y="274" width="1" height="1" fill="#1cc6b6"/><rect x="794" y="274" width="1" height="1" fill="#16bdab"/><rect x="795" y="274" width="1" height="1" fill="#1cc6b6"/><rect x="796" y="274" width="1" height="1" fill="#1cc6b6"/><rect x="797" y="274" width="1" height="1" fill="#0b978d"/><rect x="798" y="274" width="1" height="1" fill="#16bdab"/><rect x="799" y="274" width="1" height="1" fill="#22d0c8"/><rect x="803" y="274" width="1" height="1" fill="#0a9f92"/><rect x="804" y="274" width="1" height="1" fill="#0b978d"/><rect x="809" y="274" width="1" height="1" fill="#08a494"/><rect x="810" y="274" width="1" height="1" fill="#1cc6b6"/><rect x="811" y="274" width="1" height="1" fill="#16bdab"/><rect x="813" y="274" width="1" height="1" fill="#0b978d"/><rect x="815" y="274" width="1" height="1" fill="#16bdab"/><rect x="817" y="274" width="1" height="1" fill="#1cc6b6"/><rect x="819" y="274" width="1" height="1" fill="#08a494"/><rect x="823" y="274" width="1" height="1" fill="#22d0c8"/><rect x="825" y="274" width="1" height="1" fill="#0a9f92"/><rect x="769" y="275" width="1" height="1" fill="#16bdab"/><rect x="777" y="275" width="1" height="1" fill="#16bdab"/><rect x="786" y="275" width="1" height="1" fill="#1cc6b6"/><rect x="787" y="275" width="1" height="1" fill="#22d0c8"/><rect x="792" y="275" width="1" height="1" fill="#0a9f92"/><rect x="794" y="275" width="1" height="1" fill="#22d0c8"/><rect x="798" y="275" width="1" height="1" fill="#1cc6b6"/><rect x="799" y="275" width="1" height="1" fill="#22d0c8"/><rect x="803" y="275" width="1" height="1" fill="#16bdab"/><rect x="805" y="275" width="1" height="1" fill="#16bdab"/><rect x="808" y="275" width="1" height="1" fill="#22d0c8"/><rect x="809" y="275" width="1" height="1" fill="#22d0c8"/><rect x="817" y="275" width="1" height="1" fill="#08a494"/><rect x="818" y="275" width="1" height="1" fill="#1cc6b6"/><rect x="823" y="275" width="1" height="1" fill="#08a494"/><rect x="824" y="275" width="1" height="1" fill="#22d0c8"/><rect x="826" y="275" width="1" height="1" fill="#1cc6b6"/><rect x="772" y="276" width="1" height="1" fill="#22d0c8"/><rect x="779" y="276" width="1" height="1" fill="#0b978d"/><rect x="781" y="276" width="1" height="1" fill="#0a9f92"/><rect x="786" y="276" width="1" height="1" fill="#0a9f92"/><rect x="790" y="276" width="1" height="1" fill="#0a9f92"/><rect x="792" y="276" width="1" height="1" fill="#16bdab"/><rect x="793" y="276" width="1" height="1" fill="#16bdab"/><rect x="794" y="276" width="1" height="1" fill="#22d0c8"/><rect x="796" y="276" width="1" height="1" fill="#0a9f92"/><rect x="797" y="276" width="1" height="1" fill="#0a9f92"/><rect x="799" y="276" width="1" height="1" fill="#0b978d"/><rect x="800" y="276" width="1" height="1" fill="#0b978d"/><rect x="801" y="276" width="1" height="1" fill="#1cc6b6"/><rect x="804" y="276" width="1" height="1" fill="#0a9f92"/><rect x="805" y="276" width="1" height="1" fill="#0b978d"/><rect x="806" y="276" width="1" height="1" fill="#08a494"/><rect x="807" y="276" width="1" height="1" fill="#0b978d"/><rect x="808" y="276" width="1" height="1" fill="#22d0c8"/><rect x="809" y="276" width="1" height="1" fill="#08a494"/><rect x="811" y="276" width="1" height="1" fill="#08a494"/><rect x="816" y="276" width="1" height="1" fill="#0a9f92"/><rect x="817" y="276" width="1" height="1" fill="#0a9f92"/><rect x="819" y="276" width="1" height="1" fill="#08a494"/><rect x="820" y="276" width="1" height="1" fill="#22d0c8"/><rect x="769" y="277" width="1" height="1" fill="#08a494"/><rect x="770" y="277" width="1" height="1" fill="#22d0c8"/><rect x="775" y="277" width="1" height="1" fill="#0a9f92"/><rect x="776" y="277" width="1" height="1" fill="#22d0c8"/><rect x="777" y="277" width="1" height="1" fill="#08a494"/><rect x="778" y="277" width="1" height="1" fill="#22d0c8"/><rect x="781" y="277" width="1" height="1" fill="#16bdab"/><rect x="782" y="277" width="1" height="1" fill="#0b978d"/><rect x="785" y="277" width="1" height="1" fill="#0a9f92"/><rect x="786" y="277" width="1" height="1" fill="#0b978d"/><rect x="791" y="277" width="1" height="1" fill="#0b978d"/><rect x="793" y="277" width="1" height="1" fill="#08a494"/><rect x="794" y="277" width="1" height="1" fill="#0b978d"/><rect x="795" y="277" width="1" height="1" fill="#08a494"/><rect x="796" y="277" width="1" height="1" fill="#16bdab"/><rect x="800" y="277" width="1" height="1" fill="#0a9f92"/><rect x="806" y="277" width="1" height="1" fill="#0a9f92"/><rect x="807" y="277" width="1" height="1" fill="#0a9f92"/><rect x="810" y="277" width="1" height="1" fill="#22d0c8"/><rect x="820" y="277" width="1" height="1" fill="#0a9f92"/><rect x="821" y="277" width="1" height="1" fill="#1cc6b6"/><rect x="822" y="277" width="1" height="1" fill="#0b978d"/><rect x="823" y="277" width="1" height="1" fill="#08a494"/><rect x="824" y="277" width="1" height="1" fill="#1cc6b6"/><rect x="826" y="277" width="1" height="1" fill="#22d0c8"/><rect x="768" y="278" width="1" height="1" fill="#22d0c8"/><rect x="771" y="278" width="1" height="1" fill="#1cc6b6"/><rect x="775" y="278" width="1" height="1" fill="#22d0c8"/><rect x="776" y="278" width="1" height="1" fill="#0a9f92"/><rect x="778" y="278" width="1" height="1" fill="#08a494"/><rect x="781" y="278" width="1" height="1" fill="#1cc6b6"/><rect x="784" y="278" width="1" height="1" fill="#0a9f92"/><rect x="788" y="278" width="1" height="1" fill="#22d0c8"/><rect x="792" y="278" width="1" height="1" fill="#16bdab"/><rect x="794" y="278" width="1" height="1" fill="#1cc6b6"/><rect x="796" y="278" width="1" height="1" fill="#16bdab"/><rect x="803" y="278" width="1" height="1" fill="#08a494"/><rect x="806" y="278" width="1" height="1" fill="#08a494"/><rect x="807" y="278" width="1" height="1" fill="#16bdab"/><rect x="812" y="278" width="1" height="1" fill="#0a9f92"/><rect x="815" y="278" width="1" height="1" fill="#0b978d"/><rect x="819" y="278" width="1" height="1" fill="#0b978d"/><rect x="821" y="278" width="1" height="1" fill="#0b978d"/><rect x="822" y="278" width="1" height="1" fill="#08a494"/><rect x="823" y="278" width="1" height="1" fill="#1cc6b6"/><rect x="824" y="278" width="1" height="1" fill="#16bdab"/><rect x="825" y="278" width="1" height="1" fill="#22d0c8"/><rect x="771" y="279" width="1" height="1" fill="#22d0c8"/><rect x="777" y="279" width="1" height="1" fill="#22d0c8"/><rect x="778" y="279" width="1" height="1" fill="#1cc6b6"/><rect x="780" y="279" width="1" height="1" fill="#08a494"/><rect x="783" y="279" width="1" height="1" fill="#16bdab"/><rect x="786" y="279" width="1" height="1" fill="#22d0c8"/><rect x="800" y="279" width="1" height="1" fill="#0a9f92"/><rect x="801" y="279" width="1" height="1" fill="#0a9f92"/><rect x="803" y="279" width="1" height="1" fill="#0b978d"/><rect x="804" y="279" width="1" height="1" fill="#0a9f92"/><rect x="806" y="279" width="1" height="1" fill="#1cc6b6"/><rect x="808" y="279" width="1" height="1" fill="#1cc6b6"/><rect x="810" y="279" width="1" height="1" fill="#22d0c8"/><rect x="813" y="279" width="1" height="1" fill="#0b978d"/><rect x="815" y="279" width="1" height="1" fill="#0b978d"/><rect x="817" y="279" width="1" height="1" fill="#08a494"/><rect x="820" y="279" width="1" height="1" fill="#1cc6b6"/><rect x="824" y="279" width="1" height="1" fill="#0b978d"/><rect x="774" y="280" width="1" height="1" fill="#16bdab"/><rect x="776" y="280" width="1" height="1" fill="#08a494"/><rect x="777" y="280" width="1" height="1" fill="#08a494"/><rect x="780" y="280" width="1" height="1" fill="#22d0c8"/><rect x="782" y="280" width="1" height="1" fill="#0b978d"/><rect x="789" y="280" width="1" height="1" fill="#0b978d"/><rect x="795" y="280" width="1" height="1" fill="#16bdab"/><rect x="800" y="280" width="1" height="1" fill="#0a9f92"/><rect x="807" y="280" width="1" height="1" fill="#0a9f92"/><rect x="812" y="280" width="1" height="1" fill="#1cc6b6"/><rect x="815" y="280" width="1" height="1" fill="#22d0c8"/><rect x="817" y="280" width="1" height="1" fill="#16bdab"/><rect x="819" y="280" width="1" height="1" fill="#0b978d"/><rect x="820" y="280" width="1" height="1" fill="#16bdab"/><rect x="823" y="280" width="1" height="1" fill="#0a9f92"/><rect x="826" y="280" width="1" height="1" fill="#16bdab"/><rect x="769" y="281" width="1" height="1" fill="#16bdab"/><rect x="770" y="281" width="1" height="1" fill="#16bdab"/><rect x="772" y="281" width="1" height="1" fill="#08a494"/><rect x="774" y="281" width="1" height="1" fill="#1cc6b6"/><rect x="777" y="281" width="1" height="1" fill="#1cc6b6"/><rect x="779" y="281" width="1" height="1" fill="#0a9f92"/><rect x="781" y="281" width="1" height="1" fill="#0a9f92"/><rect x="785" y="281" width="1" height="1" fill="#16bdab"/><rect x="788" y="281" width="1" height="1" fill="#22d0c8"/><rect x="789" y="281" width="1" height="1" fill="#16bdab"/><rect x="790" y="281" width="1" height="1" fill="#1cc6b6"/><rect x="793" y="281" width="1" height="1" fill="#22d0c8"/><rect x="794" y="281" width="1" height="1" fill="#0a9f92"/><rect x="795" y="281" width="1" height="1" fill="#08a494"/><rect x="796" y="281" width="1" height="1" fill="#08a494"/><rect x="797" y="281" width="1" height="1" fill="#1cc6b6"/><rect x="804" y="281" width="1" height="1" fill="#08a494"/><rect x="807" y="281" width="1" height="1" fill="#0b978d"/><rect x="816" y="281" width="1" height="1" fill="#08a494"/><rect x="818" y="281" width="1" height="1" fill="#22d0c8"/><rect x="825" y="281" width="1" height="1" fill="#22d0c8"/><rect x="770" y="282" width="1" height="1" fill="#0b978d"/><rect x="773" y="282" width="1" height="1" fill="#08a494"/><rect x="779" y="282" width="1" height="1" fill="#0a9f92"/><rect x="780" y="282" width="1" height="1" fill="#0a9f92"/><rect x="784" y="282" width="1" height="1" fill="#08a494"/><rect x="791" y="282" width="1" height="1" fill="#1cc6b6"/><rect x="795" y="282" width="1" height="1" fill="#1cc6b6"/><rect x="796" y="282" width="1" height="1" fill="#22d0c8"/><rect x="798" y="282" width="1" height="1" fill="#0b978d"/><rect x="799" y="282" width="1" height="1" fill="#1cc6b6"/><rect x="800" y="282" width="1" height="1" fill="#22d0c8"/><rect x="802" y="282" width="1" height="1" fill="#16bdab"/><rect x="803" y="282" width="1" height="1" fill="#16bdab"/><rect x="804" y="282" width="1" height="1" fill="#16bdab"/><rect x="805" y="282" width="1" height="1" fill="#1cc6b6"/><rect x="806" y="282" width="1" height="1" fill="#22d0c8"/><rect x="809" y="282" width="1" height="1" fill="#16bdab"/><rect x="812" y="282" width="1" height="1" fill="#16bdab"/><rect x="814" y="282" width="1" height="1" fill="#22d0c8"/><rect x="820" y="282" width="1" height="1" fill="#16bdab"/><rect x="822" y="282" width="1" height="1" fill="#0a9f92"/><rect x="823" y="282" width="1" height="1" fill="#0a9f92"/><rect x="824" y="282" width="1" height="1" fill="#22d0c8"/><rect x="826" y="282" width="1" height="1" fill="#1cc6b6"/><rect x="768" y="283" width="1" height="1" fill="#16bdab"/><rect x="769" y="283" width="1" height="1" fill="#0b978d"/><rect x="776" y="283" width="1" height="1" fill="#16bdab"/><rect x="778" y="283" width="1" height="1" fill="#22d0c8"/><rect x="780" y="283" width="1" height="1" fill="#16bdab"/><rect x="791" y="283" width="1" height="1" fill="#1cc6b6"/><rect x="800" y="283" width="1" height="1" fill="#16bdab"/><rect x="802" y="283" width="1" height="1" fill="#22d0c8"/><rect x="803" y="283" width="1" height="1" fill="#22d0c8"/><rect x="805" y="283" width="1" height="1" fill="#0b978d"/><rect x="815" y="283" width="1" height="1" fill="#1cc6b6"/><rect x="816" y="283" width="1" height="1" fill="#16bdab"/><rect x="822" y="283" width="1" height="1" fill="#08a494"/><rect x="823" y="283" width="1" height="1" fill="#08a494"/><rect x="773" y="284" width="1" height="1" fill="#1cc6b6"/><rect x="780" y="284" width="1" height="1" fill="#16bdab"/><rect x="781" y="284" width="1" height="1" fill="#0b978d"/><rect x="787" y="284" width="1" height="1" fill="#1cc6b6"/><rect x="789" y="284" width="1" height="1" fill="#1cc6b6"/><rect x="791" y="284" width="1" height="1" fill="#0a9f92"/><rect x="793" y="284" width="1" height="1" fill="#0b978d"/><rect x="794" y="284" width="1" height="1" fill="#08a494"/><rect x="806" y="284" width="1" height="1" fill="#22d0c8"/><rect x="809" y="284" width="1" height="1" fill="#08a494"/><rect x="813" y="284" width="1" height="1" fill="#22d0c8"/><rect x="816" y="284" width="1" height="1" fill="#08a494"/><rect x="817" y="284" width="1" height="1" fill="#1cc6b6"/><rect x="818" y="284" width="1" height="1" fill="#0a9f92"/><rect x="821" y="284" width="1" height="1" fill="#1cc6b6"/><rect x="824" y="284" width="1" height="1" fill="#0b978d"/><rect x="768" y="285" width="1" height="1" fill="#16bdab"/><rect x="773" y="285" width="1" height="1" fill="#16bdab"/><rect x="774" y="285" width="1" height="1" fill="#16bdab"/><rect x="777" y="285" width="1" height="1" fill="#0a9f92"/><rect x="778" y="285" width="1" height="1" fill="#08a494"/><rect x="779" y="285" width="1" height="1" fill="#0a9f92"/><rect x="784" y="285" width="1" height="1" fill="#1cc6b6"/><rect x="788" y="285" width="1" height="1" fill="#1cc6b6"/><rect x="791" y="285" width="1" height="1" fill="#0b978d"/><rect x="792" y="285" width="1" height="1" fill="#22d0c8"/><rect x="793" y="285" width="1" height="1" fill="#0b978d"/><rect x="795" y="285" width="1" height="1" fill="#16bdab"/><rect x="800" y="285" width="1" height="1" fill="#1cc6b6"/><rect x="803" y="285" width="1" height="1" fill="#0a9f92"/><rect x="807" y="285" width="1" height="1" fill="#08a494"/><rect x="808" y="285" width="1" height="1" fill="#0b978d"/><rect x="811" y="285" width="1" height="1" fill="#0a9f92"/><rect x="812" y="285" width="1" height="1" fill="#1cc6b6"/><rect x="813" y="285" width="1" height="1" fill="#0b978d"/><rect x="821" y="285" width="1" height="1" fill="#22d0c8"/><rect x="825" y="285" width="1" height="1" fill="#22d0c8"/><rect x="826" y="285" width="1" height="1" fill="#08a494"/><rect x="768" y="286" width="1" height="1" fill="#0a9f92"/><rect x="769" y="286" width="1" height="1" fill="#0a9f92"/><rect x="770" y="286" width="1" height="1" fill="#08a494"/><rect x="773" y="286" width="1" height="1" fill="#0a9f92"/><rect x="779" y="286" width="1" height="1" fill="#0a9f92"/><rect x="781" y="286" width="1" height="1" fill="#0b978d"/><rect x="782" y="286" width="1" height="1" fill="#08a494"/><rect x="788" y="286" width="1" height="1" fill="#08a494"/><rect x="789" y="286" width="1" height="1" fill="#16bdab"/><rect x="791" y="286" width="1" height="1" fill="#16bdab"/><rect x="793" y="286" width="1" height="1" fill="#22d0c8"/><rect x="795" y="286" width="1" height="1" fill="#1cc6b6"/><rect x="798" y="286" width="1" height="1" fill="#22d0c8"/><rect x="800" y="286" width="1" height="1" fill="#22d0c8"/><rect x="805" y="286" width="1" height="1" fill="#0a9f92"/><rect x="810" y="286" width="1" height="1" fill="#22d0c8"/><rect x="812" y="286" width="1" height="1" fill="#0b978d"/><rect x="813" y="286" width="1" height="1" fill="#16bdab"/><rect x="814" y="286" width="1" height="1" fill="#16bdab"/><rect x="815" y="286" width="1" height="1" fill="#08a494"/><rect x="817" y="286" width="1" height="1" fill="#0b978d"/><rect x="823" y="286" width="1" height="1" fill="#0a9f92"/><rect x="824" y="286" width="1" height="1" fill="#16bdab"/><rect x="825" y="286" width="1" height="1" fill="#0a9f92"/><rect x="826" y="286" width="1" height="1" fill="#0b978d"/><rect x="768" y="287" width="1" height="1" fill="#0a9f92"/><rect x="773" y="287" width="1" height="1" fill="#22d0c8"/><rect x="775" y="287" width="1" height="1" fill="#08a494"/><rect x="776" y="287" width="1" height="1" fill="#0a9f92"/><rect x="778" y="287" width="1" height="1" fill="#0a9f92"/><rect x="779" y="287" width="1" height="1" fill="#0b978d"/><rect x="782" y="287" width="1" height="1" fill="#0b978d"/><rect x="783" y="287" width="1" height="1" fill="#1cc6b6"/><rect x="784" y="287" width="1" height="1" fill="#16bdab"/><rect x="785" y="287" width="1" height="1" fill="#1cc6b6"/><rect x="790" y="287" width="1" height="1" fill="#0a9f92"/><rect x="797" y="287" width="1" height="1" fill="#0a9f92"/><rect x="799" y="287" width="1" height="1" fill="#22d0c8"/><rect x="801" y="287" width="1" height="1" fill="#1cc6b6"/><rect x="802" y="287" width="1" height="1" fill="#22d0c8"/><rect x="803" y="287" width="1" height="1" fill="#0b978d"/><rect x="805" y="287" width="1" height="1" fill="#1cc6b6"/><rect x="806" y="287" width="1" height="1" fill="#16bdab"/><rect x="808" y="287" width="1" height="1" fill="#1cc6b6"/><rect x="809" y="287" width="1" height="1" fill="#22d0c8"/><rect x="810" y="287" width="1" height="1" fill="#0b978d"/><rect x="812" y="287" width="1" height="1" fill="#22d0c8"/><rect x="814" y="287" width="1" height="1" fill="#1cc6b6"/><rect x="817" y="287" width="1" height="1" fill="#0a9f92"/><rect x="818" y="287" width="1" height="1" fill="#16bdab"/><rect x="821" y="287" width="1" height="1" fill="#08a494"/><rect x="823" y="287" width="1" height="1" fill="#0a9f92"/><rect x="768" y="288" width="1" height="1" fill="#08a494"/><rect x="771" y="288" width="1" height="1" fill="#1cc6b6"/><rect x="774" y="288" width="1" height="1" fill="#16bdab"/><rect x="777" y="288" width="1" height="1" fill="#22d0c8"/><rect x="779" y="288" width="1" height="1" fill="#0b978d"/><rect x="780" y="288" width="1" height="1" fill="#16bdab"/><rect x="787" y="288" width="1" height="1" fill="#1cc6b6"/><rect x="789" y="288" width="1" height="1" fill="#0a9f92"/><rect x="792" y="288" width="1" height="1" fill="#16bdab"/><rect x="794" y="288" width="1" height="1" fill="#0a9f92"/><rect x="795" y="288" width="1" height="1" fill="#1cc6b6"/><rect x="796" y="288" width="1" height="1" fill="#16bdab"/><rect x="797" y="288" width="1" height="1" fill="#0a9f92"/><rect x="799" y="288" width="1" height="1" fill="#0b978d"/><rect x="810" y="288" width="1" height="1" fill="#08a494"/><rect x="811" y="288" width="1" height="1" fill="#22d0c8"/><rect x="816" y="288" width="1" height="1" fill="#0b978d"/><rect x="818" y="288" width="1" height="1" fill="#0a9f92"/><rect x="821" y="288" width="1" height="1" fill="#08a494"/><rect x="822" y="288" width="1" height="1" fill="#0a9f92"/><rect x="768" y="289" width="1" height="1" fill="#08a494"/><rect x="771" y="289" width="1" height="1" fill="#22d0c8"/><rect x="772" y="289" width="1" height="1" fill="#0b978d"/><rect x="775" y="289" width="1" height="1" fill="#1cc6b6"/><rect x="779" y="289" width="1" height="1" fill="#0b978d"/><rect x="781" y="289" width="1" height="1" fill="#16bdab"/><rect x="785" y="289" width="1" height="1" fill="#0b978d"/><rect x="787" y="289" width="1" height="1" fill="#0a9f92"/><rect x="794" y="289" width="1" height="1" fill="#16bdab"/><rect x="799" y="289" width="1" height="1" fill="#0a9f92"/><rect x="801" y="289" width="1" height="1" fill="#1cc6b6"/><rect x="802" y="289" width="1" height="1" fill="#16bdab"/><rect x="808" y="289" width="1" height="1" fill="#22d0c8"/><rect x="809" y="289" width="1" height="1" fill="#16bdab"/><rect x="811" y="289" width="1" height="1" fill="#22d0c8"/><rect x="817" y="289" width="1" height="1" fill="#0b978d"/><rect x="819" y="289" width="1" height="1" fill="#0b978d"/><rect x="823" y="289" width="1" height="1" fill="#0a9f92"/><rect x="825" y="289" width="1" height="1" fill="#0a9f92"/><rect x="768" y="290" width="1" height="1" fill="#0b978d"/><rect x="772" y="290" width="1" height="1" fill="#0a9f92"/><rect x="775" y="290" width="1" height="1" fill="#0a9f92"/><rect x="776" y="290" width="1" height="1" fill="#16bdab"/><rect x="777" y="290" width="1" height="1" fill="#08a494"/><rect x="780" y="290" width="1" height="1" fill="#08a494"/><rect x="785" y="290" width="1" height="1" fill="#16bdab"/><rect x="789" y="290" width="1" height="1" fill="#16bdab"/><rect x="790" y="290" width="1" height="1" fill="#1cc6b6"/><rect x="791" y="290" width="1" height="1" fill="#1cc6b6"/><rect x="792" y="290" width="1" height="1" fill="#08a494"/><rect x="793" y="290" width="1" height="1" fill="#22d0c8"/><rect x="794" y="290" width="1" height="1" fill="#08a494"/><rect x="796" y="290" width="1" height="1" fill="#22d0c8"/><rect x="799" y="290" width="1" height="1" fill="#1cc6b6"/><rect x="802" y="290" width="1" height="1" fill="#08a494"/><rect x="807" y="290" width="1" height="1" fill="#0b978d"/><rect x="812" y="290" width="1" height="1" fill="#16bdab"/><rect x="814" y="290" width="1" height="1" fill="#0a9f92"/><rect x="815" y="290" width="1" height="1" fill="#0a9f92"/><rect x="818" y="290" width="1" height="1" fill="#22d0c8"/><rect x="822" y="290" width="1" height="1" fill="#08a494"/><rect x="826" y="290" width="1" height="1" fill="#1cc6b6"/><rect x="772" y="291" width="1" height="1" fill="#0a9f92"/><rect x="779" y="291" width="1" height="1" fill="#22d0c8"/><rect x="786" y="291" width="1" height="1" fill="#22d0c8"/><rect x="787" y="291" width="1" height="1" fill="#08a494"/><rect x="790" y="291" width="1" height="1" fill="#22d0c8"/><rect x="795" y="291" width="1" height="1" fill="#16bdab"/><rect x="799" y="291" width="1" height="1" fill="#08a494"/><rect x="801" y="291" width="1" height="1" fill="#16bdab"/><rect x="802" y="291" width="1" height="1" fill="#16bdab"/><rect x="804" y="291" width="1" height="1" fill="#22d0c8"/><rect x="810" y="291" width="1" height="1" fill="#08a494"/><rect x="811" y="291" width="1" height="1" fill="#1cc6b6"/><rect x="813" y="291" width="1" height="1" fill="#0b978d"/><rect x="820" y="291" width="1" height="1" fill="#1cc6b6"/><rect x="823" y="291" width="1" height="1" fill="#0b978d"/><rect x="826" y="291" width="1" height="1" fill="#0a9f92"/><rect x="769" y="292" width="1" height="1" fill="#08a494"/><rect x="774" y="292" width="1" height="1" fill="#0a9f92"/><rect x="775" y="292" width="1" height="1" fill="#08a494"/><rect x="776" y="292" width="1" height="1" fill="#08a494"/><rect x="783" y="292" width="1" height="1" fill="#22d0c8"/><rect x="785" y="292" width="1" height="1" fill="#0b978d"/><rect x="788" y="292" width="1" height="1" fill="#22d0c8"/><rect x="789" y="292" width="1" height="1" fill="#16bdab"/><rect x="792" y="292" width="1" height="1" fill="#22d0c8"/><rect x="798" y="292" width="1" height="1" fill="#0a9f92"/><rect x="801" y="292" width="1" height="1" fill="#0a9f92"/><rect x="813" y="292" width="1" height="1" fill="#0b978d"/><rect x="816" y="292" width="1" height="1" fill="#22d0c8"/><rect x="818" y="292" width="1" height="1" fill="#0a9f92"/><rect x="819" y="292" width="1" height="1" fill="#0b978d"/><rect x="769" y="293" width="1" height="1" fill="#1cc6b6"/><rect x="774" y="293" width="1" height="1" fill="#16bdab"/><rect x="778" y="293" width="1" height="1" fill="#22d0c8"/><rect x="779" y="293" width="1" height="1" fill="#08a494"/><rect x="781" y="293" width="1" height="1" fill="#0b978d"/><rect x="783" y="293" width="1" height="1" fill="#0b978d"/><rect x="786" y="293" width="1" height="1" fill="#1cc6b6"/><rect x="791" y="293" width="1" height="1" fill="#08a494"/><rect x="794" y="293" width="1" height="1" fill="#16bdab"/><rect x="795" y="293" width="1" height="1" fill="#0a9f92"/><rect x="802" y="293" width="1" height="1" fill="#0a9f92"/><rect x="803" y="293" width="1" height="1" fill="#16bdab"/><rect x="805" y="293" width="1" height="1" fill="#16bdab"/><rect x="808" y="293" width="1" height="1" fill="#0a9f92"/><rect x="809" y="293" width="1" height="1" fill="#08a494"/><rect x="811" y="293" width="1" height="1" fill="#08a494"/><rect x="816" y="293" width="1" height="1" fill="#16bdab"/><rect x="820" y="293" width="1" height="1" fill="#1cc6b6"/><rect x="821" y="293" width="1" height="1" fill="#0b978d"/><rect x="825" y="293" width="1" height="1" fill="#0b978d"/><rect x="769" y="294" width="1" height="1" fill="#22d0c8"/><rect x="770" y="294" width="1" height="1" fill="#0b978d"/><rect x="771" y="294" width="1" height="1" fill="#08a494"/><rect x="774" y="294" width="1" height="1" fill="#08a494"/><rect x="776" y="294" width="1" height="1" fill="#16bdab"/><rect x="777" y="294" width="1" height="1" fill="#0b978d"/><rect x="778" y="294" width="1" height="1" fill="#0a9f92"/><rect x="779" y="294" width="1" height="1" fill="#16bdab"/><rect x="780" y="294" width="1" height="1" fill="#0b978d"/><rect x="782" y="294" width="1" height="1" fill="#16bdab"/><rect x="785" y="294" width="1" height="1" fill="#16bdab"/><rect x="787" y="294" width="1" height="1" fill="#22d0c8"/><rect x="788" y="294" width="1" height="1" fill="#22d0c8"/><rect x="790" y="294" width="1" height="1" fill="#16bdab"/><rect x="791" y="294" width="1" height="1" fill="#0a9f92"/><rect x="796" y="294" width="1" height="1" fill="#1cc6b6"/><rect x="797" y="294" width="1" height="1" fill="#08a494"/><rect x="803" y="294" width="1" height="1" fill="#1cc6b6"/><rect x="806" y="294" width="1" height="1" fill="#0a9f92"/><rect x="810" y="294" width="1" height="1" fill="#08a494"/><rect x="812" y="294" width="1" height="1" fill="#22d0c8"/><rect x="816" y="294" width="1" height="1" fill="#22d0c8"/><rect x="818" y="294" width="1" height="1" fill="#16bdab"/><rect x="820" y="294" width="1" height="1" fill="#0b978d"/><rect x="824" y="294" width="1" height="1" fill="#1cc6b6"/><rect x="768" y="295" width="1" height="1" fill="#1cc6b6"/><rect x="771" y="295" width="1" height="1" fill="#0a9f92"/><rect x="772" y="295" width="1" height="1" fill="#22d0c8"/><rect x="773" y="295" width="1" height="1" fill="#0a9f92"/><rect x="778" y="295" width="1" height="1" fill="#22d0c8"/><rect x="789" y="295" width="1" height="1" fill="#1cc6b6"/><rect x="794" y="295" width="1" height="1" fill="#16bdab"/><rect x="800" y="295" width="1" height="1" fill="#0a9f92"/><rect x="803" y="295" width="1" height="1" fill="#16bdab"/><rect x="804" y="295" width="1" height="1" fill="#1cc6b6"/><rect x="806" y="295" width="1" height="1" fill="#16bdab"/><rect x="808" y="295" width="1" height="1" fill="#16bdab"/><rect x="811" y="295" width="1" height="1" fill="#08a494"/><rect x="812" y="295" width="1" height="1" fill="#0a9f92"/><rect x="813" y="295" width="1" height="1" fill="#1cc6b6"/><rect x="819" y="295" width="1" height="1" fill="#0a9f92"/><rect x="826" y="295" width="1" height="1" fill="#0a9f92"/><rect x="768" y="296" width="1" height="1" fill="#16bdab"/><rect x="773" y="296" width="1" height="1" fill="#0b978d"/><rect x="776" y="296" width="1" height="1" fill="#16bdab"/><rect x="784" y="296" width="1" height="1" fill="#0a9f92"/><rect x="785" y="296" width="1" height="1" fill="#0a9f92"/><rect x="787" y="296" width="1" height="1" fill="#22d0c8"/><rect x="790" y="296" width="1" height="1" fill="#08a494"/><rect x="792" y="296" width="1" height="1" fill="#08a494"/><rect x="797" y="296" width="1" height="1" fill="#08a494"/><rect x="799" y="296" width="1" height="1" fill="#0a9f92"/><rect x="804" y="296" width="1" height="1" fill="#08a494"/><rect x="805" y="296" width="1" height="1" fill="#08a494"/><rect x="809" y="296" width="1" height="1" fill="#08a494"/><rect x="811" y="296" width="1" height="1" fill="#08a494"/><rect x="815" y="296" width="1" height="1" fill="#22d0c8"/><rect x="816" y="296" width="1" height="1" fill="#0b978d"/><rect x="820" y="296" width="1" height="1" fill="#22d0c8"/><rect x="821" y="296" width="1" height="1" fill="#22d0c8"/><rect x="823" y="296" width="1" height="1" fill="#22d0c8"/><rect x="826" y="296" width="1" height="1" fill="#16bdab"/><rect x="771" y="297" width="1" height="1" fill="#22d0c8"/><rect x="778" y="297" width="1" height="1" fill="#16bdab"/><rect x="784" y="297" width="1" height="1" fill="#22d0c8"/><rect x="785" y="297" width="1" height="1" fill="#08a494"/><rect x="789" y="297" width="1" height="1" fill="#1cc6b6"/><rect x="797" y="297" width="1" height="1" fill="#16bdab"/><rect x="803" y="297" width="1" height="1" fill="#08a494"/><rect x="804" y="297" width="1" height="1" fill="#0b978d"/><rect x="807" y="297" width="1" height="1" fill="#16bdab"/><rect x="809" y="297" width="1" height="1" fill="#1cc6b6"/><rect x="810" y="297" width="1" height="1" fill="#1cc6b6"/><rect x="811" y="297" width="1" height="1" fill="#22d0c8"/><rect x="813" y="297" width="1" height="1" fill="#16bdab"/><rect x="815" y="297" width="1" height="1" fill="#08a494"/><rect x="816" y="297" width="1" height="1" fill="#22d0c8"/><rect x="819" y="297" width="1" height="1" fill="#1cc6b6"/><rect x="825" y="297" width="1" height="1" fill="#08a494"/><rect x="826" y="297" width="1" height="1" fill="#22d0c8"/><rect x="771" y="298" width="1" height="1" fill="#1cc6b6"/><rect x="772" y="298" width="1" height="1" fill="#08a494"/><rect x="775" y="298" width="1" height="1" fill="#0a9f92"/><rect x="787" y="298" width="1" height="1" fill="#0b978d"/><rect x="788" y="298" width="1" height="1" fill="#22d0c8"/><rect x="798" y="298" width="1" height="1" fill="#08a494"/><rect x="799" y="298" width="1" height="1" fill="#0a9f92"/><rect x="800" y="298" width="1" height="1" fill="#22d0c8"/><rect x="803" y="298" width="1" height="1" fill="#16bdab"/><rect x="811" y="298" width="1" height="1" fill="#0a9f92"/><rect x="812" y="298" width="1" height="1" fill="#0a9f92"/><rect x="813" y="298" width="1" height="1" fill="#0a9f92"/><rect x="814" y="298" width="1" height="1" fill="#1cc6b6"/><rect x="817" y="298" width="1" height="1" fill="#16bdab"/><rect x="821" y="298" width="1" height="1" fill="#0b978d"/><rect x="824" y="298" width="1" height="1" fill="#08a494"/><rect x="825" y="298" width="1" height="1" fill="#0a9f92"/><rect x="769" y="299" width="1" height="1" fill="#0b978d"/><rect x="771" y="299" width="1" height="1" fill="#0a9f92"/><rect x="777" y="299" width="1" height="1" fill="#1cc6b6"/><rect x="779" y="299" width="1" height="1" fill="#1cc6b6"/><rect x="785" y="299" width="1" height="1" fill="#0a9f92"/><rect x="787" y="299" width="1" height="1" fill="#22d0c8"/><rect x="790" y="299" width="1" height="1" fill="#22d0c8"/><rect x="795" y="299" width="1" height="1" fill="#1cc6b6"/><rect x="797" y="299" width="1" height="1" fill="#0a9f92"/><rect x="800" y="299" width="1" height="1" fill="#08a494"/><rect x="802" y="299" width="1" height="1" fill="#22d0c8"/><rect x="812" y="299" width="1" height="1" fill="#1cc6b6"/><rect x="816" y="299" width="1" height="1" fill="#22d0c8"/><rect x="822" y="299" width="1" height="1" fill="#0b978d"/><rect x="826" y="299" width="1" height="1" fill="#22d0c8"/><rect x="768" y="300" width="1" height="1" fill="#0b978d"/><rect x="769" y="300" width="1" height="1" fill="#1cc6b6"/><rect x="776" y="300" width="1" height="1" fill="#0a9f92"/><rect x="777" y="300" width="1" height="1" fill="#08a494"/><rect x="780" y="300" width="1" height="1" fill="#1cc6b6"/><rect x="781" y="300" width="1" height="1" fill="#08a494"/><rect x="787" y="300" width="1" height="1" fill="#0a9f92"/><rect x="788" y="300" width="1" height="1" fill="#0a9f92"/><rect x="792" y="300" width="1" height="1" fill="#0b978d"/><rect x="793" y="300" width="1" height="1" fill="#1cc6b6"/><rect x="794" y="300" width="1" height="1" fill="#0b978d"/><rect x="796" y="300" width="1" height="1" fill="#0a9f92"/><rect x="802" y="300" width="1" height="1" fill="#16bdab"/><rect x="804" y="300" width="1" height="1" fill="#0a9f92"/><rect x="805" y="300" width="1" height="1" fill="#0b978d"/><rect x="806" y="300" width="1" height="1" fill="#16bdab"/><rect x="819" y="300" width="1" height="1" fill="#0b978d"/><rect x="821" y="300" width="1" height="1" fill="#08a494"/><rect x="824" y="300" width="1" height="1" fill="#22d0c8"/><rect x="825" y="300" width="1" height="1" fill="#0a9f92"/><rect x="826" y="300" width="1" height="1" fill="#0b978d"/><rect x="770" y="301" width="1" height="1" fill="#0b978d"/><rect x="776" y="301" width="1" height="1" fill="#1cc6b6"/><rect x="778" y="301" width="1" height="1" fill="#0a9f92"/><rect x="780" y="301" width="1" height="1" fill="#22d0c8"/><rect x="782" y="301" width="1" height="1" fill="#1cc6b6"/><rect x="787" y="301" width="1" height="1" fill="#0b978d"/><rect x="788" y="301" width="1" height="1" fill="#08a494"/><rect x="794" y="301" width="1" height="1" fill="#1cc6b6"/><rect x="795" y="301" width="1" height="1" fill="#1cc6b6"/><rect x="798" y="301" width="1" height="1" fill="#0b978d"/><rect x="800" y="301" width="1" height="1" fill="#22d0c8"/><rect x="804" y="301" width="1" height="1" fill="#0a9f92"/><rect x="808" y="301" width="1" height="1" fill="#0b978d"/><rect x="810" y="301" width="1" height="1" fill="#22d0c8"/><rect x="812" y="301" width="1" height="1" fill="#1cc6b6"/><rect x="813" y="301" width="1" height="1" fill="#0a9f92"/><rect x="819" y="301" width="1" height="1" fill="#22d0c8"/><rect x="821" y="301" width="1" height="1" fill="#1cc6b6"/><rect x="774" y="302" width="1" height="1" fill="#0b978d"/><rect x="779" y="302" width="1" height="1" fill="#08a494"/><rect x="783" y="302" width="1" height="1" fill="#0a9f92"/><rect x="786" y="302" width="1" height="1" fill="#22d0c8"/><rect x="788" y="302" width="1" height="1" fill="#16bdab"/><rect x="790" y="302" width="1" height="1" fill="#0b978d"/><rect x="796" y="302" width="1" height="1" fill="#0a9f92"/><rect x="798" y="302" width="1" height="1" fill="#22d0c8"/><rect x="804" y="302" width="1" height="1" fill="#22d0c8"/><rect x="808" y="302" width="1" height="1" fill="#0b978d"/><rect x="811" y="302" width="1" height="1" fill="#1cc6b6"/><rect x="813" y="302" width="1" height="1" fill="#0a9f92"/><rect x="815" y="302" width="1" height="1" fill="#0b978d"/><rect x="818" y="302" width="1" height="1" fill="#0b978d"/><rect x="822" y="302" width="1" height="1" fill="#0a9f92"/><rect x="823" y="302" width="1" height="1" fill="#16bdab"/><rect x="770" y="303" width="1" height="1" fill="#08a494"/><rect x="773" y="303" width="1" height="1" fill="#0a9f92"/><rect x="775" y="303" width="1" height="1" fill="#22d0c8"/><rect x="782" y="303" width="1" height="1" fill="#1cc6b6"/><rect x="786" y="303" width="1" height="1" fill="#22d0c8"/><rect x="790" y="303" width="1" height="1" fill="#0b978d"/><rect x="794" y="303" width="1" height="1" fill="#0b978d"/><rect x="798" y="303" width="1" height="1" fill="#22d0c8"/><rect x="803" y="303" width="1" height="1" fill="#22d0c8"/><rect x="804" y="303" width="1" height="1" fill="#16bdab"/><rect x="813" y="303" width="1" height="1" fill="#0a9f92"/><rect x="822" y="303" width="1" height="1" fill="#0a9f92"/><rect x="771" y="304" width="1" height="1" fill="#1cc6b6"/><rect x="777" y="304" width="1" height="1" fill="#16bdab"/><rect x="780" y="304" width="1" height="1" fill="#0b978d"/><rect x="784" y="304" width="1" height="1" fill="#22d0c8"/><rect x="802" y="304" width="1" height="1" fill="#16bdab"/><rect x="804" y="304" width="1" height="1" fill="#1cc6b6"/><rect x="812" y="304" width="1" height="1" fill="#0b978d"/><rect x="813" y="304" width="1" height="1" fill="#0b978d"/><rect x="817" y="304" width="1" height="1" fill="#1cc6b6"/><rect x="822" y="304" width="1" height="1" fill="#1cc6b6"/><rect x="769" y="305" width="1" height="1" fill="#0b978d"/><rect x="771" y="305" width="1" height="1" fill="#16bdab"/><rect x="773" y="305" width="1" height="1" fill="#22d0c8"/><rect x="775" y="305" width="1" height="1" fill="#22d0c8"/><rect x="780" y="305" width="1" height="1" fill="#22d0c8"/><rect x="781" y="305" width="1" height="1" fill="#08a494"/><rect x="783" y="305" width="1" height="1" fill="#22d0c8"/><rect x="785" y="305" width="1" height="1" fill="#0b978d"/><rect x="786" y="305" width="1" height="1" fill="#16bdab"/><rect x="792" y="305" width="1" height="1" fill="#1cc6b6"/><rect x="793" y="305" width="1" height="1" fill="#16bdab"/><rect x="796" y="305" width="1" height="1" fill="#1cc6b6"/><rect x="803" y="305" width="1" height="1" fill="#08a494"/><rect x="809" y="305" width="1" height="1" fill="#0a9f92"/><rect x="811" y="305" width="1" height="1" fill="#16bdab"/><rect x="818" y="305" width="1" height="1" fill="#22d0c8"/><rect x="825" y="305" width="1" height="1" fill="#1cc6b6"/><rect x="826" y="305" width="1" height="1" fill="#16bdab"/><rect x="774" y="306" width="1" height="1" fill="#22d0c8"/><rect x="776" y="306" width="1" height="1" fill="#16bdab"/><rect x="777" y="306" width="1" height="1" fill="#1cc6b6"/><rect x="782" y="306" width="1" height="1" fill="#08a494"/><rect x="784" y="306" width="1" height="1" fill="#16bdab"/><rect x="786" y="306" width="1" height="1" fill="#16bdab"/><rect x="787" y="306" width="1" height="1" fill="#0a9f92"/><rect x="791" y="306" width="1" height="1" fill="#1cc6b6"/><rect x="803" y="306" width="1" height="1" fill="#1cc6b6"/><rect x="804" y="306" width="1" height="1" fill="#08a494"/><rect x="810" y="306" width="1" height="1" fill="#0a9f92"/><rect x="818" y="306" width="1" height="1" fill="#0a9f92"/><rect x="819" y="306" width="1" height="1" fill="#16bdab"/><rect x="821" y="306" width="1" height="1" fill="#1cc6b6"/><rect x="822" y="306" width="1" height="1" fill="#0a9f92"/><rect x="772" y="307" width="1" height="1" fill="#08a494"/><rect x="776" y="307" width="1" height="1" fill="#08a494"/><rect x="780" y="307" width="1" height="1" fill="#16bdab"/><rect x="782" y="307" width="1" height="1" fill="#22d0c8"/><rect x="795" y="307" width="1" height="1" fill="#1cc6b6"/><rect x="797" y="307" width="1" height="1" fill="#16bdab"/><rect x="804" y="307" width="1" height="1" fill="#0a9f92"/><rect x="806" y="307" width="1" height="1" fill="#1cc6b6"/><rect x="810" y="307" width="1" height="1" fill="#0a9f92"/><rect x="811" y="307" width="1" height="1" fill="#0a9f92"/><rect x="816" y="307" width="1" height="1" fill="#16bdab"/><rect x="818" y="307" width="1" height="1" fill="#0b978d"/><rect x="823" y="307" width="1" height="1" fill="#16bdab"/><rect x="768" y="308" width="1" height="1" fill="#08a494"/><rect x="775" y="308" width="1" height="1" fill="#22d0c8"/><rect x="782" y="308" width="1" height="1" fill="#08a494"/><rect x="783" y="308" width="1" height="1" fill="#1cc6b6"/><rect x="787" y="308" width="1" height="1" fill="#16bdab"/><rect x="789" y="308" width="1" height="1" fill="#0b978d"/><rect x="790" y="308" width="1" height="1" fill="#08a494"/><rect x="792" y="308" width="1" height="1" fill="#22d0c8"/><rect x="796" y="308" width="1" height="1" fill="#08a494"/><rect x="797" y="308" width="1" height="1" fill="#0b978d"/><rect x="802" y="308" width="1" height="1" fill="#0a9f92"/><rect x="804" y="308" width="1" height="1" fill="#0b978d"/><rect x="806" y="308" width="1" height="1" fill="#08a494"/><rect x="814" y="308" width="1" height="1" fill="#08a494"/><rect x="815" y="308" width="1" height="1" fill="#16bdab"/><rect x="819" y="308" width="1" height="1" fill="#0b978d"/><rect x="774" y="309" width="1" height="1" fill="#0b978d"/><rect x="779" y="309" width="1" height="1" fill="#22d0c8"/><rect x="783" y="309" width="1" height="1" fill="#22d0c8"/><rect x="785" y="309" width="1" height="1" fill="#0b978d"/><rect x="786" y="309" width="1" height="1" fill="#0a9f92"/><rect x="799" y="309" width="1" height="1" fill="#0a9f92"/><rect x="800" y="309" width="1" height="1" fill="#08a494"/><rect x="806" y="309" width="1" height="1" fill="#08a494"/><rect x="809" y="309" width="1" height="1" fill="#0b978d"/><rect x="812" y="309" width="1" height="1" fill="#22d0c8"/><rect x="825" y="309" width="1" height="1" fill="#0a9f92"/><rect x="826" y="309" width="1" height="1" fill="#1cc6b6"/><rect x="769" y="310" width="1" height="1" fill="#1cc6b6"/><rect x="780" y="310" width="1" height="1" fill="#0b978d"/><rect x="787" y="310" width="1" height="1" fill="#0a9f92"/><rect x="788" y="310" width="1" height="1" fill="#0b978d"/><rect x="790" y="310" width="1" height="1" fill="#0a9f92"/><rect x="792" y="310" width="1" height="1" fill="#0b978d"/><rect x="797" y="310" width="1" height="1" fill="#1cc6b6"/><rect x="801" y="310" width="1" height="1" fill="#1cc6b6"/><rect x="802" y="310" width="1" height="1" fill="#1cc6b6"/><rect x="803" y="310" width="1" height="1" fill="#0b978d"/><rect x="809" y="310" width="1" height="1" fill="#0b978d"/><rect x="813" y="310" width="1" height="1" fill="#08a494"/><rect x="819" y="310" width="1" height="1" fill="#0b978d"/><rect x="823" y="310" width="1" height="1" fill="#22d0c8"/><rect x="769" y="311" width="1" height="1" fill="#22d0c8"/><rect x="774" y="311" width="1" height="1" fill="#1cc6b6"/><rect x="793" y="311" width="1" height="1" fill="#16bdab"/><rect x="796" y="311" width="1" height="1" fill="#08a494"/><rect x="799" y="311" width="1" height="1" fill="#08a494"/><rect x="801" y="311" width="1" height="1" fill="#16bdab"/><rect x="802" y="311" width="1" height="1" fill="#16bdab"/><rect x="807" y="311" width="1" height="1" fill="#16bdab"/><rect x="808" y="311" width="1" height="1" fill="#0a9f92"/><rect x="814" y="311" width="1" height="1" fill="#08a494"/><rect x="820" y="311" width="1" height="1" fill="#16bdab"/><rect x="775" y="312" width="1" height="1" fill="#22d0c8"/><rect x="779" y="312" width="1" height="1" fill="#1cc6b6"/><rect x="785" y="312" width="1" height="1" fill="#0a9f92"/><rect x="787" y="312" width="1" height="1" fill="#1cc6b6"/><rect x="791" y="312" width="1" height="1" fill="#08a494"/><rect x="802" y="312" width="1" height="1" fill="#0a9f92"/><rect x="808" y="312" width="1" height="1" fill="#16bdab"/><rect x="809" y="312" width="1" height="1" fill="#16bdab"/><rect x="813" y="312" width="1" height="1" fill="#1cc6b6"/><rect x="825" y="312" width="1" height="1" fill="#1cc6b6"/><rect x="771" y="313" width="1" height="1" fill="#22d0c8"/><rect x="774" y="313" width="1" height="1" fill="#0b978d"/><rect x="788" y="313" width="1" height="1" fill="#0a9f92"/><rect x="791" y="313" width="1" height="1" fill="#08a494"/><rect x="794" y="313" width="1" height="1" fill="#08a494"/><rect x="795" y="313" width="1" height="1" fill="#0b978d"/><rect x="796" y="313" width="1" height="1" fill="#1cc6b6"/><rect x="800" y="313" width="1" height="1" fill="#08a494"/><rect x="810" y="313" width="1" height="1" fill="#1cc6b6"/><rect x="811" y="313" width="1" height="1" fill="#0b978d"/><rect x="818" y="313" width="1" height="1" fill="#0b978d"/><rect x="819" y="313" width="1" height="1" fill="#22d0c8"/><rect x="821" y="313" width="1" height="1" fill="#0a9f92"/><rect x="768" y="314" width="1" height="1" fill="#22d0c8"/><rect x="779" y="314" width="1" height="1" fill="#0a9f92"/><rect x="782" y="314" width="1" height="1" fill="#1cc6b6"/><rect x="787" y="314" width="1" height="1" fill="#22d0c8"/><rect x="788" y="314" width="1" height="1" fill="#22d0c8"/><rect x="790" y="314" width="1" height="1" fill="#1cc6b6"/><rect x="794" y="314" width="1" height="1" fill="#0a9f92"/><rect x="796" y="314" width="1" height="1" fill="#0b978d"/><rect x="798" y="314" width="1" height="1" fill="#0b978d"/><rect x="802" y="314" width="1" height="1" fill="#0a9f92"/><rect x="806" y="314" width="1" height="1" fill="#08a494"/><rect x="811" y="314" width="1" height="1" fill="#1cc6b6"/><rect x="813" y="314" width="1" height="1" fill="#1cc6b6"/><rect x="815" y="314" width="1" height="1" fill="#0a9f92"/><rect x="817" y="314" width="1" height="1" fill="#08a494"/><rect x="819" y="314" width="1" height="1" fill="#22d0c8"/><rect x="823" y="314" width="1" height="1" fill="#22d0c8"/><rect x="771" y="315" width="1" height="1" fill="#1cc6b6"/><rect x="773" y="315" width="1" height="1" fill="#08a494"/><rect x="777" y="315" width="1" height="1" fill="#22d0c8"/><rect x="787" y="315" width="1" height="1" fill="#16bdab"/><rect x="790" y="315" width="1" height="1" fill="#0b978d"/><rect x="791" y="315" width="1" height="1" fill="#16bdab"/><rect x="796" y="315" width="1" height="1" fill="#0a9f92"/><rect x="799" y="315" width="1" height="1" fill="#08a494"/><rect x="801" y="315" width="1" height="1" fill="#0b978d"/><rect x="809" y="315" width="1" height="1" fill="#16bdab"/><rect x="813" y="315" width="1" height="1" fill="#22d0c8"/><rect x="817" y="315" width="1" height="1" fill="#1cc6b6"/><rect x="823" y="315" width="1" height="1" fill="#22d0c8"/><rect x="826" y="315" width="1" height="1" fill="#0a9f92"/><rect x="768" y="316" width="1" height="1" fill="#22d0c8"/><rect x="777" y="316" width="1" height="1" fill="#0a9f92"/><rect x="780" y="316" width="1" height="1" fill="#1cc6b6"/><rect x="785" y="316" width="1" height="1" fill="#0a9f92"/><rect x="801" y="316" width="1" height="1" fill="#08a494"/><rect x="805" y="316" width="1" height="1" fill="#16bdab"/><rect x="810" y="316" width="1" height="1" fill="#1cc6b6"/><rect x="814" y="316" width="1" height="1" fill="#0b978d"/><rect x="769" y="317" width="1" height="1" fill="#0a9f92"/><rect x="770" y="317" width="1" height="1" fill="#08a494"/><rect x="771" y="317" width="1" height="1" fill="#0a9f92"/><rect x="773" y="317" width="1" height="1" fill="#22d0c8"/><rect x="775" y="317" width="1" height="1" fill="#22d0c8"/><rect x="776" y="317" width="1" height="1" fill="#08a494"/><rect x="802" y="317" width="1" height="1" fill="#16bdab"/><rect x="806" y="317" width="1" height="1" fill="#16bdab"/><rect x="807" y="317" width="1" height="1" fill="#0b978d"/><rect x="814" y="317" width="1" height="1" fill="#0b978d"/><rect x="817" y="317" width="1" height="1" fill="#0b978d"/><rect x="820" y="317" width="1" height="1" fill="#16bdab"/><rect x="821" y="317" width="1" height="1" fill="#1cc6b6"/><rect x="823" y="317" width="1" height="1" fill="#1cc6b6"/><rect x="825" y="317" width="1" height="1" fill="#08a494"/><rect x="769" y="318" width="1" height="1" fill="#16bdab"/><rect x="775" y="318" width="1" height="1" fill="#0a9f92"/><rect x="776" y="318" width="1" height="1" fill="#08a494"/><rect x="779" y="318" width="1" height="1" fill="#0a9f92"/><rect x="780" y="318" width="1" height="1" fill="#0b978d"/><rect x="781" y="318" width="1" height="1" fill="#08a494"/><rect x="792" y="318" width="1" height="1" fill="#08a494"/><rect x="793" y="318" width="1" height="1" fill="#16bdab"/><rect x="795" y="318" width="1" height="1" fill="#22d0c8"/><rect x="800" y="318" width="1" height="1" fill="#08a494"/><rect x="802" y="318" width="1" height="1" fill="#16bdab"/><rect x="803" y="318" width="1" height="1" fill="#0a9f92"/><rect x="809" y="318" width="1" height="1" fill="#08a494"/><rect x="810" y="318" width="1" height="1" fill="#22d0c8"/><rect x="811" y="318" width="1" height="1" fill="#08a494"/><rect x="814" y="318" width="1" height="1" fill="#0b978d"/><rect x="793" y="319" width="1" height="1" fill="#1cc6b6"/><rect x="794" y="319" width="1" height="1" fill="#0b978d"/><rect x="797" y="319" width="1" height="1" fill="#16bdab"/><rect x="806" y="319" width="1" height="1" fill="#0b978d"/><rect x="813" y="319" width="1" height="1" fill="#16bdab"/><rect x="818" y="319" width="1" height="1" fill="#08a494"/><rect x="826" y="319" width="1" height="1" fill="#16bdab"/><rect x="770" y="320" width="1" height="1" fill="#22d0c8"/><rect x="776" y="320" width="1" height="1" fill="#08a494"/><rect x="782" y="320" width="1" height="1" fill="#16bdab"/><rect x="789" y="320" width="1" height="1" fill="#0a9f92"/><rect x="796" y="320" width="1" height="1" fill="#1cc6b6"/><rect x="797" y="320" width="1" height="1" fill="#16bdab"/><rect x="799" y="320" width="1" height="1" fill="#1cc6b6"/><rect x="801" y="320" width="1" height="1" fill="#1cc6b6"/><rect x="803" y="320" width="1" height="1" fill="#1cc6b6"/><rect x="812" y="320" width="1" height="1" fill="#22d0c8"/><rect x="813" y="320" width="1" height="1" fill="#16bdab"/><rect x="818" y="320" width="1" height="1" fill="#0a9f92"/><rect x="819" y="320" width="1" height="1" fill="#22d0c8"/><rect x="824" y="320" width="1" height="1" fill="#0b978d"/><rect x="826" y="320" width="1" height="1" fill="#1cc6b6"/><rect x="769" y="321" width="1" height="1" fill="#22d0c8"/><rect x="771" y="321" width="1" height="1" fill="#16bdab"/><rect x="776" y="321" width="1" height="1" fill="#1cc6b6"/><rect x="779" y="321" width="1" height="1" fill="#16bdab"/><rect x="782" y="321" width="1" height="1" fill="#08a494"/><rect x="784" y="321" width="1" height="1" fill="#0a9f92"/><rect x="790" y="321" width="1" height="1" fill="#0a9f92"/><rect x="795" y="321" width="1" height="1" fill="#22d0c8"/><rect x="796" y="321" width="1" height="1" fill="#08a494"/><rect x="797" y="321" width="1" height="1" fill="#08a494"/><rect x="798" y="321" width="1" height="1" fill="#08a494"/><rect x="801" y="321" width="1" height="1" fill="#0b978d"/><rect x="803" y="321" width="1" height="1" fill="#0a9f92"/><rect x="808" y="321" width="1" height="1" fill="#0b978d"/><rect x="810" y="321" width="1" height="1" fill="#1cc6b6"/><rect x="816" y="321" width="1" height="1" fill="#16bdab"/><rect x="819" y="321" width="1" height="1" fill="#0a9f92"/><rect x="820" y="321" width="1" height="1" fill="#16bdab"/><rect x="824" y="321" width="1" height="1" fill="#0b978d"/><rect x="769" y="322" width="1" height="1" fill="#08a494"/><rect x="770" y="322" width="1" height="1" fill="#1cc6b6"/><rect x="773" y="322" width="1" height="1" fill="#16bdab"/><rect x="774" y="322" width="1" height="1" fill="#0a9f92"/><rect x="775" y="322" width="1" height="1" fill="#0a9f92"/><rect x="781" y="322" width="1" height="1" fill="#16bdab"/><rect x="782" y="322" width="1" height="1" fill="#1cc6b6"/><rect x="789" y="322" width="1" height="1" fill="#08a494"/><rect x="792" y="322" width="1" height="1" fill="#16bdab"/><rect x="793" y="322" width="1" height="1" fill="#08a494"/><rect x="799" y="322" width="1" height="1" fill="#0a9f92"/><rect x="812" y="322" width="1" height="1" fill="#22d0c8"/><rect x="814" y="322" width="1" height="1" fill="#22d0c8"/><rect x="821" y="322" width="1" height="1" fill="#1cc6b6"/><rect x="823" y="322" width="1" height="1" fill="#16bdab"/><rect x="773" y="323" width="1" height="1" fill="#0b978d"/><rect x="778" y="323" width="1" height="1" fill="#0b978d"/><rect x="780" y="323" width="1" height="1" fill="#0a9f92"/><rect x="785" y="323" width="1" height="1" fill="#0a9f92"/><rect x="788" y="323" width="1" height="1" fill="#08a494"/><rect x="790" y="323" width="1" height="1" fill="#1cc6b6"/><rect x="792" y="323" width="1" height="1" fill="#16bdab"/><rect x="793" y="323" width="1" height="1" fill="#0a9f92"/><rect x="795" y="323" width="1" height="1" fill="#16bdab"/><rect x="796" y="323" width="1" height="1" fill="#22d0c8"/><rect x="803" y="323" width="1" height="1" fill="#08a494"/><rect x="805" y="323" width="1" height="1" fill="#0a9f92"/><rect x="820" y="323" width="1" height="1" fill="#0a9f92"/><rect x="821" y="323" width="1" height="1" fill="#08a494"/><rect x="825" y="323" width="1" height="1" fill="#22d0c8"/><rect x="771" y="324" width="1" height="1" fill="#08a494"/><rect x="780" y="324" width="1" height="1" fill="#1cc6b6"/><rect x="785" y="324" width="1" height="1" fill="#22d0c8"/><rect x="787" y="324" width="1" height="1" fill="#1cc6b6"/><rect x="788" y="324" width="1" height="1" fill="#0b978d"/><rect x="789" y="324" width="1" height="1" fill="#22d0c8"/><rect x="795" y="324" width="1" height="1" fill="#1cc6b6"/><rect x="796" y="324" width="1" height="1" fill="#0b978d"/><rect x="798" y="324" width="1" height="1" fill="#08a494"/><rect x="801" y="324" width="1" height="1" fill="#08a494"/><rect x="807" y="324" width="1" height="1" fill="#0b978d"/><rect x="808" y="324" width="1" height="1" fill="#16bdab"/><rect x="822" y="324" width="1" height="1" fill="#08a494"/><rect x="768" y="325" width="1" height="1" fill="#0b978d"/><rect x="769" y="325" width="1" height="1" fill="#16bdab"/><rect x="781" y="325" width="1" height="1" fill="#0b978d"/><rect x="784" y="325" width="1" height="1" fill="#1cc6b6"/><rect x="789" y="325" width="1" height="1" fill="#08a494"/><rect x="791" y="325" width="1" height="1" fill="#22d0c8"/><rect x="800" y="325" width="1" height="1" fill="#08a494"/><rect x="803" y="325" width="1" height="1" fill="#0a9f92"/><rect x="804" y="325" width="1" height="1" fill="#22d0c8"/><rect x="810" y="325" width="1" height="1" fill="#08a494"/><rect x="813" y="325" width="1" height="1" fill="#0b978d"/><rect x="823" y="325" width="1" height="1" fill="#0b978d"/><rect x="824" y="325" width="1" height="1" fill="#1cc6b6"/><rect x="770" y="326" width="1" height="1" fill="#0a9f92"/><rect x="774" y="326" width="1" height="1" fill="#1cc6b6"/><rect x="776" y="326" width="1" height="1" fill="#16bdab"/><rect x="784" y="326" width="1" height="1" fill="#16bdab"/><rect x="786" y="326" width="1" height="1" fill="#1cc6b6"/><rect x="788" y="326" width="1" height="1" fill="#16bdab"/><rect x="795" y="326" width="1" height="1" fill="#1cc6b6"/><rect x="803" y="326" width="1" height="1" fill="#08a494"/><rect x="809" y="326" width="1" height="1" fill="#0b978d"/><rect x="813" y="326" width="1" height="1" fill="#22d0c8"/><rect x="778" y="327" width="1" height="1" fill="#0a9f92"/><rect x="784" y="327" width="1" height="1" fill="#0b978d"/><rect x="787" y="327" width="1" height="1" fill="#0a9f92"/><rect x="788" y="327" width="1" height="1" fill="#0a9f92"/><rect x="795" y="327" width="1" height="1" fill="#22d0c8"/><rect x="801" y="327" width="1" height="1" fill="#1cc6b6"/><rect x="802" y="327" width="1" height="1" fill="#16bdab"/><rect x="808" y="327" width="1" height="1" fill="#08a494"/><rect x="809" y="327" width="1" height="1" fill="#08a494"/><rect x="818" y="327" width="1" height="1" fill="#0a9f92"/><rect x="823" y="327" width="1" height="1" fill="#1cc6b6"/><rect x="771" y="328" width="1" height="1" fill="#16bdab"/><rect x="773" y="328" width="1" height="1" fill="#0a9f92"/><rect x="781" y="328" width="1" height="1" fill="#22d0c8"/><rect x="783" y="328" width="1" height="1" fill="#22d0c8"/><rect x="794" y="328" width="1" height="1" fill="#22d0c8"/><rect x="802" y="328" width="1" height="1" fill="#08a494"/><rect x="805" y="328" width="1" height="1" fill="#1cc6b6"/><rect x="810" y="328" width="1" height="1" fill="#0a9f92"/><rect x="812" y="328" width="1" height="1" fill="#08a494"/><rect x="814" y="328" width="1" height="1" fill="#1cc6b6"/><rect x="815" y="328" width="1" height="1" fill="#22d0c8"/><rect x="817" y="328" width="1" height="1" fill="#1cc6b6"/><rect x="782" y="329" width="1" height="1" fill="#0a9f92"/><rect x="786" y="329" width="1" height="1" fill="#0a9f92"/><rect x="789" y="329" width="1" height="1" fill="#22d0c8"/><rect x="792" y="329" width="1" height="1" fill="#0b978d"/><rect x="799" y="329" width="1" height="1" fill="#22d0c8"/><rect x="802" y="329" width="1" height="1" fill="#1cc6b6"/><rect x="804" y="329" width="1" height="1" fill="#0a9f92"/><rect x="812" y="329" width="1" height="1" fill="#1cc6b6"/><rect x="769" y="330" width="1" height="1" fill="#0b978d"/><rect x="774" y="330" width="1" height="1" fill="#16bdab"/><rect x="777" y="330" width="1" height="1" fill="#16bdab"/><rect x="778" y="330" width="1" height="1" fill="#0b978d"/><rect x="786" y="330" width="1" height="1" fill="#22d0c8"/><rect x="789" y="330" width="1" height="1" fill="#08a494"/><rect x="797" y="330" width="1" height="1" fill="#22d0c8"/><rect x="799" y="330" width="1" height="1" fill="#1cc6b6"/><rect x="800" y="330" width="1" height="1" fill="#1cc6b6"/><rect x="804" y="330" width="1" height="1" fill="#08a494"/><rect x="811" y="330" width="1" height="1" fill="#16bdab"/><rect x="812" y="330" width="1" height="1" fill="#22d0c8"/><rect x="817" y="330" width="1" height="1" fill="#16bdab"/><rect x="819" y="330" width="1" height="1" fill="#0a9f92"/><rect x="820" y="330" width="1" height="1" fill="#0b978d"/><rect x="821" y="330" width="1" height="1" fill="#0a9f92"/><rect x="825" y="330" width="1" height="1" fill="#1cc6b6"/><rect x="785" y="331" width="1" height="1" fill="#0b978d"/><rect x="793" y="331" width="1" height="1" fill="#0b978d"/><rect x="796" y="331" width="1" height="1" fill="#08a494"/><rect x="798" y="331" width="1" height="1" fill="#0a9f92"/><rect x="802" y="331" width="1" height="1" fill="#08a494"/><rect x="803" y="331" width="1" height="1" fill="#08a494"/><rect x="806" y="331" width="1" height="1" fill="#1cc6b6"/><rect x="813" y="331" width="1" height="1" fill="#22d0c8"/><rect x="815" y="331" width="1" height="1" fill="#08a494"/><rect x="824" y="331" width="1" height="1" fill="#0b978d"/><rect x="769" y="332" width="1" height="1" fill="#0b978d"/><rect x="793" y="332" width="1" height="1" fill="#1cc6b6"/><rect x="797" y="332" width="1" height="1" fill="#0b978d"/><rect x="800" y="332" width="1" height="1" fill="#08a494"/><rect x="810" y="332" width="1" height="1" fill="#0a9f92"/><rect x="813" y="332" width="1" height="1" fill="#16bdab"/><rect x="822" y="332" width="1" height="1" fill="#0a9f92"/><rect x="826" y="332" width="1" height="1" fill="#0b978d"/><rect x="771" y="333" width="1" height="1" fill="#1cc6b6"/><rect x="772" y="333" width="1" height="1" fill="#08a494"/><rect x="773" y="333" width="1" height="1" fill="#1cc6b6"/><rect x="782" y="333" width="1" height="1" fill="#08a494"/><rect x="798" y="333" width="1" height="1" fill="#08a494"/><rect x="803" y="333" width="1" height="1" fill="#0b978d"/><rect x="807" y="333" width="1" height="1" fill="#08a494"/><rect x="814" y="333" width="1" height="1" fill="#16bdab"/><rect x="815" y="333" width="1" height="1" fill="#0b978d"/><rect x="816" y="333" width="1" height="1" fill="#08a494"/><rect x="820" y="333" width="1" height="1" fill="#16bdab"/><rect x="771" y="334" width="1" height="1" fill="#22d0c8"/><rect x="772" y="334" width="1" height="1" fill="#08a494"/><rect x="773" y="334" width="1" height="1" fill="#1cc6b6"/><rect x="778" y="334" width="1" height="1" fill="#0a9f92"/><rect x="779" y="334" width="1" height="1" fill="#0b978d"/><rect x="783" y="334" width="1" height="1" fill="#0a9f92"/><rect x="810" y="334" width="1" height="1" fill="#08a494"/><rect x="821" y="334" width="1" height="1" fill="#0b978d"/><rect x="777" y="335" width="1" height="1" fill="#0b978d"/><rect x="789" y="335" width="1" height="1" fill="#0a9f92"/><rect x="794" y="335" width="1" height="1" fill="#22d0c8"/><rect x="798" y="335" width="1" height="1" fill="#0b978d"/><rect x="799" y="335" width="1" height="1" fill="#16bdab"/><rect x="805" y="335" width="1" height="1" fill="#22d0c8"/><rect x="806" y="335" width="1" height="1" fill="#16bdab"/><rect x="807" y="335" width="1" height="1" fill="#0b978d"/><rect x="819" y="335" width="1" height="1" fill="#08a494"/><rect x="823" y="335" width="1" height="1" fill="#0a9f92"/><rect x="768" y="336" width="1" height="1" fill="#1cc6b6"/><rect x="772" y="336" width="1" height="1" fill="#0b978d"/><rect x="775" y="336" width="1" height="1" fill="#0a9f92"/><rect x="777" y="336" width="1" height="1" fill="#22d0c8"/><rect x="786" y="336" width="1" height="1" fill="#1cc6b6"/><rect x="791" y="336" width="1" height="1" fill="#0b978d"/><rect x="792" y="336" width="1" height="1" fill="#22d0c8"/><rect x="799" y="336" width="1" height="1" fill="#1cc6b6"/><rect x="805" y="336" width="1" height="1" fill="#08a494"/><rect x="809" y="336" width="1" height="1" fill="#0b978d"/><rect x="815" y="336" width="1" height="1" fill="#16bdab"/><rect x="824" y="336" width="1" height="1" fill="#08a494"/><rect x="769" y="337" width="1" height="1" fill="#08a494"/><rect x="772" y="337" width="1" height="1" fill="#16bdab"/><rect x="776" y="337" width="1" height="1" fill="#22d0c8"/><rect x="786" y="337" width="1" height="1" fill="#22d0c8"/><rect x="791" y="337" width="1" height="1" fill="#0a9f92"/><rect x="802" y="337" width="1" height="1" fill="#0b978d"/><rect x="808" y="337" width="1" height="1" fill="#1cc6b6"/><rect x="809" y="337" width="1" height="1" fill="#0a9f92"/><rect x="810" y="337" width="1" height="1" fill="#16bdab"/><rect x="811" y="337" width="1" height="1" fill="#0b978d"/><rect x="818" y="337" width="1" height="1" fill="#08a494"/><rect x="822" y="337" width="1" height="1" fill="#16bdab"/><rect x="823" y="337" width="1" height="1" fill="#08a494"/><rect x="768" y="338" width="1" height="1" fill="#08a494"/><rect x="772" y="338" width="1" height="1" fill="#1cc6b6"/><rect x="778" y="338" width="1" height="1" fill="#1cc6b6"/><rect x="779" y="338" width="1" height="1" fill="#0a9f92"/><rect x="789" y="338" width="1" height="1" fill="#16bdab"/><rect x="793" y="338" width="1" height="1" fill="#0a9f92"/><rect x="794" y="338" width="1" height="1" fill="#0b978d"/><rect x="801" y="338" width="1" height="1" fill="#22d0c8"/><rect x="805" y="338" width="1" height="1" fill="#08a494"/><rect x="772" y="339" width="1" height="1" fill="#0b978d"/><rect x="793" y="339" width="1" height="1" fill="#16bdab"/><rect x="794" y="339" width="1" height="1" fill="#1cc6b6"/><rect x="796" y="339" width="1" height="1" fill="#1cc6b6"/><rect x="808" y="339" width="1" height="1" fill="#1cc6b6"/><rect x="825" y="339" width="1" height="1" fill="#22d0c8"/><rect x="771" y="340" width="1" height="1" fill="#0b978d"/><rect x="775" y="340" width="1" height="1" fill="#16bdab"/><rect x="785" y="340" width="1" height="1" fill="#22d0c8"/><rect x="787" y="340" width="1" height="1" fill="#22d0c8"/><rect x="799" y="340" width="1" height="1" fill="#16bdab"/><rect x="800" y="340" width="1" height="1" fill="#1cc6b6"/><rect x="801" y="340" width="1" height="1" fill="#16bdab"/><rect x="814" y="340" width="1" height="1" fill="#1cc6b6"/><rect x="815" y="340" width="1" height="1" fill="#08a494"/><rect x="826" y="340" width="1" height="1" fill="#0b978d"/><rect x="768" y="341" width="1" height="1" fill="#22d0c8"/><rect x="776" y="341" width="1" height="1" fill="#22d0c8"/><rect x="779" y="341" width="1" height="1" fill="#0a9f92"/><rect x="795" y="341" width="1" height="1" fill="#22d0c8"/><rect x="799" y="341" width="1" height="1" fill="#22d0c8"/><rect x="811" y="341" width="1" height="1" fill="#22d0c8"/><rect x="814" y="341" width="1" height="1" fill="#1cc6b6"/><rect x="815" y="341" width="1" height="1" fill="#16bdab"/><rect x="777" y="342" width="1" height="1" fill="#0b978d"/><rect x="785" y="342" width="1" height="1" fill="#08a494"/><rect x="787" y="342" width="1" height="1" fill="#0b978d"/><rect x="793" y="342" width="1" height="1" fill="#16bdab"/><rect x="806" y="342" width="1" height="1" fill="#1cc6b6"/><rect x="813" y="342" width="1" height="1" fill="#22d0c8"/><rect x="824" y="342" width="1" height="1" fill="#22d0c8"/><rect x="771" y="343" width="1" height="1" fill="#1cc6b6"/><rect x="773" y="343" width="1" height="1" fill="#16bdab"/><rect x="781" y="343" width="1" height="1" fill="#0b978d"/><rect x="785" y="343" width="1" height="1" fill="#0a9f92"/><rect x="796" y="343" width="1" height="1" fill="#0a9f92"/><rect x="797" y="343" width="1" height="1" fill="#1cc6b6"/><rect x="816" y="343" width="1" height="1" fill="#08a494"/><rect x="818" y="343" width="1" height="1" fill="#0b978d"/><rect x="821" y="343" width="1" height="1" fill="#22d0c8"/><rect x="822" y="343" width="1" height="1" fill="#22d0c8"/><rect x="790" y="344" width="1" height="1" fill="#08a494"/><rect x="794" y="344" width="1" height="1" fill="#1cc6b6"/><rect x="796" y="344" width="1" height="1" fill="#0b978d"/><rect x="798" y="344" width="1" height="1" fill="#22d0c8"/><rect x="816" y="344" width="1" height="1" fill="#22d0c8"/><rect x="823" y="344" width="1" height="1" fill="#08a494"/><rect x="772" y="345" width="1" height="1" fill="#1cc6b6"/><rect x="774" y="345" width="1" height="1" fill="#08a494"/><rect x="801" y="345" width="1" height="1" fill="#0a9f92"/><rect x="817" y="345" width="1" height="1" fill="#0a9f92"/><rect x="774" y="346" width="1" height="1" fill="#0b978d"/><rect x="777" y="346" width="1" height="1" fill="#0a9f92"/><rect x="785" y="346" width="1" height="1" fill="#0a9f92"/><rect x="791" y="346" width="1" height="1" fill="#1cc6b6"/><rect x="797" y="346" width="1" height="1" fill="#08a494"/><rect x="805" y="346" width="1" height="1" fill="#0a9f92"/><rect x="811" y="346" width="1" height="1" fill="#0a9f92"/><rect x="816" y="346" width="1" height="1" fill="#08a494"/><rect x="818" y="346" width="1" height="1" fill="#0a9f92"/><rect x="823" y="346" width="1" height="1" fill="#1cc6b6"/><rect x="825" y="346" width="1" height="1" fill="#0a9f92"/><rect x="769" y="347" width="1" height="1" fill="#22d0c8"/><rect x="784" y="347" width="1" height="1" fill="#22d0c8"/><rect x="807" y="347" width="1" height="1" fill="#1cc6b6"/><rect x="770" y="348" width="1" height="1" fill="#08a494"/><rect x="771" y="348" width="1" height="1" fill="#22d0c8"/><rect x="776" y="348" width="1" height="1" fill="#08a494"/><rect x="788" y="348" width="1" height="1" fill="#16bdab"/><rect x="797" y="348" width="1" height="1" fill="#0b978d"/><rect x="802" y="348" width="1" height="1" fill="#16bdab"/><rect x="811" y="348" width="1" height="1" fill="#1cc6b6"/><rect x="772" y="349" width="1" height="1" fill="#1cc6b6"/><rect x="776" y="349" width="1" height="1" fill="#16bdab"/><rect x="783" y="349" width="1" height="1" fill="#08a494"/><rect x="791" y="349" width="1" height="1" fill="#0b978d"/><rect x="792" y="349" width="1" height="1" fill="#16bdab"/><rect x="805" y="349" width="1" height="1" fill="#22d0c8"/><rect x="817" y="349" width="1" height="1" fill="#1cc6b6"/><rect x="822" y="349" width="1" height="1" fill="#22d0c8"/><rect x="824" y="349" width="1" height="1" fill="#22d0c8"/><rect x="773" y="350" width="1" height="1" fill="#16bdab"/><rect x="775" y="350" width="1" height="1" fill="#08a494"/><rect x="788" y="350" width="1" height="1" fill="#16bdab"/><rect x="789" y="350" width="1" height="1" fill="#1cc6b6"/><rect x="802" y="350" width="1" height="1" fill="#0a9f92"/><rect x="822" y="350" width="1" height="1" fill="#22d0c8"/><rect x="826" y="350" width="1" height="1" fill="#22d0c8"/><rect x="768" y="351" width="1" height="1" fill="#1cc6b6"/><rect x="784" y="351" width="1" height="1" fill="#1cc6b6"/><rect x="819" y="351" width="1" height="1" fill="#0a9f92"/><rect x="772" y="352" width="1" height="1" fill="#22d0c8"/><rect x="788" y="352" width="1" height="1" fill="#22d0c8"/><rect x="810" y="352" width="1" height="1" fill="#08a494"/><rect x="768" y="353" width="1" height="1" fill="#08a494"/><rect x="788" y="353" width="1" height="1" fill="#0a9f92"/><rect x="792" y="353" width="1" height="1" fill="#0a9f92"/><rect x="794" y="353" width="1" height="1" fill="#1cc6b6"/><rect x="815" y="353" width="1" height="1" fill="#1cc6b6"/><rect x="817" y="353" width="1" height="1" fill="#0a9f92"/><rect x="820" y="353" width="1" height="1" fill="#16bdab"/><rect x="769" y="354" width="1" height="1" fill="#16bdab"/><rect x="770" y="354" width="1" height="1" fill="#08a494"/><rect x="787" y="354" width="1" height="1" fill="#1cc6b6"/><rect x="794" y="354" width="1" height="1" fill="#16bdab"/><rect x="799" y="354" width="1" height="1" fill="#16bdab"/><rect x="800" y="354" width="1" height="1" fill="#1cc6b6"/><rect x="806" y="354" width="1" height="1" fill="#1cc6b6"/><rect x="809" y="354" width="1" height="1" fill="#16bdab"/><rect x="819" y="354" width="1" height="1" fill="#1cc6b6"/><rect x="776" y="355" width="1" height="1" fill="#0b978d"/><rect x="788" y="355" width="1" height="1" fill="#0b978d"/><rect x="776" y="356" width="1" height="1" fill="#16bdab"/><rect x="781" y="356" width="1" height="1" fill="#1cc6b6"/><rect x="788" y="356" width="1" height="1" fill="#16bdab"/><rect x="789" y="356" width="1" height="1" fill="#1cc6b6"/><rect x="792" y="356" width="1" height="1" fill="#0a9f92"/><rect x="798" y="356" width="1" height="1" fill="#08a494"/><rect x="808" y="356" width="1" height="1" fill="#0b978d"/><rect x="813" y="356" width="1" height="1" fill="#08a494"/><rect x="814" y="356" width="1" height="1" fill="#1cc6b6"/><rect x="768" y="357" width="1" height="1" fill="#1cc6b6"/><rect x="779" y="357" width="1" height="1" fill="#0b978d"/><rect x="809" y="357" width="1" height="1" fill="#08a494"/><rect x="814" y="357" width="1" height="1" fill="#1cc6b6"/><rect x="819" y="357" width="1" height="1" fill="#22d0c8"/><rect x="826" y="357" width="1" height="1" fill="#22d0c8"/><rect x="791" y="358" width="1" height="1" fill="#1cc6b6"/><rect x="819" y="358" width="1" height="1" fill="#22d0c8"/><rect x="773" y="359" width="1" height="1" fill="#1cc6b6"/><rect x="777" y="359" width="1" height="1" fill="#16bdab"/><rect x="791" y="359" width="1" height="1" fill="#0b978d"/><rect x="811" y="359" width="1" height="1" fill="#16bdab"/><rect x="797" y="360" width="1" height="1" fill="#08a494"/><rect x="823" y="360" width="1" height="1" fill="#08a494"/><rect x="791" y="361" width="1" height="1" fill="#22d0c8"/><rect x="808" y="361" width="1" height="1" fill="#08a494"/><rect x="814" y="361" width="1" height="1" fill="#1cc6b6"/><rect x="776" y="362" width="1" height="1" fill="#0a9f92"/><rect x="776" y="363" width="1" height="1" fill="#1cc6b6"/><rect x="785" y="363" width="1" height="1" fill="#0a9f92"/><rect x="796" y="363" width="1" height="1" fill="#08a494"/><rect x="826" y="363" width="1" height="1" fill="#08a494"/><rect x="784" y="364" width="1" height="1" fill="#0a9f92"/><rect x="791" y="364" width="1" height="1" fill="#1cc6b6"/><rect x="808" y="364" width="1" height="1" fill="#1cc6b6"/><rect x="771" y="365" width="1" height="1" fill="#0b978d"/><rect x="789" y="365" width="1" height="1" fill="#1cc6b6"/><rect x="795" y="365" width="1" height="1" fill="#0b978d"/><rect x="803" y="365" width="1" height="1" fill="#1cc6b6"/><rect x="816" y="365" width="1" height="1" fill="#0b978d"/><rect x="774" y="366" width="1" height="1" fill="#08a494"/><rect x="809" y="366" width="1" height="1" fill="#1cc6b6"/><rect x="810" y="366" width="1" height="1" fill="#08a494"/><rect x="814" y="366" width="1" height="1" fill="#0a9f92"/><rect x="769" y="367" width="1" height="1" fill="#16bdab"/><rect x="772" y="367" width="1" height="1" fill="#16bdab"/><rect x="802" y="367" width="1" height="1" fill="#0a9f92"/><rect x="795" y="368" width="1" height="1" fill="#16bdab"/><rect x="803" y="368" width="1" height="1" fill="#1cc6b6"/><rect x="822" y="370" width="1" height="1" fill="#08a494"/><rect x="774" y="371" width="1" height="1" fill="#08a494"/><rect x="825" y="371" width="1" height="1" fill="#16bdab"/><rect x="777" y="372" width="1" height="1" fill="#0b978d"/><rect x="812" y="372" width="1" height="1" fill="#22d0c8"/><rect x="800" y="374" width="1" height="1" fill="#0b978d"/><rect x="784" y="375" width="1" height="1" fill="#0b978d"/><rect x="801" y="375" width="1" height="1" fill="#1cc6b6"/><rect x="808" y="375" width="1" height="1" fill="#08a494"/><rect x="790" y="376" width="1" height="1" fill="#08a494"/></svg><div class="r" style="left:0px;top:498px;width:16px;height:6px;background:#ffffff;"></div><div class="r" style="left:0;top:16px;width:767.5px;height:482px;background:#fff;border-radius:0 0 4px 0;overflow:hidden"><div class="r" style="left:143px;top:40.5px;width:625px;height:442px;background:#f1f3f8"></div></div><div class="r" style="left:0px;top:56px;width:767.5px;height:1px;background:#f0f1f5;"></div><div class="r" style="left:0px;top:464px;width:143px;height:1px;background:#eef0f4;"></div><svg class="r" style="left:0;top:0" width="40" height="56" viewBox="0 0 40 56"><path d="M9.9 42.9 L14.6 37.0 L17.1 34.7 L22.8 33.6 L25.1 35.1 L28.8 36.6 L27.4 39.4 L30.1 39.1 L30.3 40.4 L27 42.2 Q26 44.5 25.7 46.3 Q19 45.8 14 44.3 Q11.5 43.7 9.9 42.9 Z" fill="#22cdb0"/><path d="M14.9 35.8 Q18.8 41.4 25.8 45.7" fill="none" stroke="#fff" stroke-width="1.2"/><path d="M23.0 33.4 L25.2 34.9 L25.6 43.2 L24.6 44.2 Z" fill="#fff"/><path d="M29.6 36.9 L26.6 41.9" fill="none" stroke="#fff" stroke-width="1"/></svg><div class="t" style="left:33.55px;top:33.00px;font-size:15px;font-weight:400;color:#3b4150;letter-spacing:-0.1px">alegra</div><div class="r" style="left:3px;top:67px;width:135px;height:18.5px;background:#eff1f6;border-radius:5px"></div><div class="t" style="left:24.76px;top:73.00px;font-size:9px;font-weight:400;color:#2f333d;">Inicio</div><div class="t" style="left:24.76px;top:94.00px;font-size:9px;font-weight:400;color:#4d515d;">Ingresos</div><div class="t" style="left:24.76px;top:116.00px;font-size:9px;font-weight:400;color:#4d515d;">Gastos</div><div class="t" style="left:24.76px;top:138.00px;font-size:9px;font-weight:400;color:#4d515d;">Contactos</div><div class="t" style="left:24.76px;top:159.00px;font-size:9px;font-weight:400;color:#4d515d;">Inventario</div><div class="t" style="left:24.76px;top:181.00px;font-size:9px;font-weight:400;color:#4d515d;">Bancos</div><div class="t" style="left:24.76px;top:203.00px;font-size:9px;font-weight:400;color:#4d515d;">Contabilidad</div><div class="t" style="left:24.76px;top:224.00px;font-size:9px;font-weight:400;color:#4d515d;">Reportes</div><div class="t" style="left:24.76px;top:246.00px;font-size:9px;font-weight:400;color:#4d515d;">Portal clientes</div><div class="t" style="left:24.46px;top:477.00px;font-size:9px;font-weight:400;color:#4d515d;">Configuración</div><div class="r" style="left:157px;top:30.5px;width:19.5px;height:19.5px;border:1px solid #e1e4ea;box-sizing:border-box;border-radius:4px;background:#fff"></div><div class="r" style="left:186.3px;top:30.5px;width:162.5px;height:19.5px;border:1px solid #e4e7ec;box-sizing:border-box;border-radius:4px;background:#fff"></div><div class="t" style="left:191.18px;top:36.00px;font-size:8.7px;font-weight:400;color:#a3aab8;">Buscar...</div><div class="r" style="left:691.6px;top:28.4px;width:62px;height:23.6px;border:1px solid #eceef2;box-sizing:border-box;border-radius:5px;background:#fff"></div><div class="r" style="left:734.8px;top:33.2px;width:14.5px;height:14.5px;border-radius:50%;background:#c9cdf5"></div><div class="t" style="left:736.60px;top:37.00px;font-size:7.6px;font-weight:400;color:#2f3566;letter-spacing:-0.4px">MP</div><div class="t" style="left:156.76px;top:75.00px;font-size:12px;font-weight:700;color:#191c24;">Resumen del negocio</div><div class="r" style="left:157px;top:100px;width:597px;height:1px;background:#dfe2ea;"></div><div class="r" style="left:157.6px;top:110.7px;width:88.5px;height:18.6px;border-radius:10px;background:#fff"></div><div class="t" style="left:169.35px;top:117.00px;font-size:7.4px;font-weight:700;color:#474d5c;">Últimos 30 días</div><div class="r" style="left:659.8px;top:110.9px;width:94.5px;height:18.7px;border-radius:4px;background:#30aaa2"></div><div class="t" style="left:669.82px;top:117.00px;font-size:9.1px;font-weight:400;color:#ffffff;-webkit-text-stroke:0.25px #fff">Agregar gráfica</div><div class="r" style="left:158px;top:140px;width:172.5px;height:121.3px;background:#fff;border-radius:6px;box-shadow:0 0 0 0.6px #e6e9ee"></div><div class="r" style="left:336px;top:140px;width:172px;height:121.3px;background:#fff;border-radius:6px;box-shadow:0 0 0 0.6px #e6e9ee"></div><div class="r" style="left:514px;top:140.2px;width:114px;height:57.6px;background:#fff;border-radius:6px;box-shadow:0 0 0 0.6px #e6e9ee"></div><div class="r" style="left:514px;top:204px;width:114px;height:56.8px;background:#fff;border-radius:6px;box-shadow:0 0 0 0.6px #e6e9ee"></div><div class="r" style="left:639px;top:140.2px;width:114px;height:57.6px;background:#fff;border-radius:6px;box-shadow:0 0 0 0.6px #e6e9ee"></div><div class="r" style="left:639px;top:204px;width:114px;height:56.8px;background:#fff;border-radius:6px;box-shadow:0 0 0 0.6px #e6e9ee"></div><div class="r" style="left:158px;top:272.6px;width:595px;height:203.3px;background:#fff;border-radius:6px;box-shadow:0 0 0 0.6px #e6e9ee"></div><div class="t" style="left:162.07px;top:156.00px;font-size:8.5px;font-weight:700;color:#434958;">Cuentas por pagar</div><div class="r" style="left:162.5px;top:164.3px;width:75.2px;height:1.6px;background:#c3c7cf;"></div><div class="t" style="left:340.07px;top:156.00px;font-size:8.5px;font-weight:700;color:#434958;">Cuentas por cobrar</div><div class="r" style="left:340.5px;top:164.3px;width:78.5px;height:1.6px;background:#c3c7cf;"></div><div class="t" style="left:161.89px;top:171.00px;font-size:12.2px;font-weight:400;color:#333845;">S/3.124.535.314</div><div class="t" style="left:269.90px;top:174.00px;font-size:8px;font-weight:400;color:#3bb870;">4%</div><div class="r" style="left:162.0px;top:195px;width:164px;height:5px;border-radius:2.5px;overflow:hidden;background:#e24a4a"><div class="r" style="left:0;top:0;width:73.5px;height:5px;background:#3fc58c"></div><div class="r" style="left:73.5px;top:0;width:1px;height:5px;background:#fff"></div></div><div class="r" style="left:162.2px;top:209.4px;width:2.5px;height:37.6px;background:#3fc58c;"></div><div class="r" style="left:246.4px;top:209.4px;width:2.5px;height:37.6px;background:#e24a4a;"></div><div class="t" style="left:169.34px;top:211.00px;font-size:7.6px;font-weight:400;color:#4a5163;">Vigentes</div><div class="t" style="left:169.19px;top:225.00px;font-size:10.1px;font-weight:400;color:#333845;">S/232.241.425</div><div class="t" style="left:169.34px;top:240.00px;font-size:7.7px;font-weight:400;color:#8a91a3;">8 documentos</div><div class="t" style="left:253.55px;top:211.00px;font-size:7.55px;font-weight:400;color:#4a5163;">Vencidas a 30 días</div><div class="t" style="left:253.39px;top:225.00px;font-size:10.1px;font-weight:400;color:#333845;">S/232.241.425</div><div class="t" style="left:253.54px;top:240.00px;font-size:7.7px;font-weight:400;color:#8a91a3;">8 documentos</div><div class="t" style="left:339.89px;top:171.00px;font-size:12.2px;font-weight:400;color:#333845;">S/3.124.535.314</div><div class="t" style="left:447.90px;top:174.00px;font-size:8px;font-weight:400;color:#3bb870;">4%</div><div class="r" style="left:340.0px;top:195px;width:164px;height:5px;border-radius:2.5px;overflow:hidden;background:#e24a4a"><div class="r" style="left:0;top:0;width:121px;height:5px;background:#3fc58c"></div><div class="r" style="left:121px;top:0;width:1px;height:5px;background:#fff"></div></div><div class="r" style="left:340.2px;top:209.4px;width:2.5px;height:37.6px;background:#3fc58c;"></div><div class="r" style="left:424.4px;top:209.4px;width:2.5px;height:37.6px;background:#e24a4a;"></div><div class="t" style="left:347.34px;top:211.00px;font-size:7.6px;font-weight:400;color:#4a5163;">Vigentes</div><div class="t" style="left:347.19px;top:225.00px;font-size:10.1px;font-weight:400;color:#333845;">S/232.241.425</div><div class="t" style="left:347.34px;top:240.00px;font-size:7.7px;font-weight:400;color:#8a91a3;">8 documentos</div><div class="t" style="left:431.55px;top:211.00px;font-size:7.55px;font-weight:400;color:#4a5163;">Vencidas a 30 días</div><div class="t" style="left:431.39px;top:225.00px;font-size:10.1px;font-weight:400;color:#333845;">S/232.241.425</div><div class="t" style="left:431.54px;top:240.00px;font-size:7.7px;font-weight:400;color:#8a91a3;">8 documentos</div><div class="t" style="left:522.98px;top:151.00px;font-size:8.4px;font-weight:700;color:#434958;">Productos vendidos</div><div class="r" style="left:523.4px;top:159.2px;width:81px;height:1.4px;background:#a2a7b2;"></div><div class="t" style="left:522.63px;top:166.00px;font-size:12.8px;font-weight:400;color:#333845;">26</div><div class="t" style="left:597.52px;top:169.00px;font-size:8px;font-weight:400;color:#c94862;letter-spacing:-0.25px">10%</div><div class="t" style="left:522.98px;top:215.00px;font-size:8.4px;font-weight:700;color:#434958;">Impuestos de venta</div><div class="r" style="left:523.4px;top:222.9px;width:79.5px;height:1.4px;background:#a2a7b2;"></div><div class="t" style="left:522.63px;top:230.00px;font-size:12.8px;font-weight:400;color:#333845;">S/665.25</div><div class="t" style="left:597.52px;top:233.00px;font-size:8px;font-weight:400;color:#c94862;letter-spacing:-0.25px">10%</div><div class="t" style="left:647.18px;top:151.00px;font-size:8.5px;font-weight:700;color:#434958;">Devoluciones de clientes</div><div class="r" style="left:647.6px;top:159.2px;width:101.6px;height:1.4px;background:#a2a7b2;"></div><div class="t" style="left:647.14px;top:165.00px;font-size:7.6px;font-weight:400;color:#8a91a3;">Incluye impuestos</div><div class="t" style="left:646.83px;top:178.00px;font-size:12.8px;font-weight:400;color:#333845;">S/86.29</div><div class="t" style="left:715.79px;top:181.00px;font-size:8.5px;font-weight:400;color:#3bb870;letter-spacing:-0.35px">100%</div><div class="t" style="left:647.48px;top:215.00px;font-size:8.4px;font-weight:700;color:#434958;">Saldo actual en bancos</div><div class="r" style="left:647.9px;top:222.9px;width:93.8px;height:1.4px;background:#a2a7b2;"></div><div class="t" style="left:647.13px;top:230.00px;font-size:12.8px;font-weight:400;color:#333845;letter-spacing:0.14px">S/2.000.000.000</div><div class="t" style="left:171.67px;top:289.00px;font-size:8.55px;font-weight:700;color:#262b38;">Total de ventas</div><div class="r" style="left:172.1px;top:297px;width:61.7px;height:1px;background:#5a5f6c;"></div><div class="t" style="left:171.54px;top:302.00px;font-size:7.67px;font-weight:400;color:#7d8598;">La gráfica muestra el valor de tus ventas con impuestos incluidos.</div><div class="t" style="left:608.53px;top:293.00px;font-size:12.8px;font-weight:400;color:#333845;">S/402.684.752</div><div class="t" style="left:720.11px;top:295.00px;font-size:9.8px;font-weight:400;color:#3bb870;letter-spacing:-0.6px">16%</div><div class="t" style="right:631.7px;top:319px;font-size:7.5px;color:#4a5163">900K</div><div class="t" style="right:631.7px;top:339px;font-size:7.5px;color:#4a5163">700K</div><div class="t" style="right:631.7px;top:359px;font-size:7.5px;color:#4a5163">500K</div><div class="t" style="right:631.7px;top:378px;font-size:7.5px;color:#4a5163">400K</div><div class="t" style="right:631.7px;top:399px;font-size:7.5px;color:#4a5163">300K</div><div class="t" style="right:631.7px;top:419px;font-size:7.5px;color:#4a5163">0</div><div class="t" style="left:197.00px;width:30px;text-align:center;top:428px;font-size:7.3px;color:#4a5163">01 Ene</div><div class="t" style="left:270.43px;width:30px;text-align:center;top:428px;font-size:7.3px;color:#4a5163">06 Ene</div><div class="t" style="left:343.86px;width:30px;text-align:center;top:428px;font-size:7.3px;color:#4a5163">10 Ene</div><div class="t" style="left:417.29px;width:30px;text-align:center;top:428px;font-size:7.3px;color:#4a5163">14 Ene</div><div class="t" style="left:490.72px;width:30px;text-align:center;top:428px;font-size:7.3px;color:#4a5163">18 Ene</div><div class="t" style="left:564.15px;width:30px;text-align:center;top:428px;font-size:7.3px;color:#4a5163">22 Ene</div><div class="t" style="left:637.58px;width:30px;text-align:center;top:428px;font-size:7.3px;color:#4a5163">26 Ene</div><div class="t" style="left:711.01px;width:30px;text-align:center;top:428px;font-size:7.3px;color:#4a5163">30 Ene</div><div class="t" style="left:359.37px;top:452.00px;font-size:8.8px;font-weight:400;color:#3d4456;">01 Ene, 23 - 30 Ene, 23</div><div class="t" style="left:481.97px;top:452.00px;font-size:8.8px;font-weight:400;color:#3d4456;">02 Dic, 22 - 31 Dic, 22</div><svg class="r" style="left:0;top:0" width="827" height="573" viewBox="0 0 827 573"><line x1="195.5" y1="325.2" x2="739" y2="325.2" stroke="#f1f3f6" stroke-width="1"/><line x1="195.5" y1="344.6" x2="739" y2="344.6" stroke="#f1f3f6" stroke-width="1"/><line x1="195.5" y1="364.0" x2="739" y2="364.0" stroke="#f1f3f6" stroke-width="1"/><line x1="195.5" y1="383.4" x2="739" y2="383.4" stroke="#f1f3f6" stroke-width="1"/><line x1="195.5" y1="402.8" x2="739" y2="402.8" stroke="#f1f3f6" stroke-width="1"/><line x1="195.5" y1="422.2" x2="739" y2="422.2" stroke="#f1f3f6" stroke-width="1"/><line x1="212.00" y1="328" x2="212.00" y2="422" stroke="#ebedf2" stroke-width="0.7" stroke-dasharray="1.2 2.2"/><line x1="247.07" y1="328" x2="247.07" y2="422" stroke="#ebedf2" stroke-width="0.7" stroke-dasharray="1.2 2.2"/><line x1="282.14" y1="328" x2="282.14" y2="422" stroke="#ebedf2" stroke-width="0.7" stroke-dasharray="1.2 2.2"/><line x1="317.21" y1="328" x2="317.21" y2="422" stroke="#ebedf2" stroke-width="0.7" stroke-dasharray="1.2 2.2"/><line x1="352.28" y1="328" x2="352.28" y2="422" stroke="#ebedf2" stroke-width="0.7" stroke-dasharray="1.2 2.2"/><line x1="387.35" y1="328" x2="387.35" y2="422" stroke="#ebedf2" stroke-width="0.7" stroke-dasharray="1.2 2.2"/><line x1="422.42" y1="328" x2="422.42" y2="422" stroke="#ebedf2" stroke-width="0.7" stroke-dasharray="1.2 2.2"/><line x1="457.49" y1="328" x2="457.49" y2="422" stroke="#ebedf2" stroke-width="0.7" stroke-dasharray="1.2 2.2"/><line x1="492.56" y1="328" x2="492.56" y2="422" stroke="#ebedf2" stroke-width="0.7" stroke-dasharray="1.2 2.2"/><line x1="527.63" y1="328" x2="527.63" y2="422" stroke="#ebedf2" stroke-width="0.7" stroke-dasharray="1.2 2.2"/><line x1="562.70" y1="328" x2="562.70" y2="422" stroke="#ebedf2" stroke-width="0.7" stroke-dasharray="1.2 2.2"/><line x1="597.77" y1="328" x2="597.77" y2="422" stroke="#ebedf2" stroke-width="0.7" stroke-dasharray="1.2 2.2"/><line x1="632.84" y1="328" x2="632.84" y2="422" stroke="#ebedf2" stroke-width="0.7" stroke-dasharray="1.2 2.2"/><line x1="667.91" y1="328" x2="667.91" y2="422" stroke="#ebedf2" stroke-width="0.7" stroke-dasharray="1.2 2.2"/><line x1="702.98" y1="328" x2="702.98" y2="422" stroke="#ebedf2" stroke-width="0.7" stroke-dasharray="1.2 2.2"/><line x1="738.05" y1="328" x2="738.05" y2="422" stroke="#ebedf2" stroke-width="0.7" stroke-dasharray="1.2 2.2"/><polyline points="212,381.5 249.4,395.1 286.9,394.5 324.8,393.5 362.7,369.5 399.6,383.8 436.6,404.2 475.9,386 511.7,371.7 549.6,383.1 586,380.4 623.8,368.6 660.1,371.3 702.1,366.3 739.6,363.5" fill="none" stroke="#50cea3" stroke-width="1.3" stroke-dasharray="2.7 1.8"/><polyline points="212,340 249.4,349.7 286.9,372.4 324.8,332.7 362.7,342.2 400.8,337.7 438.2,365.2 475.9,371.7 513.8,348.6 550.8,363.8 588.9,332.2 626.8,337.7 664.7,350.2 702.1,340.2 739.6,350.2" fill="none" stroke="#3b4d9a" stroke-width="1.35" stroke-linejoin="round"/><line x1="340.4" y1="455.7" x2="354.5" y2="455.7" stroke="#3a4e9c" stroke-width="2"/><line x1="462.7" y1="455.7" x2="478" y2="455.7" stroke="#45c99c" stroke-width="1.8" stroke-dasharray="2.4 3.9"/><circle cx="241.9" cy="292.2" r="3.6" fill="none" stroke="#9aa1b2" stroke-width="0.8"/><line x1="241.9" y1="291.4" x2="241.9" y2="294.2" stroke="#9aa1b2" stroke-width="0.8"/><circle cx="241.9" cy="290.2" r="0.45" fill="#9aa1b2"/><path d="M263.9 179.6 V174 M261.29999999999995 176.6 L263.9 174 L266.5 176.6" fill="none" stroke="#3bb870" stroke-width="0.9" stroke-linecap="round" stroke-linejoin="round"/><path d="M441.9 179.6 V174 M439.29999999999995 176.6 L441.9 174 L444.5 176.6" fill="none" stroke="#3bb870" stroke-width="0.9" stroke-linecap="round" stroke-linejoin="round"/><path d="M591.3 169 V174.8 M588.6999999999999 172.20000000000002 L591.3 174.8 L593.9 172.20000000000002" fill="none" stroke="#c94862" stroke-width="0.9" stroke-linecap="round" stroke-linejoin="round"/><path d="M591.3 232.6 V238.4 M588.6999999999999 235.8 L591.3 238.4 L593.9 235.8" fill="none" stroke="#c94862" stroke-width="0.9" stroke-linecap="round" stroke-linejoin="round"/><path d="M709.7 187.2 V181.2 M707.1 183.79999999999998 L709.7 181.2 L712.3000000000001 183.79999999999998" fill="none" stroke="#3bb870" stroke-width="0.9" stroke-linecap="round" stroke-linejoin="round"/><path d="M711.3 302.5 V293.6 M708.6999999999999 296.20000000000005 L711.3 293.6 L713.9 296.20000000000005" fill="none" stroke="#3bb870" stroke-width="1.0" stroke-linecap="round" stroke-linejoin="round"/><path d="M124.1 96.3 L127.5 99.6 L130.9 96.3" fill="none" stroke="#8c92a2" stroke-width="0.95"/><path d="M124.1 118.0 L127.5 121.3 L130.9 118.0" fill="none" stroke="#8c92a2" stroke-width="0.95"/><path d="M124.1 139.60000000000002 L127.5 142.9 L130.9 139.60000000000002" fill="none" stroke="#8c92a2" stroke-width="0.95"/><path d="M124.1 161.0 L127.5 164.29999999999998 L130.9 161.0" fill="none" stroke="#8c92a2" stroke-width="0.95"/><path d="M124.1 204.70000000000002 L127.5 208.0 L130.9 204.70000000000002" fill="none" stroke="#8c92a2" stroke-width="0.95"/><path d="M229.6 119.6 L232.1 122.1 L234.6 119.6" fill="none" stroke="#8a91a3" stroke-width="0.8"/><path d="M737.6 119.2 L740.1 121.7 L742.6 119.2" fill="none" stroke="#ffffff" stroke-width="0.85"/><path d="M166.8 37.3 V43.1 M163.9 40.2 H169.7" stroke="#555b68" stroke-width="0.95"/><circle cx="338.2" cy="39.3" r="2.9" fill="none" stroke="#3a4052" stroke-width="1"/><line x1="340.3" y1="41.4" x2="342.8" y2="43.8" stroke="#3a4052" stroke-width="1"/><circle cx="617" cy="40.2" r="5.6" fill="none" stroke="#3d4456" stroke-width="1"/><path d="M615.2 38.6 Q615.3 36.7 617 36.7 Q618.8 36.7 618.8 38.4 Q618.8 39.5 617.6 40.1 Q617 40.4 617 41.5" fill="none" stroke="#3d4456" stroke-width="0.9"/><circle cx="617" cy="43.2" r="0.55" fill="#3d4456"/><path d="M641.3 44.2 H650.6 L649.5 42.6 V39.4 Q649.5 35 646 34.6 Q642.4 35 642.4 39.4 V42.6 Z" fill="none" stroke="#3d4456" stroke-width="1" stroke-linejoin="round"/><path d="M644.5 44.6 A1.5 1.5 0 0 0 647.5 44.6" fill="none" stroke="#3d4456" stroke-width="1"/><circle cx="670.30" cy="36.00" r="1.1" fill="#3d4456"/><circle cx="670.30" cy="40.25" r="1.1" fill="#3d4456"/><circle cx="670.30" cy="44.50" r="1.1" fill="#3d4456"/><circle cx="674.65" cy="36.00" r="1.1" fill="#3d4456"/><circle cx="674.65" cy="40.25" r="1.1" fill="#3d4456"/><circle cx="674.65" cy="44.50" r="1.1" fill="#3d4456"/><circle cx="679.00" cy="36.00" r="1.1" fill="#3d4456"/><circle cx="679.00" cy="40.25" r="1.1" fill="#3d4456"/><circle cx="679.00" cy="44.50" r="1.1" fill="#3d4456"/><path d="M700.5 38.3 L705.5 38.3 L703 43.2 Z" fill="#151a3c"/><text x="705.8" y="41.6" font-family="Liberation Sans" font-size="4" font-weight="700" fill="#151a3c">logoipsum'</text><path d="M9.7 76.4 L14.2 71.8 L18.7 76.4 M10.8 75.5 V81 H17.6 V75.5 M12.9 81 V78 Q14.2 76.7 15.5 78 V81" fill="none" stroke="#2e3444" stroke-width="1.2" stroke-linejoin="round"/><circle cx="14.2" cy="97.7" r="4.9" fill="none" stroke="#9aa1b2" stroke-width="0.9"/><path d="M16.2 95.7 L12.4 99.5 M12.4 97 V99.5 H14.9" fill="none" stroke="#9aa1b2" stroke-width="0.9"/><circle cx="14.2" cy="119.4" r="4.9" fill="none" stroke="#9aa1b2" stroke-width="0.9"/><path d="M12.2 121.4 L16 117.6 M13.5 117.6 H16 V120.1" fill="none" stroke="#9aa1b2" stroke-width="0.9"/><circle cx="12.8" cy="138.7" r="2.2" fill="none" stroke="#9aa1b2" stroke-width="0.9"/><path d="M9.2 146 Q9.2 142.2 12.8 142.2 Q16.4 142.2 16.4 146 M16.3 136.6 Q17.8 137.5 17.5 139.2 Q17.3 140.2 16.4 140.8 M17.7 142.6 Q19 143.6 19 146" fill="none" stroke="#9aa1b2" stroke-width="0.9"/><path d="M14.2 157.3 L18.8 159.8 V165 L14.2 167.5 L9.6 165 V159.8 Z M9.6 159.8 L14.2 162.3 L18.8 159.8 M14.2 162.3 V167.5" fill="none" stroke="#9aa1b2" stroke-width="0.9" stroke-linejoin="round"/><path d="M9.8 181 Q14.2 177.5 18.6 181 M9.8 182.6 H18.6 V189.2 H9.8 Z M12.3 184.5 V187 M14.2 184.5 V187 M16.1 184.5 V187" fill="none" stroke="#9aa1b2" stroke-width="0.9"/><rect x="10" y="200.6" width="8.4" height="10.4" rx="1" fill="none" stroke="#9aa1b2" stroke-width="0.9"/><rect x="11.8" y="202.4" width="4.8" height="2.2" rx="0.5" fill="none" stroke="#9aa1b2" stroke-width="0.8"/><circle cx="12.2" cy="206.6" r="0.4" fill="#9aa1b2"/><circle cx="12.2" cy="208.6" r="0.4" fill="#9aa1b2"/><circle cx="14.2" cy="206.6" r="0.4" fill="#9aa1b2"/><circle cx="14.2" cy="208.6" r="0.4" fill="#9aa1b2"/><circle cx="16.2" cy="206.6" r="0.4" fill="#9aa1b2"/><circle cx="16.2" cy="208.6" r="0.4" fill="#9aa1b2"/><path d="M9.7 229.9 L13.2 226.5 L15.3 229 L18.6 225.6" fill="none" stroke="#737888" stroke-width="1" stroke-linejoin="round" stroke-linecap="round"/><path d="M9.6 253.5 L10 250.6 L15.3 245.3 Q16.6 244.3 18 245.6 Q19 247 18 248.2 L12.6 253.5 Z M10.6 253 L13 250.6 M13.8 247 L16.2 249.3" fill="none" stroke="#9aa1b2" stroke-width="0.9" stroke-linejoin="round"/><circle cx="14.1" cy="480.6" r="1.5" fill="none" stroke="#9aa1b2" stroke-width="0.9"/><polygon points="18.9,480.6 17.61,482.05 17.49,483.99 15.55,484.11 14.1,485.4 12.65,484.11 10.71,483.99 10.59,482.05 9.3,480.6 10.59,479.15 10.71,477.21 12.65,477.09 14.1,475.8 15.55,477.09 17.49,477.21 17.61,479.15" fill="none" stroke="#9aa1b2" stroke-width="0.9" stroke-linejoin="round"/></svg>
</body></html>
